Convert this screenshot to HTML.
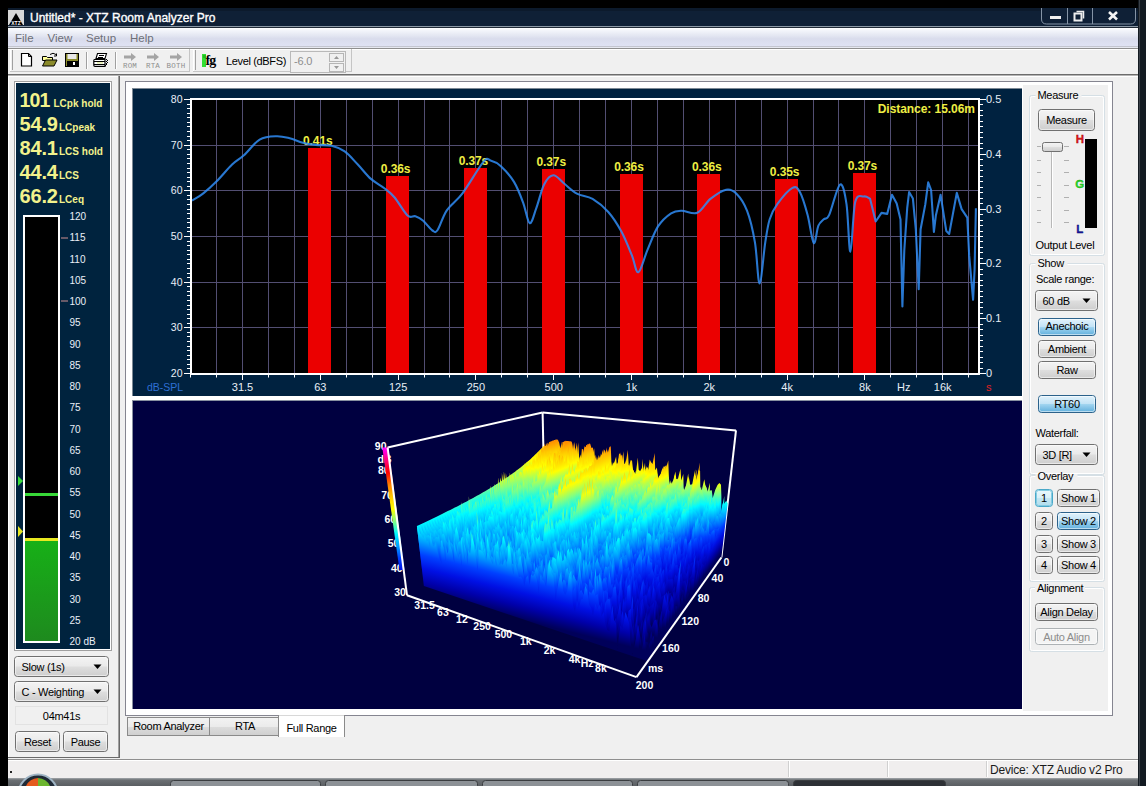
<!DOCTYPE html><html><head><meta charset="utf-8"><title>XTZ Room Analyzer Pro</title><style>html,body{margin:0;padding:0;background:#000;width:1146px;height:786px;overflow:hidden}</style></head><body><svg width="1146" height="786" viewBox="0 0 1146 786" font-family='"Liberation Sans", sans-serif' style="display:block"><defs><linearGradient id="gMenu" x1="0" y1="0" x2="0" y2="1"><stop offset="0" stop-color="#ffffff"/><stop offset="0.12" stop-color="#f4f6fb"/><stop offset="0.45" stop-color="#e2e5f1"/><stop offset="0.6" stop-color="#d9dcec"/><stop offset="1" stop-color="#dfe2f3"/></linearGradient><linearGradient id="gTask" x1="0" y1="0" x2="0" y2="1"><stop offset="0" stop-color="#a4a8ac"/><stop offset="0.25" stop-color="#6c7074"/><stop offset="1" stop-color="#5a5e62"/></linearGradient><linearGradient id="gGreen" x1="0" y1="0" x2="0" y2="1"><stop offset="0" stop-color="#17b017"/><stop offset="1" stop-color="#1e8a1e"/></linearGradient><clipPath id="cpPlot"><rect x="192" y="100" width="786" height="273"/></clipPath><linearGradient id="w0" gradientUnits="userSpaceOnUse" x1="633.9" y1="538.7" x2="652.0" y2="423.4"><stop offset="0.000" stop-color="rgb(0, 0, 90)"/><stop offset="0.083" stop-color="rgb(0, 0, 170)"/><stop offset="0.167" stop-color="rgb(0, 16, 228)"/><stop offset="0.250" stop-color="rgb(0, 64, 255)"/><stop offset="0.333" stop-color="rgb(0, 160, 255)"/><stop offset="0.417" stop-color="rgb(0, 250, 255)"/><stop offset="0.500" stop-color="rgb(130, 255, 130)"/><stop offset="0.583" stop-color="rgb(255, 255, 0)"/><stop offset="0.667" stop-color="rgb(255, 200, 0)"/><stop offset="0.750" stop-color="rgb(255, 128, 0)"/><stop offset="0.833" stop-color="rgb(255, 0, 0)"/><stop offset="0.917" stop-color="rgb(255, 0, 128)"/><stop offset="1.000" stop-color="rgb(255, 0, 255)"/></linearGradient><linearGradient id="w1" gradientUnits="userSpaceOnUse" x1="632.8" y1="539.7" x2="651.0" y2="423.9"><stop offset="0.000" stop-color="rgb(0, 0, 90)"/><stop offset="0.083" stop-color="rgb(0, 0, 170)"/><stop offset="0.167" stop-color="rgb(0, 16, 228)"/><stop offset="0.250" stop-color="rgb(0, 64, 255)"/><stop offset="0.333" stop-color="rgb(0, 160, 255)"/><stop offset="0.417" stop-color="rgb(0, 250, 255)"/><stop offset="0.500" stop-color="rgb(130, 255, 130)"/><stop offset="0.583" stop-color="rgb(255, 255, 0)"/><stop offset="0.667" stop-color="rgb(255, 200, 0)"/><stop offset="0.750" stop-color="rgb(255, 128, 0)"/><stop offset="0.833" stop-color="rgb(255, 0, 0)"/><stop offset="0.917" stop-color="rgb(255, 0, 128)"/><stop offset="1.000" stop-color="rgb(255, 0, 255)"/></linearGradient><linearGradient id="w2" gradientUnits="userSpaceOnUse" x1="631.6" y1="540.6" x2="650.1" y2="424.4"><stop offset="0.000" stop-color="rgb(0, 0, 90)"/><stop offset="0.083" stop-color="rgb(0, 0, 170)"/><stop offset="0.167" stop-color="rgb(0, 16, 228)"/><stop offset="0.250" stop-color="rgb(0, 64, 255)"/><stop offset="0.333" stop-color="rgb(0, 160, 255)"/><stop offset="0.417" stop-color="rgb(0, 250, 255)"/><stop offset="0.500" stop-color="rgb(130, 255, 130)"/><stop offset="0.583" stop-color="rgb(255, 255, 0)"/><stop offset="0.667" stop-color="rgb(255, 200, 0)"/><stop offset="0.750" stop-color="rgb(255, 128, 0)"/><stop offset="0.833" stop-color="rgb(255, 0, 0)"/><stop offset="0.917" stop-color="rgb(255, 0, 128)"/><stop offset="1.000" stop-color="rgb(255, 0, 255)"/></linearGradient><linearGradient id="w3" gradientUnits="userSpaceOnUse" x1="630.5" y1="541.6" x2="649.1" y2="424.9"><stop offset="0.000" stop-color="rgb(0, 0, 90)"/><stop offset="0.083" stop-color="rgb(0, 0, 170)"/><stop offset="0.167" stop-color="rgb(0, 16, 228)"/><stop offset="0.250" stop-color="rgb(0, 64, 255)"/><stop offset="0.333" stop-color="rgb(0, 160, 255)"/><stop offset="0.417" stop-color="rgb(0, 250, 255)"/><stop offset="0.500" stop-color="rgb(130, 255, 130)"/><stop offset="0.583" stop-color="rgb(255, 255, 0)"/><stop offset="0.667" stop-color="rgb(255, 200, 0)"/><stop offset="0.750" stop-color="rgb(255, 128, 0)"/><stop offset="0.833" stop-color="rgb(255, 0, 0)"/><stop offset="0.917" stop-color="rgb(255, 0, 128)"/><stop offset="1.000" stop-color="rgb(255, 0, 255)"/></linearGradient><linearGradient id="w4" gradientUnits="userSpaceOnUse" x1="629.3" y1="542.6" x2="648.1" y2="425.4"><stop offset="0.000" stop-color="rgb(0, 0, 90)"/><stop offset="0.083" stop-color="rgb(0, 0, 170)"/><stop offset="0.167" stop-color="rgb(0, 16, 228)"/><stop offset="0.250" stop-color="rgb(0, 64, 255)"/><stop offset="0.333" stop-color="rgb(0, 160, 255)"/><stop offset="0.417" stop-color="rgb(0, 250, 255)"/><stop offset="0.500" stop-color="rgb(130, 255, 130)"/><stop offset="0.583" stop-color="rgb(255, 255, 0)"/><stop offset="0.667" stop-color="rgb(255, 200, 0)"/><stop offset="0.750" stop-color="rgb(255, 128, 0)"/><stop offset="0.833" stop-color="rgb(255, 0, 0)"/><stop offset="0.917" stop-color="rgb(255, 0, 128)"/><stop offset="1.000" stop-color="rgb(255, 0, 255)"/></linearGradient><linearGradient id="w5" gradientUnits="userSpaceOnUse" x1="628.1" y1="543.5" x2="647.1" y2="425.9"><stop offset="0.000" stop-color="rgb(0, 0, 90)"/><stop offset="0.083" stop-color="rgb(0, 0, 170)"/><stop offset="0.167" stop-color="rgb(0, 16, 228)"/><stop offset="0.250" stop-color="rgb(0, 64, 255)"/><stop offset="0.333" stop-color="rgb(0, 160, 255)"/><stop offset="0.417" stop-color="rgb(0, 250, 255)"/><stop offset="0.500" stop-color="rgb(130, 255, 130)"/><stop offset="0.583" stop-color="rgb(255, 255, 0)"/><stop offset="0.667" stop-color="rgb(255, 200, 0)"/><stop offset="0.750" stop-color="rgb(255, 128, 0)"/><stop offset="0.833" stop-color="rgb(255, 0, 0)"/><stop offset="0.917" stop-color="rgb(255, 0, 128)"/><stop offset="1.000" stop-color="rgb(255, 0, 255)"/></linearGradient><linearGradient id="w6" gradientUnits="userSpaceOnUse" x1="626.9" y1="544.5" x2="646.1" y2="426.4"><stop offset="0.000" stop-color="rgb(0, 0, 90)"/><stop offset="0.083" stop-color="rgb(0, 0, 170)"/><stop offset="0.167" stop-color="rgb(0, 16, 228)"/><stop offset="0.250" stop-color="rgb(0, 64, 255)"/><stop offset="0.333" stop-color="rgb(0, 160, 255)"/><stop offset="0.417" stop-color="rgb(0, 250, 255)"/><stop offset="0.500" stop-color="rgb(130, 255, 130)"/><stop offset="0.583" stop-color="rgb(255, 255, 0)"/><stop offset="0.667" stop-color="rgb(255, 200, 0)"/><stop offset="0.750" stop-color="rgb(255, 128, 0)"/><stop offset="0.833" stop-color="rgb(255, 0, 0)"/><stop offset="0.917" stop-color="rgb(255, 0, 128)"/><stop offset="1.000" stop-color="rgb(255, 0, 255)"/></linearGradient><linearGradient id="w7" gradientUnits="userSpaceOnUse" x1="625.7" y1="545.5" x2="645.1" y2="426.9"><stop offset="0.000" stop-color="rgb(0, 0, 90)"/><stop offset="0.083" stop-color="rgb(0, 0, 170)"/><stop offset="0.167" stop-color="rgb(0, 16, 228)"/><stop offset="0.250" stop-color="rgb(0, 64, 255)"/><stop offset="0.333" stop-color="rgb(0, 160, 255)"/><stop offset="0.417" stop-color="rgb(0, 250, 255)"/><stop offset="0.500" stop-color="rgb(130, 255, 130)"/><stop offset="0.583" stop-color="rgb(255, 255, 0)"/><stop offset="0.667" stop-color="rgb(255, 200, 0)"/><stop offset="0.750" stop-color="rgb(255, 128, 0)"/><stop offset="0.833" stop-color="rgb(255, 0, 0)"/><stop offset="0.917" stop-color="rgb(255, 0, 128)"/><stop offset="1.000" stop-color="rgb(255, 0, 255)"/></linearGradient><linearGradient id="w8" gradientUnits="userSpaceOnUse" x1="624.5" y1="546.5" x2="644.0" y2="427.4"><stop offset="0.000" stop-color="rgb(0, 0, 90)"/><stop offset="0.083" stop-color="rgb(0, 0, 170)"/><stop offset="0.167" stop-color="rgb(0, 16, 228)"/><stop offset="0.250" stop-color="rgb(0, 64, 255)"/><stop offset="0.333" stop-color="rgb(0, 160, 255)"/><stop offset="0.417" stop-color="rgb(0, 250, 255)"/><stop offset="0.500" stop-color="rgb(130, 255, 130)"/><stop offset="0.583" stop-color="rgb(255, 255, 0)"/><stop offset="0.667" stop-color="rgb(255, 200, 0)"/><stop offset="0.750" stop-color="rgb(255, 128, 0)"/><stop offset="0.833" stop-color="rgb(255, 0, 0)"/><stop offset="0.917" stop-color="rgb(255, 0, 128)"/><stop offset="1.000" stop-color="rgb(255, 0, 255)"/></linearGradient><linearGradient id="w9" gradientUnits="userSpaceOnUse" x1="623.3" y1="547.6" x2="643.0" y2="428.0"><stop offset="0.000" stop-color="rgb(0, 0, 90)"/><stop offset="0.083" stop-color="rgb(0, 0, 170)"/><stop offset="0.167" stop-color="rgb(0, 16, 228)"/><stop offset="0.250" stop-color="rgb(0, 64, 255)"/><stop offset="0.333" stop-color="rgb(0, 160, 255)"/><stop offset="0.417" stop-color="rgb(0, 250, 255)"/><stop offset="0.500" stop-color="rgb(130, 255, 130)"/><stop offset="0.583" stop-color="rgb(255, 255, 0)"/><stop offset="0.667" stop-color="rgb(255, 200, 0)"/><stop offset="0.750" stop-color="rgb(255, 128, 0)"/><stop offset="0.833" stop-color="rgb(255, 0, 0)"/><stop offset="0.917" stop-color="rgb(255, 0, 128)"/><stop offset="1.000" stop-color="rgb(255, 0, 255)"/></linearGradient><linearGradient id="w10" gradientUnits="userSpaceOnUse" x1="622.0" y1="548.6" x2="642.0" y2="428.5"><stop offset="0.000" stop-color="rgb(0, 0, 90)"/><stop offset="0.083" stop-color="rgb(0, 0, 170)"/><stop offset="0.167" stop-color="rgb(0, 16, 228)"/><stop offset="0.250" stop-color="rgb(0, 64, 255)"/><stop offset="0.333" stop-color="rgb(0, 160, 255)"/><stop offset="0.417" stop-color="rgb(0, 250, 255)"/><stop offset="0.500" stop-color="rgb(130, 255, 130)"/><stop offset="0.583" stop-color="rgb(255, 255, 0)"/><stop offset="0.667" stop-color="rgb(255, 200, 0)"/><stop offset="0.750" stop-color="rgb(255, 128, 0)"/><stop offset="0.833" stop-color="rgb(255, 0, 0)"/><stop offset="0.917" stop-color="rgb(255, 0, 128)"/><stop offset="1.000" stop-color="rgb(255, 0, 255)"/></linearGradient><linearGradient id="w11" gradientUnits="userSpaceOnUse" x1="620.7" y1="549.6" x2="640.9" y2="429.0"><stop offset="0.000" stop-color="rgb(0, 0, 90)"/><stop offset="0.083" stop-color="rgb(0, 0, 170)"/><stop offset="0.167" stop-color="rgb(0, 16, 228)"/><stop offset="0.250" stop-color="rgb(0, 64, 255)"/><stop offset="0.333" stop-color="rgb(0, 160, 255)"/><stop offset="0.417" stop-color="rgb(0, 250, 255)"/><stop offset="0.500" stop-color="rgb(130, 255, 130)"/><stop offset="0.583" stop-color="rgb(255, 255, 0)"/><stop offset="0.667" stop-color="rgb(255, 200, 0)"/><stop offset="0.750" stop-color="rgb(255, 128, 0)"/><stop offset="0.833" stop-color="rgb(255, 0, 0)"/><stop offset="0.917" stop-color="rgb(255, 0, 128)"/><stop offset="1.000" stop-color="rgb(255, 0, 255)"/></linearGradient><linearGradient id="w12" gradientUnits="userSpaceOnUse" x1="619.5" y1="550.7" x2="639.9" y2="429.6"><stop offset="0.000" stop-color="rgb(0, 0, 90)"/><stop offset="0.083" stop-color="rgb(0, 0, 170)"/><stop offset="0.167" stop-color="rgb(0, 16, 228)"/><stop offset="0.250" stop-color="rgb(0, 64, 255)"/><stop offset="0.333" stop-color="rgb(0, 160, 255)"/><stop offset="0.417" stop-color="rgb(0, 250, 255)"/><stop offset="0.500" stop-color="rgb(130, 255, 130)"/><stop offset="0.583" stop-color="rgb(255, 255, 0)"/><stop offset="0.667" stop-color="rgb(255, 200, 0)"/><stop offset="0.750" stop-color="rgb(255, 128, 0)"/><stop offset="0.833" stop-color="rgb(255, 0, 0)"/><stop offset="0.917" stop-color="rgb(255, 0, 128)"/><stop offset="1.000" stop-color="rgb(255, 0, 255)"/></linearGradient><linearGradient id="w13" gradientUnits="userSpaceOnUse" x1="618.2" y1="551.8" x2="638.8" y2="430.2"><stop offset="0.000" stop-color="rgb(0, 0, 90)"/><stop offset="0.083" stop-color="rgb(0, 0, 170)"/><stop offset="0.167" stop-color="rgb(0, 16, 228)"/><stop offset="0.250" stop-color="rgb(0, 64, 255)"/><stop offset="0.333" stop-color="rgb(0, 160, 255)"/><stop offset="0.417" stop-color="rgb(0, 250, 255)"/><stop offset="0.500" stop-color="rgb(130, 255, 130)"/><stop offset="0.583" stop-color="rgb(255, 255, 0)"/><stop offset="0.667" stop-color="rgb(255, 200, 0)"/><stop offset="0.750" stop-color="rgb(255, 128, 0)"/><stop offset="0.833" stop-color="rgb(255, 0, 0)"/><stop offset="0.917" stop-color="rgb(255, 0, 128)"/><stop offset="1.000" stop-color="rgb(255, 0, 255)"/></linearGradient><linearGradient id="w14" gradientUnits="userSpaceOnUse" x1="616.9" y1="552.8" x2="637.7" y2="430.7"><stop offset="0.000" stop-color="rgb(0, 0, 90)"/><stop offset="0.083" stop-color="rgb(0, 0, 170)"/><stop offset="0.167" stop-color="rgb(0, 16, 228)"/><stop offset="0.250" stop-color="rgb(0, 64, 255)"/><stop offset="0.333" stop-color="rgb(0, 160, 255)"/><stop offset="0.417" stop-color="rgb(0, 250, 255)"/><stop offset="0.500" stop-color="rgb(130, 255, 130)"/><stop offset="0.583" stop-color="rgb(255, 255, 0)"/><stop offset="0.667" stop-color="rgb(255, 200, 0)"/><stop offset="0.750" stop-color="rgb(255, 128, 0)"/><stop offset="0.833" stop-color="rgb(255, 0, 0)"/><stop offset="0.917" stop-color="rgb(255, 0, 128)"/><stop offset="1.000" stop-color="rgb(255, 0, 255)"/></linearGradient><linearGradient id="w15" gradientUnits="userSpaceOnUse" x1="615.6" y1="553.9" x2="636.6" y2="431.3"><stop offset="0.000" stop-color="rgb(0, 0, 90)"/><stop offset="0.083" stop-color="rgb(0, 0, 170)"/><stop offset="0.167" stop-color="rgb(0, 16, 228)"/><stop offset="0.250" stop-color="rgb(0, 64, 255)"/><stop offset="0.333" stop-color="rgb(0, 160, 255)"/><stop offset="0.417" stop-color="rgb(0, 250, 255)"/><stop offset="0.500" stop-color="rgb(130, 255, 130)"/><stop offset="0.583" stop-color="rgb(255, 255, 0)"/><stop offset="0.667" stop-color="rgb(255, 200, 0)"/><stop offset="0.750" stop-color="rgb(255, 128, 0)"/><stop offset="0.833" stop-color="rgb(255, 0, 0)"/><stop offset="0.917" stop-color="rgb(255, 0, 128)"/><stop offset="1.000" stop-color="rgb(255, 0, 255)"/></linearGradient><linearGradient id="w16" gradientUnits="userSpaceOnUse" x1="614.3" y1="555.0" x2="635.5" y2="431.9"><stop offset="0.000" stop-color="rgb(0, 0, 90)"/><stop offset="0.083" stop-color="rgb(0, 0, 170)"/><stop offset="0.167" stop-color="rgb(0, 16, 228)"/><stop offset="0.250" stop-color="rgb(0, 64, 255)"/><stop offset="0.333" stop-color="rgb(0, 160, 255)"/><stop offset="0.417" stop-color="rgb(0, 250, 255)"/><stop offset="0.500" stop-color="rgb(130, 255, 130)"/><stop offset="0.583" stop-color="rgb(255, 255, 0)"/><stop offset="0.667" stop-color="rgb(255, 200, 0)"/><stop offset="0.750" stop-color="rgb(255, 128, 0)"/><stop offset="0.833" stop-color="rgb(255, 0, 0)"/><stop offset="0.917" stop-color="rgb(255, 0, 128)"/><stop offset="1.000" stop-color="rgb(255, 0, 255)"/></linearGradient><linearGradient id="w17" gradientUnits="userSpaceOnUse" x1="612.9" y1="556.1" x2="634.4" y2="432.5"><stop offset="0.000" stop-color="rgb(0, 0, 90)"/><stop offset="0.083" stop-color="rgb(0, 0, 170)"/><stop offset="0.167" stop-color="rgb(0, 16, 228)"/><stop offset="0.250" stop-color="rgb(0, 64, 255)"/><stop offset="0.333" stop-color="rgb(0, 160, 255)"/><stop offset="0.417" stop-color="rgb(0, 250, 255)"/><stop offset="0.500" stop-color="rgb(130, 255, 130)"/><stop offset="0.583" stop-color="rgb(255, 255, 0)"/><stop offset="0.667" stop-color="rgb(255, 200, 0)"/><stop offset="0.750" stop-color="rgb(255, 128, 0)"/><stop offset="0.833" stop-color="rgb(255, 0, 0)"/><stop offset="0.917" stop-color="rgb(255, 0, 128)"/><stop offset="1.000" stop-color="rgb(255, 0, 255)"/></linearGradient><linearGradient id="w18" gradientUnits="userSpaceOnUse" x1="611.6" y1="557.2" x2="633.3" y2="433.1"><stop offset="0.000" stop-color="rgb(0, 0, 90)"/><stop offset="0.083" stop-color="rgb(0, 0, 170)"/><stop offset="0.167" stop-color="rgb(0, 16, 228)"/><stop offset="0.250" stop-color="rgb(0, 64, 255)"/><stop offset="0.333" stop-color="rgb(0, 160, 255)"/><stop offset="0.417" stop-color="rgb(0, 250, 255)"/><stop offset="0.500" stop-color="rgb(130, 255, 130)"/><stop offset="0.583" stop-color="rgb(255, 255, 0)"/><stop offset="0.667" stop-color="rgb(255, 200, 0)"/><stop offset="0.750" stop-color="rgb(255, 128, 0)"/><stop offset="0.833" stop-color="rgb(255, 0, 0)"/><stop offset="0.917" stop-color="rgb(255, 0, 128)"/><stop offset="1.000" stop-color="rgb(255, 0, 255)"/></linearGradient><linearGradient id="w19" gradientUnits="userSpaceOnUse" x1="610.2" y1="558.3" x2="632.2" y2="433.7"><stop offset="0.000" stop-color="rgb(0, 0, 90)"/><stop offset="0.083" stop-color="rgb(0, 0, 170)"/><stop offset="0.167" stop-color="rgb(0, 16, 228)"/><stop offset="0.250" stop-color="rgb(0, 64, 255)"/><stop offset="0.333" stop-color="rgb(0, 160, 255)"/><stop offset="0.417" stop-color="rgb(0, 250, 255)"/><stop offset="0.500" stop-color="rgb(130, 255, 130)"/><stop offset="0.583" stop-color="rgb(255, 255, 0)"/><stop offset="0.667" stop-color="rgb(255, 200, 0)"/><stop offset="0.750" stop-color="rgb(255, 128, 0)"/><stop offset="0.833" stop-color="rgb(255, 0, 0)"/><stop offset="0.917" stop-color="rgb(255, 0, 128)"/><stop offset="1.000" stop-color="rgb(255, 0, 255)"/></linearGradient><linearGradient id="w20" gradientUnits="userSpaceOnUse" x1="608.9" y1="559.5" x2="631.1" y2="434.3"><stop offset="0.000" stop-color="rgb(0, 0, 90)"/><stop offset="0.083" stop-color="rgb(0, 0, 170)"/><stop offset="0.167" stop-color="rgb(0, 16, 228)"/><stop offset="0.250" stop-color="rgb(0, 64, 255)"/><stop offset="0.333" stop-color="rgb(0, 160, 255)"/><stop offset="0.417" stop-color="rgb(0, 250, 255)"/><stop offset="0.500" stop-color="rgb(130, 255, 130)"/><stop offset="0.583" stop-color="rgb(255, 255, 0)"/><stop offset="0.667" stop-color="rgb(255, 200, 0)"/><stop offset="0.750" stop-color="rgb(255, 128, 0)"/><stop offset="0.833" stop-color="rgb(255, 0, 0)"/><stop offset="0.917" stop-color="rgb(255, 0, 128)"/><stop offset="1.000" stop-color="rgb(255, 0, 255)"/></linearGradient><linearGradient id="w21" gradientUnits="userSpaceOnUse" x1="607.5" y1="560.6" x2="629.9" y2="434.9"><stop offset="0.000" stop-color="rgb(0, 0, 90)"/><stop offset="0.083" stop-color="rgb(0, 0, 170)"/><stop offset="0.167" stop-color="rgb(0, 16, 228)"/><stop offset="0.250" stop-color="rgb(0, 64, 255)"/><stop offset="0.333" stop-color="rgb(0, 160, 255)"/><stop offset="0.417" stop-color="rgb(0, 250, 255)"/><stop offset="0.500" stop-color="rgb(130, 255, 130)"/><stop offset="0.583" stop-color="rgb(255, 255, 0)"/><stop offset="0.667" stop-color="rgb(255, 200, 0)"/><stop offset="0.750" stop-color="rgb(255, 128, 0)"/><stop offset="0.833" stop-color="rgb(255, 0, 0)"/><stop offset="0.917" stop-color="rgb(255, 0, 128)"/><stop offset="1.000" stop-color="rgb(255, 0, 255)"/></linearGradient><linearGradient id="w22" gradientUnits="userSpaceOnUse" x1="606.1" y1="561.8" x2="628.8" y2="435.6"><stop offset="0.000" stop-color="rgb(0, 0, 90)"/><stop offset="0.083" stop-color="rgb(0, 0, 170)"/><stop offset="0.167" stop-color="rgb(0, 16, 228)"/><stop offset="0.250" stop-color="rgb(0, 64, 255)"/><stop offset="0.333" stop-color="rgb(0, 160, 255)"/><stop offset="0.417" stop-color="rgb(0, 250, 255)"/><stop offset="0.500" stop-color="rgb(130, 255, 130)"/><stop offset="0.583" stop-color="rgb(255, 255, 0)"/><stop offset="0.667" stop-color="rgb(255, 200, 0)"/><stop offset="0.750" stop-color="rgb(255, 128, 0)"/><stop offset="0.833" stop-color="rgb(255, 0, 0)"/><stop offset="0.917" stop-color="rgb(255, 0, 128)"/><stop offset="1.000" stop-color="rgb(255, 0, 255)"/></linearGradient><linearGradient id="w23" gradientUnits="userSpaceOnUse" x1="604.6" y1="563.0" x2="627.6" y2="436.2"><stop offset="0.000" stop-color="rgb(0, 0, 90)"/><stop offset="0.083" stop-color="rgb(0, 0, 170)"/><stop offset="0.167" stop-color="rgb(0, 16, 228)"/><stop offset="0.250" stop-color="rgb(0, 64, 255)"/><stop offset="0.333" stop-color="rgb(0, 160, 255)"/><stop offset="0.417" stop-color="rgb(0, 250, 255)"/><stop offset="0.500" stop-color="rgb(130, 255, 130)"/><stop offset="0.583" stop-color="rgb(255, 255, 0)"/><stop offset="0.667" stop-color="rgb(255, 200, 0)"/><stop offset="0.750" stop-color="rgb(255, 128, 0)"/><stop offset="0.833" stop-color="rgb(255, 0, 0)"/><stop offset="0.917" stop-color="rgb(255, 0, 128)"/><stop offset="1.000" stop-color="rgb(255, 0, 255)"/></linearGradient><linearGradient id="w24" gradientUnits="userSpaceOnUse" x1="603.2" y1="564.2" x2="626.4" y2="436.8"><stop offset="0.000" stop-color="rgb(0, 0, 90)"/><stop offset="0.083" stop-color="rgb(0, 0, 170)"/><stop offset="0.167" stop-color="rgb(0, 16, 228)"/><stop offset="0.250" stop-color="rgb(0, 64, 255)"/><stop offset="0.333" stop-color="rgb(0, 160, 255)"/><stop offset="0.417" stop-color="rgb(0, 250, 255)"/><stop offset="0.500" stop-color="rgb(130, 255, 130)"/><stop offset="0.583" stop-color="rgb(255, 255, 0)"/><stop offset="0.667" stop-color="rgb(255, 200, 0)"/><stop offset="0.750" stop-color="rgb(255, 128, 0)"/><stop offset="0.833" stop-color="rgb(255, 0, 0)"/><stop offset="0.917" stop-color="rgb(255, 0, 128)"/><stop offset="1.000" stop-color="rgb(255, 0, 255)"/></linearGradient><linearGradient id="w25" gradientUnits="userSpaceOnUse" x1="601.8" y1="565.3" x2="625.2" y2="437.5"><stop offset="0.000" stop-color="rgb(0, 0, 90)"/><stop offset="0.083" stop-color="rgb(0, 0, 170)"/><stop offset="0.167" stop-color="rgb(0, 16, 228)"/><stop offset="0.250" stop-color="rgb(0, 64, 255)"/><stop offset="0.333" stop-color="rgb(0, 160, 255)"/><stop offset="0.417" stop-color="rgb(0, 250, 255)"/><stop offset="0.500" stop-color="rgb(130, 255, 130)"/><stop offset="0.583" stop-color="rgb(255, 255, 0)"/><stop offset="0.667" stop-color="rgb(255, 200, 0)"/><stop offset="0.750" stop-color="rgb(255, 128, 0)"/><stop offset="0.833" stop-color="rgb(255, 0, 0)"/><stop offset="0.917" stop-color="rgb(255, 0, 128)"/><stop offset="1.000" stop-color="rgb(255, 0, 255)"/></linearGradient><linearGradient id="w26" gradientUnits="userSpaceOnUse" x1="600.3" y1="566.6" x2="624.0" y2="438.2"><stop offset="0.000" stop-color="rgb(0, 0, 90)"/><stop offset="0.083" stop-color="rgb(0, 0, 170)"/><stop offset="0.167" stop-color="rgb(0, 16, 228)"/><stop offset="0.250" stop-color="rgb(0, 64, 255)"/><stop offset="0.333" stop-color="rgb(0, 160, 255)"/><stop offset="0.417" stop-color="rgb(0, 250, 255)"/><stop offset="0.500" stop-color="rgb(130, 255, 130)"/><stop offset="0.583" stop-color="rgb(255, 255, 0)"/><stop offset="0.667" stop-color="rgb(255, 200, 0)"/><stop offset="0.750" stop-color="rgb(255, 128, 0)"/><stop offset="0.833" stop-color="rgb(255, 0, 0)"/><stop offset="0.917" stop-color="rgb(255, 0, 128)"/><stop offset="1.000" stop-color="rgb(255, 0, 255)"/></linearGradient><linearGradient id="w27" gradientUnits="userSpaceOnUse" x1="598.8" y1="567.8" x2="622.8" y2="438.9"><stop offset="0.000" stop-color="rgb(0, 0, 90)"/><stop offset="0.083" stop-color="rgb(0, 0, 170)"/><stop offset="0.167" stop-color="rgb(0, 16, 228)"/><stop offset="0.250" stop-color="rgb(0, 64, 255)"/><stop offset="0.333" stop-color="rgb(0, 160, 255)"/><stop offset="0.417" stop-color="rgb(0, 250, 255)"/><stop offset="0.500" stop-color="rgb(130, 255, 130)"/><stop offset="0.583" stop-color="rgb(255, 255, 0)"/><stop offset="0.667" stop-color="rgb(255, 200, 0)"/><stop offset="0.750" stop-color="rgb(255, 128, 0)"/><stop offset="0.833" stop-color="rgb(255, 0, 0)"/><stop offset="0.917" stop-color="rgb(255, 0, 128)"/><stop offset="1.000" stop-color="rgb(255, 0, 255)"/></linearGradient><linearGradient id="w28" gradientUnits="userSpaceOnUse" x1="597.3" y1="569.0" x2="621.6" y2="439.5"><stop offset="0.000" stop-color="rgb(0, 0, 90)"/><stop offset="0.083" stop-color="rgb(0, 0, 170)"/><stop offset="0.167" stop-color="rgb(0, 16, 228)"/><stop offset="0.250" stop-color="rgb(0, 64, 255)"/><stop offset="0.333" stop-color="rgb(0, 160, 255)"/><stop offset="0.417" stop-color="rgb(0, 250, 255)"/><stop offset="0.500" stop-color="rgb(130, 255, 130)"/><stop offset="0.583" stop-color="rgb(255, 255, 0)"/><stop offset="0.667" stop-color="rgb(255, 200, 0)"/><stop offset="0.750" stop-color="rgb(255, 128, 0)"/><stop offset="0.833" stop-color="rgb(255, 0, 0)"/><stop offset="0.917" stop-color="rgb(255, 0, 128)"/><stop offset="1.000" stop-color="rgb(255, 0, 255)"/></linearGradient><linearGradient id="w29" gradientUnits="userSpaceOnUse" x1="595.8" y1="570.3" x2="620.4" y2="440.2"><stop offset="0.000" stop-color="rgb(0, 0, 90)"/><stop offset="0.083" stop-color="rgb(0, 0, 170)"/><stop offset="0.167" stop-color="rgb(0, 16, 228)"/><stop offset="0.250" stop-color="rgb(0, 64, 255)"/><stop offset="0.333" stop-color="rgb(0, 160, 255)"/><stop offset="0.417" stop-color="rgb(0, 250, 255)"/><stop offset="0.500" stop-color="rgb(130, 255, 130)"/><stop offset="0.583" stop-color="rgb(255, 255, 0)"/><stop offset="0.667" stop-color="rgb(255, 200, 0)"/><stop offset="0.750" stop-color="rgb(255, 128, 0)"/><stop offset="0.833" stop-color="rgb(255, 0, 0)"/><stop offset="0.917" stop-color="rgb(255, 0, 128)"/><stop offset="1.000" stop-color="rgb(255, 0, 255)"/></linearGradient><linearGradient id="w30" gradientUnits="userSpaceOnUse" x1="594.3" y1="571.5" x2="619.1" y2="440.9"><stop offset="0.000" stop-color="rgb(0, 0, 90)"/><stop offset="0.083" stop-color="rgb(0, 0, 170)"/><stop offset="0.167" stop-color="rgb(0, 16, 228)"/><stop offset="0.250" stop-color="rgb(0, 64, 255)"/><stop offset="0.333" stop-color="rgb(0, 160, 255)"/><stop offset="0.417" stop-color="rgb(0, 250, 255)"/><stop offset="0.500" stop-color="rgb(130, 255, 130)"/><stop offset="0.583" stop-color="rgb(255, 255, 0)"/><stop offset="0.667" stop-color="rgb(255, 200, 0)"/><stop offset="0.750" stop-color="rgb(255, 128, 0)"/><stop offset="0.833" stop-color="rgb(255, 0, 0)"/><stop offset="0.917" stop-color="rgb(255, 0, 128)"/><stop offset="1.000" stop-color="rgb(255, 0, 255)"/></linearGradient><linearGradient id="w31" gradientUnits="userSpaceOnUse" x1="592.7" y1="572.8" x2="617.9" y2="441.7"><stop offset="0.000" stop-color="rgb(0, 0, 90)"/><stop offset="0.083" stop-color="rgb(0, 0, 170)"/><stop offset="0.167" stop-color="rgb(0, 16, 228)"/><stop offset="0.250" stop-color="rgb(0, 64, 255)"/><stop offset="0.333" stop-color="rgb(0, 160, 255)"/><stop offset="0.417" stop-color="rgb(0, 250, 255)"/><stop offset="0.500" stop-color="rgb(130, 255, 130)"/><stop offset="0.583" stop-color="rgb(255, 255, 0)"/><stop offset="0.667" stop-color="rgb(255, 200, 0)"/><stop offset="0.750" stop-color="rgb(255, 128, 0)"/><stop offset="0.833" stop-color="rgb(255, 0, 0)"/><stop offset="0.917" stop-color="rgb(255, 0, 128)"/><stop offset="1.000" stop-color="rgb(255, 0, 255)"/></linearGradient><linearGradient id="w32" gradientUnits="userSpaceOnUse" x1="591.2" y1="574.1" x2="616.6" y2="442.4"><stop offset="0.000" stop-color="rgb(0, 0, 90)"/><stop offset="0.083" stop-color="rgb(0, 0, 170)"/><stop offset="0.167" stop-color="rgb(0, 16, 228)"/><stop offset="0.250" stop-color="rgb(0, 64, 255)"/><stop offset="0.333" stop-color="rgb(0, 160, 255)"/><stop offset="0.417" stop-color="rgb(0, 250, 255)"/><stop offset="0.500" stop-color="rgb(130, 255, 130)"/><stop offset="0.583" stop-color="rgb(255, 255, 0)"/><stop offset="0.667" stop-color="rgb(255, 200, 0)"/><stop offset="0.750" stop-color="rgb(255, 128, 0)"/><stop offset="0.833" stop-color="rgb(255, 0, 0)"/><stop offset="0.917" stop-color="rgb(255, 0, 128)"/><stop offset="1.000" stop-color="rgb(255, 0, 255)"/></linearGradient><linearGradient id="w33" gradientUnits="userSpaceOnUse" x1="589.6" y1="575.4" x2="615.3" y2="443.1"><stop offset="0.000" stop-color="rgb(0, 0, 90)"/><stop offset="0.083" stop-color="rgb(0, 0, 170)"/><stop offset="0.167" stop-color="rgb(0, 16, 228)"/><stop offset="0.250" stop-color="rgb(0, 64, 255)"/><stop offset="0.333" stop-color="rgb(0, 160, 255)"/><stop offset="0.417" stop-color="rgb(0, 250, 255)"/><stop offset="0.500" stop-color="rgb(130, 255, 130)"/><stop offset="0.583" stop-color="rgb(255, 255, 0)"/><stop offset="0.667" stop-color="rgb(255, 200, 0)"/><stop offset="0.750" stop-color="rgb(255, 128, 0)"/><stop offset="0.833" stop-color="rgb(255, 0, 0)"/><stop offset="0.917" stop-color="rgb(255, 0, 128)"/><stop offset="1.000" stop-color="rgb(255, 0, 255)"/></linearGradient><linearGradient id="w34" gradientUnits="userSpaceOnUse" x1="588.0" y1="576.7" x2="614.0" y2="443.9"><stop offset="0.000" stop-color="rgb(0, 0, 90)"/><stop offset="0.083" stop-color="rgb(0, 0, 170)"/><stop offset="0.167" stop-color="rgb(0, 16, 228)"/><stop offset="0.250" stop-color="rgb(0, 64, 255)"/><stop offset="0.333" stop-color="rgb(0, 160, 255)"/><stop offset="0.417" stop-color="rgb(0, 250, 255)"/><stop offset="0.500" stop-color="rgb(130, 255, 130)"/><stop offset="0.583" stop-color="rgb(255, 255, 0)"/><stop offset="0.667" stop-color="rgb(255, 200, 0)"/><stop offset="0.750" stop-color="rgb(255, 128, 0)"/><stop offset="0.833" stop-color="rgb(255, 0, 0)"/><stop offset="0.917" stop-color="rgb(255, 0, 128)"/><stop offset="1.000" stop-color="rgb(255, 0, 255)"/></linearGradient><linearGradient id="w35" gradientUnits="userSpaceOnUse" x1="586.4" y1="578.1" x2="612.7" y2="444.6"><stop offset="0.000" stop-color="rgb(0, 0, 90)"/><stop offset="0.083" stop-color="rgb(0, 0, 170)"/><stop offset="0.167" stop-color="rgb(0, 16, 228)"/><stop offset="0.250" stop-color="rgb(0, 64, 255)"/><stop offset="0.333" stop-color="rgb(0, 160, 255)"/><stop offset="0.417" stop-color="rgb(0, 250, 255)"/><stop offset="0.500" stop-color="rgb(130, 255, 130)"/><stop offset="0.583" stop-color="rgb(255, 255, 0)"/><stop offset="0.667" stop-color="rgb(255, 200, 0)"/><stop offset="0.750" stop-color="rgb(255, 128, 0)"/><stop offset="0.833" stop-color="rgb(255, 0, 0)"/><stop offset="0.917" stop-color="rgb(255, 0, 128)"/><stop offset="1.000" stop-color="rgb(255, 0, 255)"/></linearGradient><linearGradient id="w36" gradientUnits="userSpaceOnUse" x1="584.8" y1="579.4" x2="611.4" y2="445.4"><stop offset="0.000" stop-color="rgb(0, 0, 90)"/><stop offset="0.083" stop-color="rgb(0, 0, 170)"/><stop offset="0.167" stop-color="rgb(0, 16, 228)"/><stop offset="0.250" stop-color="rgb(0, 64, 255)"/><stop offset="0.333" stop-color="rgb(0, 160, 255)"/><stop offset="0.417" stop-color="rgb(0, 250, 255)"/><stop offset="0.500" stop-color="rgb(130, 255, 130)"/><stop offset="0.583" stop-color="rgb(255, 255, 0)"/><stop offset="0.667" stop-color="rgb(255, 200, 0)"/><stop offset="0.750" stop-color="rgb(255, 128, 0)"/><stop offset="0.833" stop-color="rgb(255, 0, 0)"/><stop offset="0.917" stop-color="rgb(255, 0, 128)"/><stop offset="1.000" stop-color="rgb(255, 0, 255)"/></linearGradient><linearGradient id="w37" gradientUnits="userSpaceOnUse" x1="583.1" y1="580.8" x2="610.1" y2="446.2"><stop offset="0.000" stop-color="rgb(0, 0, 90)"/><stop offset="0.083" stop-color="rgb(0, 0, 170)"/><stop offset="0.167" stop-color="rgb(0, 16, 228)"/><stop offset="0.250" stop-color="rgb(0, 64, 255)"/><stop offset="0.333" stop-color="rgb(0, 160, 255)"/><stop offset="0.417" stop-color="rgb(0, 250, 255)"/><stop offset="0.500" stop-color="rgb(130, 255, 130)"/><stop offset="0.583" stop-color="rgb(255, 255, 0)"/><stop offset="0.667" stop-color="rgb(255, 200, 0)"/><stop offset="0.750" stop-color="rgb(255, 128, 0)"/><stop offset="0.833" stop-color="rgb(255, 0, 0)"/><stop offset="0.917" stop-color="rgb(255, 0, 128)"/><stop offset="1.000" stop-color="rgb(255, 0, 255)"/></linearGradient><linearGradient id="w38" gradientUnits="userSpaceOnUse" x1="581.4" y1="582.2" x2="608.7" y2="447.0"><stop offset="0.000" stop-color="rgb(0, 0, 90)"/><stop offset="0.083" stop-color="rgb(0, 0, 170)"/><stop offset="0.167" stop-color="rgb(0, 16, 228)"/><stop offset="0.250" stop-color="rgb(0, 64, 255)"/><stop offset="0.333" stop-color="rgb(0, 160, 255)"/><stop offset="0.417" stop-color="rgb(0, 250, 255)"/><stop offset="0.500" stop-color="rgb(130, 255, 130)"/><stop offset="0.583" stop-color="rgb(255, 255, 0)"/><stop offset="0.667" stop-color="rgb(255, 200, 0)"/><stop offset="0.750" stop-color="rgb(255, 128, 0)"/><stop offset="0.833" stop-color="rgb(255, 0, 0)"/><stop offset="0.917" stop-color="rgb(255, 0, 128)"/><stop offset="1.000" stop-color="rgb(255, 0, 255)"/></linearGradient><linearGradient id="w39" gradientUnits="userSpaceOnUse" x1="579.8" y1="583.6" x2="607.4" y2="447.8"><stop offset="0.000" stop-color="rgb(0, 0, 90)"/><stop offset="0.083" stop-color="rgb(0, 0, 170)"/><stop offset="0.167" stop-color="rgb(0, 16, 228)"/><stop offset="0.250" stop-color="rgb(0, 64, 255)"/><stop offset="0.333" stop-color="rgb(0, 160, 255)"/><stop offset="0.417" stop-color="rgb(0, 250, 255)"/><stop offset="0.500" stop-color="rgb(130, 255, 130)"/><stop offset="0.583" stop-color="rgb(255, 255, 0)"/><stop offset="0.667" stop-color="rgb(255, 200, 0)"/><stop offset="0.750" stop-color="rgb(255, 128, 0)"/><stop offset="0.833" stop-color="rgb(255, 0, 0)"/><stop offset="0.917" stop-color="rgb(255, 0, 128)"/><stop offset="1.000" stop-color="rgb(255, 0, 255)"/></linearGradient><linearGradient id="w40" gradientUnits="userSpaceOnUse" x1="578.0" y1="585.0" x2="606.0" y2="448.6"><stop offset="0.000" stop-color="rgb(0, 0, 90)"/><stop offset="0.083" stop-color="rgb(0, 0, 170)"/><stop offset="0.167" stop-color="rgb(0, 16, 228)"/><stop offset="0.250" stop-color="rgb(0, 64, 255)"/><stop offset="0.333" stop-color="rgb(0, 160, 255)"/><stop offset="0.417" stop-color="rgb(0, 250, 255)"/><stop offset="0.500" stop-color="rgb(130, 255, 130)"/><stop offset="0.583" stop-color="rgb(255, 255, 0)"/><stop offset="0.667" stop-color="rgb(255, 200, 0)"/><stop offset="0.750" stop-color="rgb(255, 128, 0)"/><stop offset="0.833" stop-color="rgb(255, 0, 0)"/><stop offset="0.917" stop-color="rgb(255, 0, 128)"/><stop offset="1.000" stop-color="rgb(255, 0, 255)"/></linearGradient><linearGradient id="w41" gradientUnits="userSpaceOnUse" x1="576.3" y1="586.4" x2="604.6" y2="449.5"><stop offset="0.000" stop-color="rgb(0, 0, 90)"/><stop offset="0.083" stop-color="rgb(0, 0, 170)"/><stop offset="0.167" stop-color="rgb(0, 16, 228)"/><stop offset="0.250" stop-color="rgb(0, 64, 255)"/><stop offset="0.333" stop-color="rgb(0, 160, 255)"/><stop offset="0.417" stop-color="rgb(0, 250, 255)"/><stop offset="0.500" stop-color="rgb(130, 255, 130)"/><stop offset="0.583" stop-color="rgb(255, 255, 0)"/><stop offset="0.667" stop-color="rgb(255, 200, 0)"/><stop offset="0.750" stop-color="rgb(255, 128, 0)"/><stop offset="0.833" stop-color="rgb(255, 0, 0)"/><stop offset="0.917" stop-color="rgb(255, 0, 128)"/><stop offset="1.000" stop-color="rgb(255, 0, 255)"/></linearGradient><linearGradient id="w42" gradientUnits="userSpaceOnUse" x1="574.6" y1="587.8" x2="603.2" y2="450.3"><stop offset="0.000" stop-color="rgb(0, 0, 90)"/><stop offset="0.083" stop-color="rgb(0, 0, 170)"/><stop offset="0.167" stop-color="rgb(0, 16, 228)"/><stop offset="0.250" stop-color="rgb(0, 64, 255)"/><stop offset="0.333" stop-color="rgb(0, 160, 255)"/><stop offset="0.417" stop-color="rgb(0, 250, 255)"/><stop offset="0.500" stop-color="rgb(130, 255, 130)"/><stop offset="0.583" stop-color="rgb(255, 255, 0)"/><stop offset="0.667" stop-color="rgb(255, 200, 0)"/><stop offset="0.750" stop-color="rgb(255, 128, 0)"/><stop offset="0.833" stop-color="rgb(255, 0, 0)"/><stop offset="0.917" stop-color="rgb(255, 0, 128)"/><stop offset="1.000" stop-color="rgb(255, 0, 255)"/></linearGradient><linearGradient id="w43" gradientUnits="userSpaceOnUse" x1="572.8" y1="589.3" x2="601.8" y2="451.2"><stop offset="0.000" stop-color="rgb(0, 0, 90)"/><stop offset="0.083" stop-color="rgb(0, 0, 170)"/><stop offset="0.167" stop-color="rgb(0, 16, 228)"/><stop offset="0.250" stop-color="rgb(0, 64, 255)"/><stop offset="0.333" stop-color="rgb(0, 160, 255)"/><stop offset="0.417" stop-color="rgb(0, 250, 255)"/><stop offset="0.500" stop-color="rgb(130, 255, 130)"/><stop offset="0.583" stop-color="rgb(255, 255, 0)"/><stop offset="0.667" stop-color="rgb(255, 200, 0)"/><stop offset="0.750" stop-color="rgb(255, 128, 0)"/><stop offset="0.833" stop-color="rgb(255, 0, 0)"/><stop offset="0.917" stop-color="rgb(255, 0, 128)"/><stop offset="1.000" stop-color="rgb(255, 0, 255)"/></linearGradient><linearGradient id="w44" gradientUnits="userSpaceOnUse" x1="571.0" y1="590.8" x2="600.4" y2="452.1"><stop offset="0.000" stop-color="rgb(0, 0, 90)"/><stop offset="0.083" stop-color="rgb(0, 0, 170)"/><stop offset="0.167" stop-color="rgb(0, 16, 228)"/><stop offset="0.250" stop-color="rgb(0, 64, 255)"/><stop offset="0.333" stop-color="rgb(0, 160, 255)"/><stop offset="0.417" stop-color="rgb(0, 250, 255)"/><stop offset="0.500" stop-color="rgb(130, 255, 130)"/><stop offset="0.583" stop-color="rgb(255, 255, 0)"/><stop offset="0.667" stop-color="rgb(255, 200, 0)"/><stop offset="0.750" stop-color="rgb(255, 128, 0)"/><stop offset="0.833" stop-color="rgb(255, 0, 0)"/><stop offset="0.917" stop-color="rgb(255, 0, 128)"/><stop offset="1.000" stop-color="rgb(255, 0, 255)"/></linearGradient><linearGradient id="w45" gradientUnits="userSpaceOnUse" x1="569.2" y1="592.3" x2="598.9" y2="452.9"><stop offset="0.000" stop-color="rgb(0, 0, 90)"/><stop offset="0.083" stop-color="rgb(0, 0, 170)"/><stop offset="0.167" stop-color="rgb(0, 16, 228)"/><stop offset="0.250" stop-color="rgb(0, 64, 255)"/><stop offset="0.333" stop-color="rgb(0, 160, 255)"/><stop offset="0.417" stop-color="rgb(0, 250, 255)"/><stop offset="0.500" stop-color="rgb(130, 255, 130)"/><stop offset="0.583" stop-color="rgb(255, 255, 0)"/><stop offset="0.667" stop-color="rgb(255, 200, 0)"/><stop offset="0.750" stop-color="rgb(255, 128, 0)"/><stop offset="0.833" stop-color="rgb(255, 0, 0)"/><stop offset="0.917" stop-color="rgb(255, 0, 128)"/><stop offset="1.000" stop-color="rgb(255, 0, 255)"/></linearGradient><linearGradient id="w46" gradientUnits="userSpaceOnUse" x1="567.4" y1="593.8" x2="597.5" y2="453.9"><stop offset="0.000" stop-color="rgb(0, 0, 90)"/><stop offset="0.083" stop-color="rgb(0, 0, 170)"/><stop offset="0.167" stop-color="rgb(0, 16, 228)"/><stop offset="0.250" stop-color="rgb(0, 64, 255)"/><stop offset="0.333" stop-color="rgb(0, 160, 255)"/><stop offset="0.417" stop-color="rgb(0, 250, 255)"/><stop offset="0.500" stop-color="rgb(130, 255, 130)"/><stop offset="0.583" stop-color="rgb(255, 255, 0)"/><stop offset="0.667" stop-color="rgb(255, 200, 0)"/><stop offset="0.750" stop-color="rgb(255, 128, 0)"/><stop offset="0.833" stop-color="rgb(255, 0, 0)"/><stop offset="0.917" stop-color="rgb(255, 0, 128)"/><stop offset="1.000" stop-color="rgb(255, 0, 255)"/></linearGradient><linearGradient id="w47" gradientUnits="userSpaceOnUse" x1="565.5" y1="595.3" x2="596.0" y2="454.8"><stop offset="0.000" stop-color="rgb(0, 0, 90)"/><stop offset="0.083" stop-color="rgb(0, 0, 170)"/><stop offset="0.167" stop-color="rgb(0, 16, 228)"/><stop offset="0.250" stop-color="rgb(0, 64, 255)"/><stop offset="0.333" stop-color="rgb(0, 160, 255)"/><stop offset="0.417" stop-color="rgb(0, 250, 255)"/><stop offset="0.500" stop-color="rgb(130, 255, 130)"/><stop offset="0.583" stop-color="rgb(255, 255, 0)"/><stop offset="0.667" stop-color="rgb(255, 200, 0)"/><stop offset="0.750" stop-color="rgb(255, 128, 0)"/><stop offset="0.833" stop-color="rgb(255, 0, 0)"/><stop offset="0.917" stop-color="rgb(255, 0, 128)"/><stop offset="1.000" stop-color="rgb(255, 0, 255)"/></linearGradient><linearGradient id="w48" gradientUnits="userSpaceOnUse" x1="563.7" y1="596.9" x2="594.5" y2="455.7"><stop offset="0.000" stop-color="rgb(0, 0, 90)"/><stop offset="0.083" stop-color="rgb(0, 0, 170)"/><stop offset="0.167" stop-color="rgb(0, 16, 228)"/><stop offset="0.250" stop-color="rgb(0, 64, 255)"/><stop offset="0.333" stop-color="rgb(0, 160, 255)"/><stop offset="0.417" stop-color="rgb(0, 250, 255)"/><stop offset="0.500" stop-color="rgb(130, 255, 130)"/><stop offset="0.583" stop-color="rgb(255, 255, 0)"/><stop offset="0.667" stop-color="rgb(255, 200, 0)"/><stop offset="0.750" stop-color="rgb(255, 128, 0)"/><stop offset="0.833" stop-color="rgb(255, 0, 0)"/><stop offset="0.917" stop-color="rgb(255, 0, 128)"/><stop offset="1.000" stop-color="rgb(255, 0, 255)"/></linearGradient><linearGradient id="w49" gradientUnits="userSpaceOnUse" x1="561.8" y1="598.4" x2="593.0" y2="456.7"><stop offset="0.000" stop-color="rgb(0, 0, 90)"/><stop offset="0.083" stop-color="rgb(0, 0, 170)"/><stop offset="0.167" stop-color="rgb(0, 16, 228)"/><stop offset="0.250" stop-color="rgb(0, 64, 255)"/><stop offset="0.333" stop-color="rgb(0, 160, 255)"/><stop offset="0.417" stop-color="rgb(0, 250, 255)"/><stop offset="0.500" stop-color="rgb(130, 255, 130)"/><stop offset="0.583" stop-color="rgb(255, 255, 0)"/><stop offset="0.667" stop-color="rgb(255, 200, 0)"/><stop offset="0.750" stop-color="rgb(255, 128, 0)"/><stop offset="0.833" stop-color="rgb(255, 0, 0)"/><stop offset="0.917" stop-color="rgb(255, 0, 128)"/><stop offset="1.000" stop-color="rgb(255, 0, 255)"/></linearGradient><linearGradient id="w50" gradientUnits="userSpaceOnUse" x1="559.8" y1="600.0" x2="591.5" y2="457.6"><stop offset="0.000" stop-color="rgb(0, 0, 90)"/><stop offset="0.083" stop-color="rgb(0, 0, 170)"/><stop offset="0.167" stop-color="rgb(0, 16, 228)"/><stop offset="0.250" stop-color="rgb(0, 64, 255)"/><stop offset="0.333" stop-color="rgb(0, 160, 255)"/><stop offset="0.417" stop-color="rgb(0, 250, 255)"/><stop offset="0.500" stop-color="rgb(130, 255, 130)"/><stop offset="0.583" stop-color="rgb(255, 255, 0)"/><stop offset="0.667" stop-color="rgb(255, 200, 0)"/><stop offset="0.750" stop-color="rgb(255, 128, 0)"/><stop offset="0.833" stop-color="rgb(255, 0, 0)"/><stop offset="0.917" stop-color="rgb(255, 0, 128)"/><stop offset="1.000" stop-color="rgb(255, 0, 255)"/></linearGradient><linearGradient id="w51" gradientUnits="userSpaceOnUse" x1="557.9" y1="601.6" x2="590.0" y2="458.6"><stop offset="0.000" stop-color="rgb(0, 0, 90)"/><stop offset="0.083" stop-color="rgb(0, 0, 170)"/><stop offset="0.167" stop-color="rgb(0, 16, 228)"/><stop offset="0.250" stop-color="rgb(0, 64, 255)"/><stop offset="0.333" stop-color="rgb(0, 160, 255)"/><stop offset="0.417" stop-color="rgb(0, 250, 255)"/><stop offset="0.500" stop-color="rgb(130, 255, 130)"/><stop offset="0.583" stop-color="rgb(255, 255, 0)"/><stop offset="0.667" stop-color="rgb(255, 200, 0)"/><stop offset="0.750" stop-color="rgb(255, 128, 0)"/><stop offset="0.833" stop-color="rgb(255, 0, 0)"/><stop offset="0.917" stop-color="rgb(255, 0, 128)"/><stop offset="1.000" stop-color="rgb(255, 0, 255)"/></linearGradient><linearGradient id="w52" gradientUnits="userSpaceOnUse" x1="555.9" y1="603.3" x2="588.4" y2="459.6"><stop offset="0.000" stop-color="rgb(0, 0, 90)"/><stop offset="0.083" stop-color="rgb(0, 0, 170)"/><stop offset="0.167" stop-color="rgb(0, 16, 228)"/><stop offset="0.250" stop-color="rgb(0, 64, 255)"/><stop offset="0.333" stop-color="rgb(0, 160, 255)"/><stop offset="0.417" stop-color="rgb(0, 250, 255)"/><stop offset="0.500" stop-color="rgb(130, 255, 130)"/><stop offset="0.583" stop-color="rgb(255, 255, 0)"/><stop offset="0.667" stop-color="rgb(255, 200, 0)"/><stop offset="0.750" stop-color="rgb(255, 128, 0)"/><stop offset="0.833" stop-color="rgb(255, 0, 0)"/><stop offset="0.917" stop-color="rgb(255, 0, 128)"/><stop offset="1.000" stop-color="rgb(255, 0, 255)"/></linearGradient><linearGradient id="w53" gradientUnits="userSpaceOnUse" x1="553.9" y1="604.9" x2="586.9" y2="460.7"><stop offset="0.000" stop-color="rgb(0, 0, 90)"/><stop offset="0.083" stop-color="rgb(0, 0, 170)"/><stop offset="0.167" stop-color="rgb(0, 16, 228)"/><stop offset="0.250" stop-color="rgb(0, 64, 255)"/><stop offset="0.333" stop-color="rgb(0, 160, 255)"/><stop offset="0.417" stop-color="rgb(0, 250, 255)"/><stop offset="0.500" stop-color="rgb(130, 255, 130)"/><stop offset="0.583" stop-color="rgb(255, 255, 0)"/><stop offset="0.667" stop-color="rgb(255, 200, 0)"/><stop offset="0.750" stop-color="rgb(255, 128, 0)"/><stop offset="0.833" stop-color="rgb(255, 0, 0)"/><stop offset="0.917" stop-color="rgb(255, 0, 128)"/><stop offset="1.000" stop-color="rgb(255, 0, 255)"/></linearGradient><linearGradient id="w54" gradientUnits="userSpaceOnUse" x1="551.9" y1="606.6" x2="585.3" y2="461.7"><stop offset="0.000" stop-color="rgb(0, 0, 90)"/><stop offset="0.083" stop-color="rgb(0, 0, 170)"/><stop offset="0.167" stop-color="rgb(0, 16, 228)"/><stop offset="0.250" stop-color="rgb(0, 64, 255)"/><stop offset="0.333" stop-color="rgb(0, 160, 255)"/><stop offset="0.417" stop-color="rgb(0, 250, 255)"/><stop offset="0.500" stop-color="rgb(130, 255, 130)"/><stop offset="0.583" stop-color="rgb(255, 255, 0)"/><stop offset="0.667" stop-color="rgb(255, 200, 0)"/><stop offset="0.750" stop-color="rgb(255, 128, 0)"/><stop offset="0.833" stop-color="rgb(255, 0, 0)"/><stop offset="0.917" stop-color="rgb(255, 0, 128)"/><stop offset="1.000" stop-color="rgb(255, 0, 255)"/></linearGradient><linearGradient id="w55" gradientUnits="userSpaceOnUse" x1="549.9" y1="608.3" x2="583.7" y2="462.8"><stop offset="0.000" stop-color="rgb(0, 0, 90)"/><stop offset="0.083" stop-color="rgb(0, 0, 170)"/><stop offset="0.167" stop-color="rgb(0, 16, 228)"/><stop offset="0.250" stop-color="rgb(0, 64, 255)"/><stop offset="0.333" stop-color="rgb(0, 160, 255)"/><stop offset="0.417" stop-color="rgb(0, 250, 255)"/><stop offset="0.500" stop-color="rgb(130, 255, 130)"/><stop offset="0.583" stop-color="rgb(255, 255, 0)"/><stop offset="0.667" stop-color="rgb(255, 200, 0)"/><stop offset="0.750" stop-color="rgb(255, 128, 0)"/><stop offset="0.833" stop-color="rgb(255, 0, 0)"/><stop offset="0.917" stop-color="rgb(255, 0, 128)"/><stop offset="1.000" stop-color="rgb(255, 0, 255)"/></linearGradient><linearGradient id="w56" gradientUnits="userSpaceOnUse" x1="547.8" y1="610.0" x2="582.1" y2="463.8"><stop offset="0.000" stop-color="rgb(0, 0, 90)"/><stop offset="0.083" stop-color="rgb(0, 0, 170)"/><stop offset="0.167" stop-color="rgb(0, 16, 228)"/><stop offset="0.250" stop-color="rgb(0, 64, 255)"/><stop offset="0.333" stop-color="rgb(0, 160, 255)"/><stop offset="0.417" stop-color="rgb(0, 250, 255)"/><stop offset="0.500" stop-color="rgb(130, 255, 130)"/><stop offset="0.583" stop-color="rgb(255, 255, 0)"/><stop offset="0.667" stop-color="rgb(255, 200, 0)"/><stop offset="0.750" stop-color="rgb(255, 128, 0)"/><stop offset="0.833" stop-color="rgb(255, 0, 0)"/><stop offset="0.917" stop-color="rgb(255, 0, 128)"/><stop offset="1.000" stop-color="rgb(255, 0, 255)"/></linearGradient><linearGradient id="w57" gradientUnits="userSpaceOnUse" x1="545.7" y1="611.7" x2="580.4" y2="464.9"><stop offset="0.000" stop-color="rgb(0, 0, 90)"/><stop offset="0.083" stop-color="rgb(0, 0, 170)"/><stop offset="0.167" stop-color="rgb(0, 16, 228)"/><stop offset="0.250" stop-color="rgb(0, 64, 255)"/><stop offset="0.333" stop-color="rgb(0, 160, 255)"/><stop offset="0.417" stop-color="rgb(0, 250, 255)"/><stop offset="0.500" stop-color="rgb(130, 255, 130)"/><stop offset="0.583" stop-color="rgb(255, 255, 0)"/><stop offset="0.667" stop-color="rgb(255, 200, 0)"/><stop offset="0.750" stop-color="rgb(255, 128, 0)"/><stop offset="0.833" stop-color="rgb(255, 0, 0)"/><stop offset="0.917" stop-color="rgb(255, 0, 128)"/><stop offset="1.000" stop-color="rgb(255, 0, 255)"/></linearGradient><linearGradient id="w58" gradientUnits="userSpaceOnUse" x1="543.6" y1="613.5" x2="578.8" y2="466.1"><stop offset="0.000" stop-color="rgb(0, 0, 90)"/><stop offset="0.083" stop-color="rgb(0, 0, 170)"/><stop offset="0.167" stop-color="rgb(0, 16, 228)"/><stop offset="0.250" stop-color="rgb(0, 64, 255)"/><stop offset="0.333" stop-color="rgb(0, 160, 255)"/><stop offset="0.417" stop-color="rgb(0, 250, 255)"/><stop offset="0.500" stop-color="rgb(130, 255, 130)"/><stop offset="0.583" stop-color="rgb(255, 255, 0)"/><stop offset="0.667" stop-color="rgb(255, 200, 0)"/><stop offset="0.750" stop-color="rgb(255, 128, 0)"/><stop offset="0.833" stop-color="rgb(255, 0, 0)"/><stop offset="0.917" stop-color="rgb(255, 0, 128)"/><stop offset="1.000" stop-color="rgb(255, 0, 255)"/></linearGradient><linearGradient id="w59" gradientUnits="userSpaceOnUse" x1="541.5" y1="615.2" x2="577.1" y2="467.2"><stop offset="0.000" stop-color="rgb(0, 0, 90)"/><stop offset="0.083" stop-color="rgb(0, 0, 170)"/><stop offset="0.167" stop-color="rgb(0, 16, 228)"/><stop offset="0.250" stop-color="rgb(0, 64, 255)"/><stop offset="0.333" stop-color="rgb(0, 160, 255)"/><stop offset="0.417" stop-color="rgb(0, 250, 255)"/><stop offset="0.500" stop-color="rgb(130, 255, 130)"/><stop offset="0.583" stop-color="rgb(255, 255, 0)"/><stop offset="0.667" stop-color="rgb(255, 200, 0)"/><stop offset="0.750" stop-color="rgb(255, 128, 0)"/><stop offset="0.833" stop-color="rgb(255, 0, 0)"/><stop offset="0.917" stop-color="rgb(255, 0, 128)"/><stop offset="1.000" stop-color="rgb(255, 0, 255)"/></linearGradient><linearGradient id="w60" gradientUnits="userSpaceOnUse" x1="539.3" y1="617.0" x2="575.4" y2="468.4"><stop offset="0.000" stop-color="rgb(0, 0, 90)"/><stop offset="0.083" stop-color="rgb(0, 0, 170)"/><stop offset="0.167" stop-color="rgb(0, 16, 228)"/><stop offset="0.250" stop-color="rgb(0, 64, 255)"/><stop offset="0.333" stop-color="rgb(0, 160, 255)"/><stop offset="0.417" stop-color="rgb(0, 250, 255)"/><stop offset="0.500" stop-color="rgb(130, 255, 130)"/><stop offset="0.583" stop-color="rgb(255, 255, 0)"/><stop offset="0.667" stop-color="rgb(255, 200, 0)"/><stop offset="0.750" stop-color="rgb(255, 128, 0)"/><stop offset="0.833" stop-color="rgb(255, 0, 0)"/><stop offset="0.917" stop-color="rgb(255, 0, 128)"/><stop offset="1.000" stop-color="rgb(255, 0, 255)"/></linearGradient><linearGradient id="w61" gradientUnits="userSpaceOnUse" x1="537.1" y1="618.8" x2="573.7" y2="469.6"><stop offset="0.000" stop-color="rgb(0, 0, 90)"/><stop offset="0.083" stop-color="rgb(0, 0, 170)"/><stop offset="0.167" stop-color="rgb(0, 16, 228)"/><stop offset="0.250" stop-color="rgb(0, 64, 255)"/><stop offset="0.333" stop-color="rgb(0, 160, 255)"/><stop offset="0.417" stop-color="rgb(0, 250, 255)"/><stop offset="0.500" stop-color="rgb(130, 255, 130)"/><stop offset="0.583" stop-color="rgb(255, 255, 0)"/><stop offset="0.667" stop-color="rgb(255, 200, 0)"/><stop offset="0.750" stop-color="rgb(255, 128, 0)"/><stop offset="0.833" stop-color="rgb(255, 0, 0)"/><stop offset="0.917" stop-color="rgb(255, 0, 128)"/><stop offset="1.000" stop-color="rgb(255, 0, 255)"/></linearGradient><linearGradient id="w62" gradientUnits="userSpaceOnUse" x1="534.9" y1="620.7" x2="572.0" y2="470.8"><stop offset="0.000" stop-color="rgb(0, 0, 90)"/><stop offset="0.083" stop-color="rgb(0, 0, 170)"/><stop offset="0.167" stop-color="rgb(0, 16, 228)"/><stop offset="0.250" stop-color="rgb(0, 64, 255)"/><stop offset="0.333" stop-color="rgb(0, 160, 255)"/><stop offset="0.417" stop-color="rgb(0, 250, 255)"/><stop offset="0.500" stop-color="rgb(130, 255, 130)"/><stop offset="0.583" stop-color="rgb(255, 255, 0)"/><stop offset="0.667" stop-color="rgb(255, 200, 0)"/><stop offset="0.750" stop-color="rgb(255, 128, 0)"/><stop offset="0.833" stop-color="rgb(255, 0, 0)"/><stop offset="0.917" stop-color="rgb(255, 0, 128)"/><stop offset="1.000" stop-color="rgb(255, 0, 255)"/></linearGradient><linearGradient id="w63" gradientUnits="userSpaceOnUse" x1="532.6" y1="622.6" x2="570.2" y2="472.0"><stop offset="0.000" stop-color="rgb(0, 0, 90)"/><stop offset="0.083" stop-color="rgb(0, 0, 170)"/><stop offset="0.167" stop-color="rgb(0, 16, 228)"/><stop offset="0.250" stop-color="rgb(0, 64, 255)"/><stop offset="0.333" stop-color="rgb(0, 160, 255)"/><stop offset="0.417" stop-color="rgb(0, 250, 255)"/><stop offset="0.500" stop-color="rgb(130, 255, 130)"/><stop offset="0.583" stop-color="rgb(255, 255, 0)"/><stop offset="0.667" stop-color="rgb(255, 200, 0)"/><stop offset="0.750" stop-color="rgb(255, 128, 0)"/><stop offset="0.833" stop-color="rgb(255, 0, 0)"/><stop offset="0.917" stop-color="rgb(255, 0, 128)"/><stop offset="1.000" stop-color="rgb(255, 0, 255)"/></linearGradient><linearGradient id="wwall" gradientUnits="userSpaceOnUse" x1="487.7" y1="551.0" x2="444.3" y2="440.6"><stop offset="0.000" stop-color="rgb(0, 0, 90)"/><stop offset="0.083" stop-color="rgb(0, 0, 170)"/><stop offset="0.167" stop-color="rgb(0, 16, 228)"/><stop offset="0.250" stop-color="rgb(0, 64, 255)"/><stop offset="0.333" stop-color="rgb(0, 160, 255)"/><stop offset="0.417" stop-color="rgb(0, 250, 255)"/><stop offset="0.500" stop-color="rgb(130, 255, 130)"/><stop offset="0.583" stop-color="rgb(255, 255, 0)"/><stop offset="0.667" stop-color="rgb(255, 200, 0)"/><stop offset="0.750" stop-color="rgb(255, 128, 0)"/><stop offset="0.833" stop-color="rgb(255, 0, 0)"/><stop offset="0.917" stop-color="rgb(255, 0, 128)"/><stop offset="1.000" stop-color="rgb(255, 0, 255)"/></linearGradient><clipPath id="cpWF"><rect x="133" y="401" width="889" height="308"/></clipPath><linearGradient id="gCS" gradientUnits="userSpaceOnUse" x1="387.3" y1="447.5" x2="406.7" y2="594.6"><stop offset="0.000" stop-color="rgb(255, 0, 255)"/><stop offset="0.083" stop-color="rgb(255, 0, 128)"/><stop offset="0.167" stop-color="rgb(255, 0, 0)"/><stop offset="0.250" stop-color="rgb(255, 128, 0)"/><stop offset="0.333" stop-color="rgb(255, 200, 0)"/><stop offset="0.417" stop-color="rgb(255, 255, 0)"/><stop offset="0.500" stop-color="rgb(130, 255, 130)"/><stop offset="0.583" stop-color="rgb(0, 250, 255)"/><stop offset="0.667" stop-color="rgb(0, 160, 255)"/><stop offset="0.750" stop-color="rgb(0, 64, 255)"/><stop offset="0.833" stop-color="rgb(0, 16, 228)"/><stop offset="0.917" stop-color="rgb(0, 0, 170)"/><stop offset="1.000" stop-color="rgb(0, 0, 90)"/></linearGradient><linearGradient id="gBtn" x1="0" y1="0" x2="0" y2="1"><stop offset="0" stop-color="#f4f4f4"/><stop offset="0.48" stop-color="#eaeaea"/><stop offset="0.52" stop-color="#dedede"/><stop offset="1" stop-color="#cdcdcd"/></linearGradient><linearGradient id="gBlue" x1="0" y1="0" x2="0" y2="1"><stop offset="0" stop-color="#e3f3fc"/><stop offset="0.48" stop-color="#c2e3f6"/><stop offset="0.52" stop-color="#a0d4f0"/><stop offset="1" stop-color="#5eaedc"/></linearGradient><linearGradient id="gCyan" x1="0" y1="0" x2="0" y2="1"><stop offset="0" stop-color="#eaf8fc"/><stop offset="0.5" stop-color="#d8f0f8"/><stop offset="0.52" stop-color="#c4e6f2"/><stop offset="1" stop-color="#b0dcec"/></linearGradient><linearGradient id="gTab" x1="0" y1="0" x2="0" y2="1"><stop offset="0" stop-color="#f3f3f3"/><stop offset="0.5" stop-color="#ebebeb"/><stop offset="0.5" stop-color="#dddddd"/><stop offset="1" stop-color="#cfcfcf"/></linearGradient></defs><rect x="0" y="0" width="1146" height="786" fill="#000" /><rect x="1138" y="0" width="8" height="786" fill="#131a21" /><rect x="1139" y="0" width="1" height="786" fill="#3a4048" /><rect x="8" y="8" width="1130" height="18" fill="#0f2036" /><rect x="8" y="8" width="1130" height="3" fill="#0c1a2c" /><rect x="8" y="26" width="1130" height="1" fill="#8c99a6" /><rect x="8" y="27" width="1130" height="1" fill="#202a36" /><rect x="8" y="10" width="16" height="15" fill="#d8d8d8" /><polygon points="9,25 16,13 23,25" fill="#000"/><text x="16" y="24.5" font-size="5" font-weight="700" fill="#fff" text-anchor="middle" >XTZ</text><text x="30" y="22" font-size="12" font-weight="400" fill="#ffffff" text-anchor="start" stroke="#ffffff" stroke-width="0.35">Untitled* - XTZ Room Analyzer Pro</text><path d="M1041.5,8 v11 q0,5 5,5 h84 q5,0 5,-5 v-11" fill="#0f2036" stroke="#8594a6" stroke-width="1"/><rect x="1067" y="8" width="1" height="16" fill="#8594a6" /><rect x="1092" y="8" width="1" height="16" fill="#8594a6" /><rect x="1050" y="16" width="11" height="3" fill="#f0f0f0" /><rect x="1074.5" y="13.5" width="7" height="7" fill="none" stroke="#eee" stroke-width="2"/><path d="M1076.5,11.5 h7 v7" fill="none" stroke="#eee" stroke-width="1.5"/><path d="M1109,12 l8,7.5 M1117,12 l-8,7.5" stroke="#f4f4f4" stroke-width="2.6"/><rect x="8" y="28" width="1130" height="18" fill="url(#gMenu)" /><rect x="8" y="46" width="1130" height="1" fill="#c3c5cf" /><rect x="8" y="47" width="1130" height="1" fill="#e6e8f0" /><rect x="8" y="48" width="1130" height="1" fill="#8e8e8e" /><text x="15" y="42" font-size="11.5" font-weight="400" fill="#6d6f78" text-anchor="start" >File</text><text x="47.5" y="42" font-size="11.5" font-weight="400" fill="#6d6f78" text-anchor="start" >View</text><text x="86" y="42" font-size="11.5" font-weight="400" fill="#6d6f78" text-anchor="start" >Setup</text><text x="130" y="42" font-size="11.5" font-weight="400" fill="#6d6f78" text-anchor="start" >Help</text><rect x="8" y="49" width="1130" height="26" fill="#f0f0f0" /><rect x="8" y="49" width="1130" height="1" fill="#ffffff" /><rect x="8" y="74" width="1130" height="1" fill="#6c6c6c" /><rect x="8" y="75" width="1130" height="1" fill="#b4b4b4" /><rect x="8" y="76" width="1130" height="1" fill="#ffffff" /><rect x="10" y="49" width="180" height="1" fill="#ffffff" /><rect x="10" y="49" width="1" height="23" fill="#ffffff" /><rect x="10" y="71" width="180" height="1" fill="#c5c5c5" /><rect x="189" y="49" width="1" height="23" fill="#c5c5c5" /><rect x="12" y="50" width="1" height="20" fill="#a0a0a0" /><rect x="193" y="49" width="159" height="1" fill="#ffffff" /><rect x="193" y="49" width="1" height="23" fill="#ffffff" /><rect x="193" y="71" width="159" height="1" fill="#c5c5c5" /><rect x="351" y="49" width="1" height="23" fill="#c5c5c5" /><rect x="195" y="50" width="1" height="20" fill="#a0a0a0" /><path d="M21.5,53.5 h7 l3,3 v9.5 h-10 z" fill="#fff" stroke="#000" stroke-width="1.2"/><path d="M28.5,53.5 v3 h3" fill="none" stroke="#000" stroke-width="1"/><path d="M42.5,56.5 h4 l1,1 h5 v3 h-10 z" fill="#ffff99" stroke="#000" stroke-width="1"/><path d="M42.5,66 l3,-6 h11.5 l-3,6 z" fill="#8a8a2a" stroke="#000" stroke-width="1"/><path d="M50,54.5 q3,-2.5 6,0" fill="none" stroke="#000" stroke-width="1"/><path d="M56.5,53.5 v2.5 h-2.5" fill="none" stroke="#000" stroke-width="1"/><rect x="65.5" y="53.5" width="13" height="13" fill="#8a8a2a" stroke="#000" stroke-width="1"/><rect x="67.5" y="54" width="9" height="5" fill="#e8e8e8" /><rect x="67" y="61" width="11" height="5" fill="#000" /><rect x="73" y="62" width="2" height="3" fill="#fff" /><rect x="86" y="52" width="1" height="17" fill="#a0a0a0" /><rect x="87" y="52" width="1" height="17" fill="#fff" /><polygon points="97.5,53.5 106.5,53.5 105,58.5 96,58.5" fill="#fff" stroke="#000" stroke-width="1.1"/><rect x="99" y="55" width="5" height="1" fill="#000" /><rect x="98" y="57" width="5" height="1" fill="#000" /><path d="M94.5,59.5 h10.5 v7 h-10 q-1.2,0 -1.2,-1.2 v-4.6 q0,-1.2 0.7,-1.2 z" fill="#fff" stroke="#000" stroke-width="1.2"/><rect x="94" y="61" width="11" height="1" fill="#000" /><rect x="94" y="64" width="11" height="1.2" fill="#000" /><rect x="97" y="62" width="6" height="1.6" fill="#e6f0b0" /><rect x="106" y="59" width="1" height="1" fill="#000" /><rect x="107" y="60" width="1" height="1" fill="#000" /><rect x="106" y="61" width="1" height="1" fill="#000" /><rect x="107" y="62" width="1" height="1" fill="#000" /><rect x="106" y="63" width="1" height="1" fill="#000" /><rect x="105" y="65" width="1" height="1" fill="#000" /><rect x="106" y="64" width="1" height="1" fill="#000" /><rect x="115" y="52" width="1" height="17" fill="#a0a0a0" /><rect x="116" y="52" width="1" height="17" fill="#fff" /><path d="M124,55.5 h7 v-2.5 l5,4 l-5,4 v-2.5 h-7 z" fill="#a4a4a4"/><text x="130" y="67.5" font-size="7.5" font-weight="400" fill="#8e8e8e" text-anchor="middle" font-family="Liberation Mono" letter-spacing="0.2">ROM</text><path d="M147,55.5 h7 v-2.5 l5,4 l-5,4 v-2.5 h-7 z" fill="#a4a4a4"/><text x="153" y="67.5" font-size="7.5" font-weight="400" fill="#8e8e8e" text-anchor="middle" font-family="Liberation Mono" letter-spacing="0.2">RTA</text><path d="M170,55.5 h7 v-2.5 l5,4 l-5,4 v-2.5 h-7 z" fill="#a4a4a4"/><text x="176" y="67.5" font-size="7.5" font-weight="400" fill="#8e8e8e" text-anchor="middle" font-family="Liberation Mono" letter-spacing="0.2">BOTH</text><rect x="202" y="54" width="4" height="13" fill="#33dd33" /><rect x="203" y="55" width="3" height="3" fill="#22bb22" /><text x="210.5" y="65" font-size="14" font-weight="700" fill="#000" text-anchor="middle" font-family="Liberation Serif" letter-spacing="-0.8">fg</text><text x="226" y="64.5" font-size="11" font-weight="400" fill="#000" text-anchor="start" letter-spacing="-0.35">Level (dBFS)</text><rect x="290.5" y="51.5" width="55" height="21" fill="#f0f0f0" stroke="#b9b9b9" stroke-width="1"/><text x="294" y="65" font-size="11" font-weight="400" fill="#8d8d8d" text-anchor="start" letter-spacing="-0.2">-6.0</text><rect x="329.5" y="53.5" width="14" height="8" fill="#f0f0f0" stroke="#b5b5b5"/><rect x="329.5" y="63.5" width="14" height="8" fill="#f0f0f0" stroke="#b5b5b5"/><path d="M334,59 l2.5,-3 l2.5,3 z M334,66 l2.5,3 l2.5,-3 z" fill="#999"/><rect x="8" y="77" width="1130" height="682" fill="#f0f0f0" /><rect x="8" y="77" width="1" height="681" fill="#ffffff" /><rect x="118" y="76" width="1" height="682" fill="#a0a0a0" /><rect x="119" y="76" width="1" height="682" fill="#696969" /><rect x="8" y="757" width="112" height="1" fill="#696969" /><rect x="8" y="759" width="1130" height="1" fill="#8f8f8f" /><rect x="8" y="760" width="1130" height="18" fill="#f0eeee" /><rect x="8" y="760" width="1130" height="1" fill="#ffffff" /><rect x="788" y="761" width="1" height="16" fill="#d0d0d0" /><rect x="789" y="761" width="1" height="16" fill="#ffffff" /><rect x="887" y="761" width="1" height="16" fill="#d0d0d0" /><rect x="888" y="761" width="1" height="16" fill="#ffffff" /><rect x="986" y="761" width="1" height="16" fill="#d0d0d0" /><rect x="987" y="761" width="1" height="16" fill="#ffffff" /><text x="990" y="774" font-size="12" font-weight="400" fill="#1a1a1a" text-anchor="start" letter-spacing="-0.2">Device: XTZ Audio v2 Pro</text><rect x="0" y="778" width="1138" height="8" fill="url(#gTask)" /><rect x="0" y="778" width="8" height="8" fill="#000" /><rect x="170.5" y="780.5" width="150" height="8" rx="3" fill="#8c9196" stroke="#3a3d40"/><rect x="325.5" y="780.5" width="152" height="8" rx="3" fill="#8c9196" stroke="#3a3d40"/><rect x="482.5" y="780.5" width="150" height="8" rx="3" fill="#8c9196" stroke="#3a3d40"/><rect x="637.5" y="780.5" width="151" height="8" rx="3" fill="#8c9196" stroke="#3a3d40"/><rect x="793.5" y="780.5" width="152" height="8" rx="3" fill="#2d3035" stroke="#3a3d40"/><circle cx="38" cy="794" r="19.5" fill="#1f2a36" stroke="#9fb4c4" stroke-width="2"/><rect x="10" y="771" width="2" height="2" fill="#222" /><path d="M26,786 a14,14 0 0 1 12,-8 v8 z" fill="#e45a1e"/><path d="M38,778 a14,14 0 0 1 12,8 h-12 z" fill="#6cb62f"/><rect x="14" y="81" width="98" height="570" fill="#a0a0a0" /><rect x="15" y="82" width="96" height="568" fill="#ffffff" /><rect x="16" y="83" width="94" height="566" fill="#00233e" /><text x="19.5" y="106.5" font-size="19.5" font-weight="700" fill="#f2f28c" text-anchor="start" letter-spacing="-0.9">101</text><text x="19.5" y="130.5" font-size="20" font-weight="700" fill="#f2f28c" text-anchor="start" letter-spacing="-0.15">54.9</text><text x="19.5" y="154.5" font-size="20" font-weight="700" fill="#f2f28c" text-anchor="start" letter-spacing="-0.15">84.1</text><text x="19.5" y="178.5" font-size="20" font-weight="700" fill="#f2f28c" text-anchor="start" letter-spacing="-0.15">44.4</text><text x="19.5" y="202.5" font-size="20" font-weight="700" fill="#f2f28c" text-anchor="start" letter-spacing="-0.15">66.2</text><text x="53.5" y="106.5" font-size="10" font-weight="700" fill="#f2f28c" text-anchor="start" >LCpk hold</text><text x="59" y="130.5" font-size="10" font-weight="700" fill="#f2f28c" text-anchor="start" >LCpeak</text><text x="59" y="154.5" font-size="10" font-weight="700" fill="#f2f28c" text-anchor="start" >LCS hold</text><text x="59" y="178.5" font-size="10" font-weight="700" fill="#f2f28c" text-anchor="start" >LCS</text><text x="59" y="202.5" font-size="10" font-weight="700" fill="#f2f28c" text-anchor="start" >LCeq</text><rect x="23" y="215" width="37" height="428" fill="#ffffff" /><rect x="25" y="217" width="33" height="424" fill="#000000" /><rect x="25" y="541" width="33" height="100" fill="url(#gGreen)" /><rect x="25" y="538" width="33" height="3" fill="#e8e820" /><rect x="25" y="493" width="33" height="3" fill="#38d838" /><polygon points="18,476 18,486 23,481" fill="#3adf3a"/><polygon points="18,526 18,537 23,531.5" fill="#e8e820"/><text x="69.5" y="219.99999999999997" font-size="10" font-weight="400" fill="#eaf0f8" text-anchor="start" >120</text><text x="69.5" y="241.24999999999997" font-size="10" font-weight="400" fill="#eaf0f8" text-anchor="start" >115</text><text x="69.5" y="262.5" font-size="10" font-weight="400" fill="#eaf0f8" text-anchor="start" >110</text><text x="69.5" y="283.75" font-size="10" font-weight="400" fill="#eaf0f8" text-anchor="start" >105</text><text x="69.5" y="305.0" font-size="10" font-weight="400" fill="#eaf0f8" text-anchor="start" >100</text><text x="69.5" y="326.25" font-size="10" font-weight="400" fill="#eaf0f8" text-anchor="start" >95</text><text x="69.5" y="347.5" font-size="10" font-weight="400" fill="#eaf0f8" text-anchor="start" >90</text><text x="69.5" y="368.75" font-size="10" font-weight="400" fill="#eaf0f8" text-anchor="start" >85</text><text x="69.5" y="390.0" font-size="10" font-weight="400" fill="#eaf0f8" text-anchor="start" >80</text><text x="69.5" y="411.25" font-size="10" font-weight="400" fill="#eaf0f8" text-anchor="start" >75</text><text x="69.5" y="432.5" font-size="10" font-weight="400" fill="#eaf0f8" text-anchor="start" >70</text><text x="69.5" y="453.75" font-size="10" font-weight="400" fill="#eaf0f8" text-anchor="start" >65</text><text x="69.5" y="475.0" font-size="10" font-weight="400" fill="#eaf0f8" text-anchor="start" >60</text><text x="69.5" y="496.25" font-size="10" font-weight="400" fill="#eaf0f8" text-anchor="start" >55</text><text x="69.5" y="517.5" font-size="10" font-weight="400" fill="#eaf0f8" text-anchor="start" >50</text><text x="69.5" y="538.75" font-size="10" font-weight="400" fill="#eaf0f8" text-anchor="start" >45</text><text x="69.5" y="560.0" font-size="10" font-weight="400" fill="#eaf0f8" text-anchor="start" >40</text><text x="69.5" y="581.25" font-size="10" font-weight="400" fill="#eaf0f8" text-anchor="start" >35</text><text x="69.5" y="602.5" font-size="10" font-weight="400" fill="#eaf0f8" text-anchor="start" >30</text><text x="69.5" y="623.75" font-size="10" font-weight="400" fill="#eaf0f8" text-anchor="start" >25</text><text x="69.5" y="645.0" font-size="10" font-weight="400" fill="#eaf0f8" text-anchor="start" >20 dB</text><rect x="61" y="237.5" width="7" height="1" fill="#d09090" /><rect x="61" y="300.5" width="7" height="1" fill="#d09090" /><rect x="125" y="81" width="988" height="635" fill="#858590" /><rect x="126" y="82" width="986" height="633" fill="#ffffff" /><rect x="1023" y="85" width="85" height="626" fill="#f0f0f0" /><rect x="132" y="88" width="890" height="308" fill="#7c8894" /><rect x="133" y="89" width="889" height="307" fill="#002240" /><rect x="132" y="400" width="890" height="309" fill="#8890a0" /><rect x="133" y="401" width="889" height="308" fill="#000040" /><rect x="190" y="98" width="790" height="277" fill="#ffffff" /><rect x="192" y="100" width="786" height="273" fill="#000000" /><rect x="192" y="145" width="786" height="1" fill="#524e72" /><rect x="192" y="190" width="786" height="1" fill="#524e72" /><rect x="192" y="236" width="786" height="1" fill="#524e72" /><rect x="192" y="282" width="786" height="1" fill="#524e72" /><rect x="192" y="327" width="786" height="1" fill="#524e72" /><rect x="216" y="100" width="1" height="273" fill="#524e72" /><rect x="242" y="100" width="1" height="273" fill="#524e72" /><rect x="268" y="100" width="1" height="273" fill="#524e72" /><rect x="294" y="100" width="1" height="273" fill="#524e72" /><rect x="320" y="100" width="1" height="273" fill="#524e72" /><rect x="346" y="100" width="1" height="273" fill="#524e72" /><rect x="372" y="100" width="1" height="273" fill="#524e72" /><rect x="398" y="100" width="1" height="273" fill="#524e72" /><rect x="424" y="100" width="1" height="273" fill="#524e72" /><rect x="449" y="100" width="1" height="273" fill="#524e72" /><rect x="475" y="100" width="1" height="273" fill="#524e72" /><rect x="501" y="100" width="1" height="273" fill="#524e72" /><rect x="527" y="100" width="1" height="273" fill="#524e72" /><rect x="553" y="100" width="1" height="273" fill="#524e72" /><rect x="579" y="100" width="1" height="273" fill="#524e72" /><rect x="605" y="100" width="1" height="273" fill="#524e72" /><rect x="631" y="100" width="1" height="273" fill="#524e72" /><rect x="657" y="100" width="1" height="273" fill="#524e72" /><rect x="683" y="100" width="1" height="273" fill="#524e72" /><rect x="709" y="100" width="1" height="273" fill="#524e72" /><rect x="735" y="100" width="1" height="273" fill="#524e72" /><rect x="761" y="100" width="1" height="273" fill="#524e72" /><rect x="787" y="100" width="1" height="273" fill="#524e72" /><rect x="813" y="100" width="1" height="273" fill="#524e72" /><rect x="838" y="100" width="1" height="273" fill="#524e72" /><rect x="864" y="100" width="1" height="273" fill="#524e72" /><rect x="890" y="100" width="1" height="273" fill="#524e72" /><rect x="916" y="100" width="1" height="273" fill="#524e72" /><rect x="942" y="100" width="1" height="273" fill="#524e72" /><rect x="968" y="100" width="1" height="273" fill="#524e72" /><rect x="308" y="148" width="23" height="225" fill="#eb0000" /><text x="317.8" y="144.8" font-size="12" font-weight="700" fill="#eeee44" text-anchor="middle" letter-spacing="-0.1">0.41s</text><rect x="386" y="176" width="23" height="197" fill="#eb0000" /><text x="395.6" y="172.8" font-size="12" font-weight="700" fill="#eeee44" text-anchor="middle" letter-spacing="-0.1">0.36s</text><rect x="464" y="168" width="23" height="205" fill="#eb0000" /><text x="473.4" y="164.8" font-size="12" font-weight="700" fill="#eeee44" text-anchor="middle" letter-spacing="-0.1">0.37s</text><rect x="542" y="169" width="23" height="204" fill="#eb0000" /><text x="551.2" y="165.8" font-size="12" font-weight="700" fill="#eeee44" text-anchor="middle" letter-spacing="-0.1">0.37s</text><rect x="620" y="174" width="23" height="199" fill="#eb0000" /><text x="629.0" y="170.8" font-size="12" font-weight="700" fill="#eeee44" text-anchor="middle" letter-spacing="-0.1">0.36s</text><rect x="697" y="174" width="23" height="199" fill="#eb0000" /><text x="706.8" y="170.8" font-size="12" font-weight="700" fill="#eeee44" text-anchor="middle" letter-spacing="-0.1">0.36s</text><rect x="775" y="179" width="23" height="194" fill="#eb0000" /><text x="784.6" y="175.8" font-size="12" font-weight="700" fill="#eeee44" text-anchor="middle" letter-spacing="-0.1">0.35s</text><rect x="853" y="173" width="23" height="200" fill="#eb0000" /><text x="862.4" y="169.8" font-size="12" font-weight="700" fill="#eeee44" text-anchor="middle" letter-spacing="-0.1">0.37s</text><path d="M192.0,200.5 C193.9,199.3 199.2,196.5 203.3,193.3 C207.4,190.1 211.6,186.3 216.4,181.5 C221.2,176.7 227.5,168.9 232.1,164.5 C236.7,160.1 239.3,159.5 243.9,155.3 C248.5,151.2 254.2,142.8 259.6,139.6 C265.1,136.4 271.6,136.4 276.6,136.2 C281.6,136.0 285.3,137.2 289.7,138.3 C294.1,139.4 298.4,141.7 302.8,142.8 C307.2,143.9 311.1,144.4 315.9,144.9 C320.7,145.4 326.8,144.6 331.6,145.7 C336.4,146.8 340.3,148.3 344.7,151.4 C349.1,154.5 353.4,159.9 357.8,164.5 C362.2,169.1 366.5,175.0 370.9,178.9 C375.3,182.8 380.1,184.9 384.0,188.0 C387.9,191.1 390.5,192.6 394.4,197.2 C398.3,201.8 404.0,212.3 407.5,215.5 C411.0,218.7 412.8,215.4 415.4,216.3 C418.0,217.2 420.4,218.4 423.2,220.8 C426.0,223.2 430.0,229.0 432.4,230.5 C434.8,232.0 435.2,233.4 437.6,230.0 C440.0,226.6 442.7,216.4 446.8,210.3 C450.9,204.2 456.4,201.4 462.5,193.3 C468.6,185.2 478.7,167.4 483.4,161.9 C488.1,156.4 487.6,159.7 490.5,160.4 C493.4,161.1 497.0,162.6 500.9,166.2 C504.8,169.8 510.3,175.8 514.0,181.9 C517.7,188.0 520.6,195.9 523.2,202.8 C525.8,209.7 527.5,222.3 529.7,223.2 C531.9,224.1 533.9,214.5 536.3,208.1 C538.7,201.7 541.3,190.0 544.1,184.5 C546.9,179.0 550.0,175.5 553.3,175.3 C556.6,175.1 559.9,180.1 563.8,183.2 C567.7,186.3 572.1,191.1 576.9,193.7 C581.7,196.3 587.4,195.8 592.6,198.9 C597.8,202.0 603.5,206.6 608.3,212.0 C613.1,217.4 617.5,224.4 621.4,231.6 C625.3,238.8 629.0,248.4 631.8,255.2 C634.6,262.0 635.8,273.1 638.4,272.2 C641.0,271.3 644.2,257.5 647.5,249.9 C650.8,242.3 654.1,232.5 658.0,226.4 C661.9,220.3 667.2,215.9 671.1,213.3 C675.0,210.7 677.2,210.8 681.6,210.7 C686.0,210.6 692.5,214.8 697.3,212.8 C702.1,210.8 705.6,202.8 710.4,198.9 C715.2,195.1 721.8,190.6 726.1,189.7 C730.5,188.8 733.0,190.2 736.5,193.7 C740.0,197.2 743.9,202.6 747.0,210.7 C750.1,218.8 752.8,230.0 754.9,242.1 C757.0,254.2 757.9,283.5 759.6,283.5 C761.3,283.5 763.6,252.8 765.3,242.1 C767.0,231.4 767.7,225.5 769.7,219.2 C771.7,212.9 773.5,209.3 777.3,204.1 C781.1,198.9 788.7,189.9 792.5,187.9 C796.3,185.9 797.5,187.7 800.0,192.2 C802.5,196.7 805.3,206.4 807.6,214.9 C809.9,223.4 811.9,241.2 813.7,243.0 C815.5,244.8 816.7,229.7 818.4,225.7 C820.1,221.7 822.0,221.0 823.8,219.2 C825.6,217.4 826.5,220.7 829.2,214.9 C831.9,209.1 837.1,186.4 840.0,184.6 C842.9,182.8 844.8,192.9 846.5,204.1 C848.2,215.3 848.9,252.1 850.4,251.7 C851.9,251.3 853.0,211.1 855.2,201.9 C857.5,192.7 861.4,197.1 863.9,196.5 C866.4,195.9 869.0,198.2 870.0,198.6 L875.7,221.5 L881.5,212.9 L887.2,213.9 L892.0,194.8 L896.7,203.4 L900.5,219.6 L902.4,306.5 L904.3,250.2 L907.2,208.2 L909.1,192.0 L912.9,198.6 L915.8,229.2 L918.7,289.3 L920.6,229.2 L925.3,204.4 L928.2,182.4 L931.1,190.0 L933.9,232.0 L935.8,215.8 L940.6,194.8 L946.3,231.1 L949.2,233.9 L956.8,192.9 L961.6,209.1 L967.3,217.7 L969.2,255.9 L973.1,299.8 L974.6,269.2 L975.9,208.2" fill="none" stroke="#2f8cf4" stroke-opacity="0.85" stroke-width="2.1" stroke-linejoin="round" clip-path="url(#cpPlot)"/><text x="975" y="112.7" font-size="12" font-weight="700" fill="#eeee44" text-anchor="end" letter-spacing="-0.05">Distance: 15.06m</text><rect x="184" y="373" width="6" height="1" fill="#ffffff" /><text x="182.5" y="376.8" font-size="10.5" font-weight="400" fill="#e8eef6" text-anchor="end" >20</text><rect x="187" y="368" width="3" height="1" fill="#ffffff" /><rect x="187" y="364" width="3" height="1" fill="#ffffff" /><rect x="187" y="359" width="3" height="1" fill="#ffffff" /><rect x="187" y="355" width="3" height="1" fill="#ffffff" /><rect x="187" y="350" width="3" height="1" fill="#ffffff" /><rect x="187" y="346" width="3" height="1" fill="#ffffff" /><rect x="187" y="341" width="3" height="1" fill="#ffffff" /><rect x="187" y="336" width="3" height="1" fill="#ffffff" /><rect x="187" y="332" width="3" height="1" fill="#ffffff" /><rect x="184" y="327" width="6" height="1" fill="#ffffff" /><text x="182.5" y="330.8" font-size="10.5" font-weight="400" fill="#e8eef6" text-anchor="end" >30</text><rect x="187" y="323" width="3" height="1" fill="#ffffff" /><rect x="187" y="318" width="3" height="1" fill="#ffffff" /><rect x="187" y="314" width="3" height="1" fill="#ffffff" /><rect x="187" y="309" width="3" height="1" fill="#ffffff" /><rect x="187" y="305" width="3" height="1" fill="#ffffff" /><rect x="187" y="300" width="3" height="1" fill="#ffffff" /><rect x="187" y="295" width="3" height="1" fill="#ffffff" /><rect x="187" y="291" width="3" height="1" fill="#ffffff" /><rect x="187" y="286" width="3" height="1" fill="#ffffff" /><rect x="184" y="282" width="6" height="1" fill="#ffffff" /><text x="182.5" y="285.8" font-size="10.5" font-weight="400" fill="#e8eef6" text-anchor="end" >40</text><rect x="187" y="277" width="3" height="1" fill="#ffffff" /><rect x="187" y="273" width="3" height="1" fill="#ffffff" /><rect x="187" y="268" width="3" height="1" fill="#ffffff" /><rect x="187" y="263" width="3" height="1" fill="#ffffff" /><rect x="187" y="259" width="3" height="1" fill="#ffffff" /><rect x="187" y="254" width="3" height="1" fill="#ffffff" /><rect x="187" y="250" width="3" height="1" fill="#ffffff" /><rect x="187" y="245" width="3" height="1" fill="#ffffff" /><rect x="187" y="241" width="3" height="1" fill="#ffffff" /><rect x="184" y="236" width="6" height="1" fill="#ffffff" /><text x="182.5" y="239.8" font-size="10.5" font-weight="400" fill="#e8eef6" text-anchor="end" >50</text><rect x="187" y="231" width="3" height="1" fill="#ffffff" /><rect x="187" y="227" width="3" height="1" fill="#ffffff" /><rect x="187" y="222" width="3" height="1" fill="#ffffff" /><rect x="187" y="218" width="3" height="1" fill="#ffffff" /><rect x="187" y="213" width="3" height="1" fill="#ffffff" /><rect x="187" y="209" width="3" height="1" fill="#ffffff" /><rect x="187" y="204" width="3" height="1" fill="#ffffff" /><rect x="187" y="199" width="3" height="1" fill="#ffffff" /><rect x="187" y="195" width="3" height="1" fill="#ffffff" /><rect x="184" y="190" width="6" height="1" fill="#ffffff" /><text x="182.5" y="193.8" font-size="10.5" font-weight="400" fill="#e8eef6" text-anchor="end" >60</text><rect x="187" y="186" width="3" height="1" fill="#ffffff" /><rect x="187" y="181" width="3" height="1" fill="#ffffff" /><rect x="187" y="177" width="3" height="1" fill="#ffffff" /><rect x="187" y="172" width="3" height="1" fill="#ffffff" /><rect x="187" y="168" width="3" height="1" fill="#ffffff" /><rect x="187" y="163" width="3" height="1" fill="#ffffff" /><rect x="187" y="158" width="3" height="1" fill="#ffffff" /><rect x="187" y="154" width="3" height="1" fill="#ffffff" /><rect x="187" y="149" width="3" height="1" fill="#ffffff" /><rect x="184" y="145" width="6" height="1" fill="#ffffff" /><text x="182.5" y="148.8" font-size="10.5" font-weight="400" fill="#e8eef6" text-anchor="end" >70</text><rect x="187" y="140" width="3" height="1" fill="#ffffff" /><rect x="187" y="136" width="3" height="1" fill="#ffffff" /><rect x="187" y="131" width="3" height="1" fill="#ffffff" /><rect x="187" y="126" width="3" height="1" fill="#ffffff" /><rect x="187" y="122" width="3" height="1" fill="#ffffff" /><rect x="187" y="117" width="3" height="1" fill="#ffffff" /><rect x="187" y="113" width="3" height="1" fill="#ffffff" /><rect x="187" y="108" width="3" height="1" fill="#ffffff" /><rect x="187" y="104" width="3" height="1" fill="#ffffff" /><rect x="184" y="99" width="6" height="1" fill="#ffffff" /><text x="182.5" y="102.8" font-size="10.5" font-weight="400" fill="#e8eef6" text-anchor="end" >80</text><rect x="980" y="373" width="6" height="1" fill="#ffffff" /><text x="986" y="377" font-size="11" font-weight="400" fill="#e8eef6" text-anchor="start" >0</text><rect x="980" y="368" width="3" height="1" fill="#ffffff" /><rect x="980" y="362" width="3" height="1" fill="#ffffff" /><rect x="980" y="357" width="3" height="1" fill="#ffffff" /><rect x="980" y="351" width="3" height="1" fill="#ffffff" /><rect x="980" y="346" width="3" height="1" fill="#ffffff" /><rect x="980" y="340" width="3" height="1" fill="#ffffff" /><rect x="980" y="335" width="3" height="1" fill="#ffffff" /><rect x="980" y="329" width="3" height="1" fill="#ffffff" /><rect x="980" y="324" width="3" height="1" fill="#ffffff" /><rect x="980" y="318" width="6" height="1" fill="#ffffff" /><text x="986" y="322" font-size="11" font-weight="400" fill="#e8eef6" text-anchor="start" >0.1</text><rect x="980" y="313" width="3" height="1" fill="#ffffff" /><rect x="980" y="307" width="3" height="1" fill="#ffffff" /><rect x="980" y="302" width="3" height="1" fill="#ffffff" /><rect x="980" y="296" width="3" height="1" fill="#ffffff" /><rect x="980" y="291" width="3" height="1" fill="#ffffff" /><rect x="980" y="285" width="3" height="1" fill="#ffffff" /><rect x="980" y="280" width="3" height="1" fill="#ffffff" /><rect x="980" y="274" width="3" height="1" fill="#ffffff" /><rect x="980" y="269" width="3" height="1" fill="#ffffff" /><rect x="980" y="263" width="6" height="1" fill="#ffffff" /><text x="986" y="267" font-size="11" font-weight="400" fill="#e8eef6" text-anchor="start" >0.2</text><rect x="980" y="258" width="3" height="1" fill="#ffffff" /><rect x="980" y="252" width="3" height="1" fill="#ffffff" /><rect x="980" y="247" width="3" height="1" fill="#ffffff" /><rect x="980" y="241" width="3" height="1" fill="#ffffff" /><rect x="980" y="236" width="3" height="1" fill="#ffffff" /><rect x="980" y="231" width="3" height="1" fill="#ffffff" /><rect x="980" y="225" width="3" height="1" fill="#ffffff" /><rect x="980" y="220" width="3" height="1" fill="#ffffff" /><rect x="980" y="214" width="3" height="1" fill="#ffffff" /><rect x="980" y="209" width="6" height="1" fill="#ffffff" /><text x="986" y="213" font-size="11" font-weight="400" fill="#e8eef6" text-anchor="start" >0.3</text><rect x="980" y="203" width="3" height="1" fill="#ffffff" /><rect x="980" y="198" width="3" height="1" fill="#ffffff" /><rect x="980" y="192" width="3" height="1" fill="#ffffff" /><rect x="980" y="187" width="3" height="1" fill="#ffffff" /><rect x="980" y="181" width="3" height="1" fill="#ffffff" /><rect x="980" y="176" width="3" height="1" fill="#ffffff" /><rect x="980" y="170" width="3" height="1" fill="#ffffff" /><rect x="980" y="165" width="3" height="1" fill="#ffffff" /><rect x="980" y="159" width="3" height="1" fill="#ffffff" /><rect x="980" y="154" width="6" height="1" fill="#ffffff" /><text x="986" y="158" font-size="11" font-weight="400" fill="#e8eef6" text-anchor="start" >0.4</text><rect x="980" y="148" width="3" height="1" fill="#ffffff" /><rect x="980" y="143" width="3" height="1" fill="#ffffff" /><rect x="980" y="137" width="3" height="1" fill="#ffffff" /><rect x="980" y="132" width="3" height="1" fill="#ffffff" /><rect x="980" y="126" width="3" height="1" fill="#ffffff" /><rect x="980" y="121" width="3" height="1" fill="#ffffff" /><rect x="980" y="115" width="3" height="1" fill="#ffffff" /><rect x="980" y="110" width="3" height="1" fill="#ffffff" /><rect x="980" y="104" width="3" height="1" fill="#ffffff" /><rect x="980" y="99" width="6" height="1" fill="#ffffff" /><text x="986" y="103" font-size="11" font-weight="400" fill="#e8eef6" text-anchor="start" >0.5</text><rect x="190" y="375" width="1" height="2.5" fill="#ffffff" /><rect x="216" y="375" width="1" height="2.5" fill="#ffffff" /><rect x="242" y="375" width="1" height="5" fill="#ffffff" /><rect x="268" y="375" width="1" height="2.5" fill="#ffffff" /><rect x="294" y="375" width="1" height="2.5" fill="#ffffff" /><rect x="320" y="375" width="1" height="5" fill="#ffffff" /><rect x="346" y="375" width="1" height="2.5" fill="#ffffff" /><rect x="372" y="375" width="1" height="2.5" fill="#ffffff" /><rect x="398" y="375" width="1" height="5" fill="#ffffff" /><rect x="424" y="375" width="1" height="2.5" fill="#ffffff" /><rect x="449" y="375" width="1" height="2.5" fill="#ffffff" /><rect x="475" y="375" width="1" height="5" fill="#ffffff" /><rect x="501" y="375" width="1" height="2.5" fill="#ffffff" /><rect x="527" y="375" width="1" height="2.5" fill="#ffffff" /><rect x="553" y="375" width="1" height="5" fill="#ffffff" /><rect x="579" y="375" width="1" height="2.5" fill="#ffffff" /><rect x="605" y="375" width="1" height="2.5" fill="#ffffff" /><rect x="631" y="375" width="1" height="5" fill="#ffffff" /><rect x="657" y="375" width="1" height="2.5" fill="#ffffff" /><rect x="683" y="375" width="1" height="2.5" fill="#ffffff" /><rect x="709" y="375" width="1" height="5" fill="#ffffff" /><rect x="735" y="375" width="1" height="2.5" fill="#ffffff" /><rect x="761" y="375" width="1" height="2.5" fill="#ffffff" /><rect x="787" y="375" width="1" height="5" fill="#ffffff" /><rect x="813" y="375" width="1" height="2.5" fill="#ffffff" /><rect x="838" y="375" width="1" height="2.5" fill="#ffffff" /><rect x="864" y="375" width="1" height="5" fill="#ffffff" /><rect x="890" y="375" width="1" height="2.5" fill="#ffffff" /><rect x="916" y="375" width="1" height="2.5" fill="#ffffff" /><rect x="942" y="375" width="1" height="5" fill="#ffffff" /><rect x="968" y="375" width="1" height="2.5" fill="#ffffff" /><text x="242.5" y="391" font-size="11" font-weight="400" fill="#e8eef6" text-anchor="middle" >31.5</text><text x="320.3" y="391" font-size="11" font-weight="400" fill="#e8eef6" text-anchor="middle" >63</text><text x="398.1" y="391" font-size="11" font-weight="400" fill="#e8eef6" text-anchor="middle" >125</text><text x="475.9" y="391" font-size="11" font-weight="400" fill="#e8eef6" text-anchor="middle" >250</text><text x="553.7" y="391" font-size="11" font-weight="400" fill="#e8eef6" text-anchor="middle" >500</text><text x="631.5" y="391" font-size="11" font-weight="400" fill="#e8eef6" text-anchor="middle" >1k</text><text x="709.3" y="391" font-size="11" font-weight="400" fill="#e8eef6" text-anchor="middle" >2k</text><text x="787.1" y="391" font-size="11" font-weight="400" fill="#e8eef6" text-anchor="middle" >4k</text><text x="864.9" y="391" font-size="11" font-weight="400" fill="#e8eef6" text-anchor="middle" >8k</text><text x="903.8" y="391" font-size="11" font-weight="400" fill="#e8eef6" text-anchor="middle" >Hz</text><text x="942.6999999999999" y="391" font-size="11" font-weight="400" fill="#e8eef6" text-anchor="middle" >16k</text><text x="147" y="391" font-size="10.5" font-weight="400" fill="#2e6fd4" text-anchor="start" >dB-SPL</text><text x="986" y="391" font-size="11" font-weight="400" fill="#e02020" text-anchor="start" >s</text><g clip-path="url(#cpWF)"><line x1="387.6" y1="447.5" x2="542.6" y2="412.4" stroke="#ffffff" stroke-width="2"/><line x1="542.6" y1="412.4" x2="736.0" y2="430.4" stroke="#ffffff" stroke-width="2"/><line x1="542.6" y1="412.4" x2="543.7" y2="462.7" stroke="#ffffff" stroke-width="2"/><line x1="736.0" y1="430.4" x2="721.4" y2="557.5" stroke="#ffffff" stroke-width="2"/><path d="M543.3,446.3 L541.9,447.9 L540.4,449.5 L538.9,451.0 L537.4,452.6 L535.8,454.1 L534.3,455.6 L532.7,457.0 L531.2,458.4 L529.6,459.9 L528.0,461.3 L526.4,462.6 L524.8,464.0 L523.2,465.3 L521.5,466.7 L519.9,468.0 L518.2,469.3 L516.5,470.6 L514.8,471.9 L513.1,473.1 L511.3,474.4 L509.6,475.6 L507.8,476.9 L506.0,478.1 L504.2,479.3 L502.4,480.5 L500.5,481.7 L498.7,482.9 L496.8,484.1 L494.9,485.3 L493.0,486.5 L491.0,487.7 L489.1,488.8 L487.1,490.0 L485.1,491.2 L483.1,492.3 L481.1,493.5 L479.0,494.7 L476.9,495.8 L474.8,497.0 L472.7,498.2 L470.6,499.3 L468.4,500.5 L466.2,501.7 L464.0,502.8 L461.8,504.0 L459.5,505.2 L457.2,506.4 L454.9,507.6 L452.6,508.7 L450.2,509.9 L447.8,511.1 L445.4,512.3 L443.0,513.5 L440.5,514.8 L438.0,516.0 L435.5,517.2 L432.9,518.4 L430.3,519.7 L427.7,520.9 L425.1,522.2 L422.4,523.5 L419.7,524.7 L416.9,526.0 L423.9,586.0 L544.9,519.6Z" fill="url(#wwall)"/><path d="M543.3,446.3 L544.5,446.1 L545.7,446.0 L546.9,446.7 L548.1,445.5 L549.3,445.6 L550.6,445.3 L551.8,443.7 L553.0,442.8 L554.2,445.2 L555.4,439.5 L556.6,439.6 L557.9,439.8 L559.2,442.7 L560.5,449.2 L561.7,449.7 L563.0,446.8 L564.2,448.0 L565.4,440.7 L566.7,440.9 L568.0,441.0 L569.3,441.2 L570.5,441.3 L571.8,441.8 L573.1,450.2 L574.4,441.8 L575.7,455.6 L577.0,455.4 L578.3,442.3 L579.5,463.7 L580.8,467.3 L582.1,459.2 L583.4,464.8 L584.8,455.3 L586.1,460.9 L587.5,451.7 L588.9,443.6 L590.2,443.7 L591.5,447.9 L592.9,447.5 L594.1,455.3 L595.4,458.1 L596.7,460.7 L598.1,459.6 L599.5,457.2 L600.7,463.0 L602.2,457.5 L603.6,457.4 L604.9,457.7 L606.5,449.9 L607.8,453.0 L609.4,446.9 L610.8,446.3 L611.6,467.8 L613.1,464.8 L614.5,461.8 L616.1,456.6 L617.1,469.2 L619.1,453.3 L620.4,454.6 L621.5,465.0 L623.4,451.2 L624.3,465.9 L625.9,462.2 L627.8,449.8 L628.7,465.0 L630.0,468.4 L631.6,464.4 L632.8,471.2 L634.2,472.3 L635.5,476.2 L637.8,457.5 L638.7,469.7 L640.1,471.2 L641.7,468.2 L643.0,472.7 L645.0,462.7 L645.8,476.9 L647.2,477.3 L649.7,459.6 L651.1,462.3 L652.5,464.0 L654.7,452.9 L655.2,470.2 L656.9,467.4 L657.9,476.5 L658.8,486.4 L660.5,483.0 L662.2,481.4 L664.3,473.2 L666.2,467.5 L668.3,460.4 L668.8,474.9 L669.6,486.9 L671.3,485.2 L673.1,480.9 L675.4,471.6 L676.4,480.0 L678.1,478.2 L680.5,468.6 L681.2,480.4 L683.3,473.9 L683.7,489.3 L685.2,490.0 L688.2,473.5 L689.0,483.6 L690.5,484.8 L692.2,484.2 L695.2,469.3 L694.6,494.9 L698.5,470.2 L700.1,470.8 L700.3,486.5 L701.6,490.7 L704.3,479.3 L705.4,485.5 L706.8,488.6 L708.1,492.9 L710.0,490.6 L711.8,490.2 L712.7,497.9 L715.2,490.0 L717.5,484.9 L719.4,482.9 L721.0,484.8 L721.4,496.7 L721.3,513.8 L724.1,503.8 L726.2,500.8 L727.7,503.3 L721.4,557.5 L544.9,519.6Z" fill="url(#w0)"/><path d="M541.9,447.9 L543.1,447.8 L544.3,447.9 L545.5,447.4 L546.6,446.4 L547.9,448.4 L549.1,447.4 L550.3,445.5 L551.5,445.5 L552.8,447.6 L553.9,439.9 L555.2,440.1 L556.4,440.3 L557.7,444.9 L559.0,450.7 L560.3,450.0 L561.5,441.5 L562.8,456.4 L564.0,441.2 L565.3,441.3 L566.5,441.5 L567.8,441.7 L569.1,445.1 L570.4,447.1 L571.7,453.5 L573.0,442.3 L574.3,453.4 L575.6,449.5 L576.9,442.8 L578.2,458.0 L579.5,457.6 L580.7,469.7 L582.0,471.6 L583.4,456.4 L584.7,459.7 L586.1,452.0 L587.5,444.1 L588.9,444.2 L590.1,456.5 L591.3,460.3 L592.8,453.4 L594.2,448.2 L595.3,464.0 L596.7,464.8 L598.1,462.0 L599.4,462.0 L601.0,453.3 L602.2,460.3 L603.8,449.2 L605.2,451.0 L606.5,455.4 L608.0,449.4 L609.1,462.4 L610.4,463.7 L611.7,467.4 L613.3,462.2 L614.6,466.1 L615.9,469.2 L617.5,463.7 L619.1,457.2 L620.6,456.2 L622.1,454.7 L623.1,465.5 L624.6,465.3 L626.3,459.1 L627.4,467.3 L628.8,467.3 L630.6,460.3 L632.0,460.6 L633.1,470.4 L634.5,472.4 L635.8,476.1 L637.5,470.1 L638.8,474.2 L640.3,473.4 L641.4,480.9 L643.7,466.1 L644.2,485.2 L646.7,466.0 L648.0,469.9 L649.2,475.2 L651.5,462.5 L652.6,469.1 L654.4,465.2 L655.1,478.7 L656.9,475.6 L657.9,483.8 L659.4,485.0 L661.0,483.9 L663.0,477.1 L664.9,470.9 L667.0,464.4 L667.1,485.3 L668.2,491.4 L670.4,482.6 L671.9,484.9 L673.8,479.8 L675.5,479.2 L677.1,479.0 L677.8,490.2 L680.0,482.6 L681.5,484.1 L682.9,487.1 L684.1,492.9 L686.2,486.1 L688.7,476.5 L689.8,482.3 L690.5,493.5 L692.6,488.9 L694.1,489.9 L696.7,479.4 L699.9,462.6 L698.7,494.1 L701.1,486.9 L701.9,495.8 L704.7,484.4 L706.2,486.9 L707.4,491.9 L710.0,482.7 L709.5,504.4 L711.8,499.0 L713.4,500.5 L716.4,487.8 L717.9,489.7 L719.1,495.4 L719.7,505.6 L720.1,517.8 L724.3,495.9 L724.2,512.1 L726.4,508.3 L720.6,558.7 L543.4,520.4Z" fill="url(#w1)"/><path d="M540.4,449.5 L541.6,449.5 L542.8,449.7 L544.0,449.6 L545.2,449.3 L546.4,447.8 L547.6,447.9 L548.8,448.3 L550.0,446.6 L551.3,447.8 L552.4,440.6 L553.7,440.6 L554.9,440.7 L556.3,446.3 L557.5,447.3 L558.8,450.4 L560.1,450.0 L561.4,455.3 L562.5,441.9 L563.8,441.8 L565.1,445.5 L566.4,442.1 L567.7,444.2 L569.0,452.0 L570.3,459.9 L571.6,443.7 L572.9,467.3 L574.2,458.7 L575.5,447.4 L576.8,462.5 L578.0,465.0 L579.4,463.9 L580.6,467.5 L582.0,465.2 L583.3,458.7 L584.7,454.8 L586.1,445.3 L587.5,444.8 L588.7,457.5 L590.1,454.7 L591.4,454.8 L592.7,459.5 L594.1,456.4 L595.4,459.9 L596.7,466.3 L598.1,461.5 L599.4,464.3 L601.0,455.7 L602.4,454.1 L603.8,453.8 L605.2,455.3 L606.8,447.5 L607.8,463.6 L608.9,473.7 L610.4,470.0 L612.0,461.4 L613.1,474.2 L614.6,471.1 L616.0,469.9 L617.5,469.5 L619.2,461.3 L620.9,452.3 L622.0,463.6 L623.4,464.5 L624.9,463.5 L626.1,469.5 L627.6,467.9 L629.2,464.5 L630.3,474.1 L631.8,472.7 L633.4,470.0 L634.7,474.5 L636.2,473.2 L637.5,478.4 L639.1,474.2 L640.3,482.1 L642.9,458.8 L643.4,478.9 L645.4,469.5 L647.1,467.0 L648.5,469.4 L649.8,473.3 L651.5,469.3 L652.6,476.7 L654.1,478.8 L655.6,478.6 L656.3,492.5 L658.4,482.7 L660.1,481.0 L662.2,473.4 L664.2,466.7 L665.8,465.6 L666.4,480.8 L668.2,477.5 L668.9,490.3 L671.0,482.6 L672.4,486.2 L674.8,474.7 L675.7,484.2 L676.9,489.8 L678.6,488.5 L680.3,487.6 L681.3,495.4 L682.7,498.4 L684.8,492.6 L686.5,491.7 L688.4,488.4 L689.3,497.0 L691.7,488.8 L693.0,492.4 L695.2,486.8 L698.0,474.4 L698.2,490.6 L700.0,488.9 L701.3,493.5 L702.4,499.8 L704.3,497.3 L705.8,499.9 L707.8,496.3 L709.4,498.2 L710.1,507.9 L712.8,498.5 L714.4,499.7 L715.3,507.1 L718.0,498.5 L719.1,504.4 L719.0,521.6 L722.8,503.0 L723.7,510.7 L726.1,504.8 L719.8,559.8 L542.0,521.2Z" fill="url(#w2)"/><path d="M538.9,451.0 L540.1,451.1 L541.3,451.5 L542.5,450.5 L543.7,449.6 L544.9,450.8 L546.1,450.2 L547.3,448.9 L548.6,452.2 L549.8,448.8 L550.9,441.6 L552.2,441.1 L553.4,441.2 L554.7,442.8 L556.1,455.9 L557.4,456.0 L558.6,452.1 L559.9,455.1 L561.1,444.9 L562.4,448.4 L563.7,448.9 L564.9,442.6 L566.2,442.8 L567.6,454.5 L568.9,457.0 L570.1,446.7 L571.4,465.0 L572.7,463.3 L574.1,446.3 L575.3,463.5 L576.6,470.0 L577.9,471.9 L579.3,464.6 L580.6,469.7 L581.9,465.1 L583.3,455.7 L584.7,446.5 L586.1,447.2 L587.3,458.3 L588.6,464.4 L590.0,457.5 L591.4,458.2 L592.7,462.8 L594.0,463.6 L595.3,467.6 L596.7,464.8 L598.0,469.4 L599.6,458.3 L601.0,458.3 L602.6,449.9 L603.8,456.9 L605.3,454.5 L606.4,465.2 L607.7,472.0 L609.2,466.8 L610.7,463.2 L611.9,469.4 L613.4,468.2 L614.8,468.1 L616.4,463.6 L617.8,463.7 L619.5,457.1 L620.5,469.9 L622.0,467.4 L623.7,463.1 L625.1,464.9 L626.2,474.3 L627.6,473.6 L629.1,474.6 L630.3,479.3 L631.8,478.7 L633.4,476.2 L634.9,477.5 L636.3,479.1 L638.0,473.1 L639.2,479.3 L641.2,470.3 L642.4,476.5 L643.7,480.6 L645.6,473.2 L646.9,477.2 L648.8,471.2 L650.4,470.1 L651.4,479.0 L653.0,477.5 L654.3,482.1 L655.6,486.7 L657.0,488.5 L659.3,476.5 L661.1,473.6 L662.9,469.3 L664.6,468.8 L665.0,486.6 L666.4,488.5 L668.0,488.9 L670.2,480.3 L671.4,486.0 L673.1,483.9 L675.0,480.5 L675.9,489.7 L677.7,487.5 L679.6,483.8 L681.3,482.9 L682.0,495.5 L683.9,491.8 L686.1,485.1 L687.6,487.5 L688.8,492.0 L690.8,488.7 L690.8,507.2 L694.3,486.3 L696.9,477.0 L696.7,497.1 L698.1,500.9 L700.8,489.5 L702.4,490.9 L703.6,495.7 L704.9,500.1 L706.4,502.0 L708.6,498.1 L709.3,507.5 L711.3,504.8 L713.9,496.6 L715.2,501.4 L716.1,508.6 L717.8,509.3 L719.1,513.8 L720.7,514.8 L722.4,515.1 L724.0,516.5 L719.0,560.9 L540.6,521.9Z" fill="url(#w3)"/><path d="M537.4,452.6 L538.6,452.7 L539.8,452.7 L541.0,452.0 L542.2,452.4 L543.4,450.7 L544.7,452.2 L545.9,450.7 L547.1,451.1 L548.3,451.7 L549.4,441.9 L550.7,441.5 L551.9,441.7 L553.3,447.3 L554.6,452.2 L555.9,452.3 L557.1,452.7 L558.5,459.4 L559.6,447.9 L560.9,447.8 L562.2,451.4 L563.5,446.2 L564.8,444.9 L566.1,454.6 L567.4,450.5 L568.7,446.2 L570.0,467.8 L571.3,461.7 L572.6,458.5 L573.9,465.7 L575.2,470.0 L576.5,473.9 L577.8,476.6 L579.2,469.5 L580.5,466.9 L581.9,462.4 L583.3,452.3 L584.7,445.8 L585.9,457.5 L587.2,467.9 L588.7,455.7 L589.9,466.2 L591.2,470.0 L592.6,468.2 L594.0,463.0 L595.4,465.4 L596.7,468.0 L598.2,460.6 L599.6,460.7 L601.1,455.2 L602.5,458.1 L603.9,454.9 L605.0,469.2 L606.3,476.3 L607.8,470.6 L609.4,463.3 L610.6,470.5 L612.1,470.6 L613.6,465.6 L614.8,473.6 L616.5,466.4 L618.0,463.8 L619.4,466.1 L620.7,471.5 L622.4,464.0 L623.6,469.8 L624.9,474.6 L626.4,475.1 L627.8,475.7 L629.4,473.8 L630.4,483.4 L631.9,485.1 L633.8,474.0 L635.3,474.8 L636.8,473.7 L638.3,474.4 L640.0,470.5 L640.9,483.5 L642.3,485.8 L644.2,478.2 L645.6,481.3 L647.6,472.4 L648.9,476.2 L650.0,483.5 L651.9,478.3 L653.1,484.0 L654.1,492.7 L655.7,493.3 L657.9,481.4 L659.8,477.2 L661.8,470.1 L663.7,465.9 L664.2,482.8 L665.6,485.8 L667.0,488.2 L668.8,485.1 L670.4,486.1 L672.4,480.7 L673.2,491.3 L674.8,490.9 L676.4,491.5 L678.0,492.7 L679.7,492.0 L681.6,488.5 L683.1,489.3 L684.6,491.6 L686.2,492.1 L687.8,492.8 L688.9,500.2 L690.5,500.7 L693.8,481.8 L696.6,469.4 L696.1,494.2 L697.4,498.6 L698.7,502.6 L700.6,501.3 L702.2,502.1 L703.8,502.7 L705.4,504.0 L705.9,516.4 L708.0,512.4 L710.8,501.8 L712.4,503.3 L713.7,507.9 L715.7,505.3 L716.8,512.0 L717.4,522.2 L720.2,512.9 L721.6,515.6 L722.8,520.9 L718.2,562.1 L539.1,522.7Z" fill="url(#w4)"/><path d="M535.8,454.1 L537.0,454.3 L538.3,454.6 L539.5,454.5 L540.7,455.3 L541.9,454.7 L543.1,453.7 L544.3,451.2 L545.6,452.7 L546.8,453.2 L548.0,445.6 L549.1,442.0 L550.4,442.2 L551.8,447.3 L553.1,453.1 L554.4,453.5 L555.6,453.7 L557.0,461.4 L558.2,451.1 L559.5,456.8 L560.8,453.7 L562.0,444.1 L563.3,450.1 L564.6,455.4 L565.9,458.6 L567.2,457.2 L568.6,466.6 L569.9,464.4 L571.2,452.8 L572.5,465.9 L573.8,466.9 L575.1,473.8 L576.4,474.6 L577.8,468.8 L579.1,470.7 L580.4,464.8 L581.9,448.7 L583.2,449.6 L584.5,463.7 L585.8,464.0 L587.2,463.3 L588.6,462.5 L589.8,473.0 L591.2,470.5 L592.6,470.4 L594.0,464.9 L595.3,469.1 L596.9,461.5 L598.3,458.9 L599.7,457.5 L601.1,461.1 L602.6,456.6 L603.7,468.9 L605.1,468.6 L606.6,468.3 L608.0,469.2 L609.3,472.2 L610.8,470.1 L612.2,469.0 L613.7,470.2 L615.0,471.6 L616.8,462.9 L617.9,472.7 L619.3,474.3 L621.0,468.8 L622.3,471.6 L623.7,474.4 L625.0,478.5 L626.6,476.2 L627.9,480.8 L629.3,482.9 L630.8,480.8 L632.4,478.7 L633.8,481.7 L635.8,470.7 L637.1,475.9 L638.7,472.8 L639.8,482.4 L641.3,481.9 L643.2,475.0 L644.2,485.9 L646.2,477.4 L647.8,475.3 L649.1,481.0 L650.4,484.3 L652.2,480.1 L652.8,496.6 L654.9,487.7 L656.6,486.4 L658.6,478.1 L660.4,475.3 L662.3,470.8 L662.8,488.2 L664.3,489.7 L665.6,494.0 L667.6,487.2 L669.1,489.2 L670.7,490.1 L672.3,489.3 L673.7,493.0 L675.6,489.4 L676.8,494.7 L678.6,493.0 L680.3,491.7 L681.6,496.8 L684.0,487.1 L685.1,494.6 L686.2,500.6 L687.7,503.1 L688.7,510.4 L692.4,487.6 L694.6,482.3 L694.5,501.8 L696.6,497.5 L698.6,494.7 L699.8,500.4 L700.5,511.0 L701.7,515.7 L704.5,504.9 L705.8,509.5 L707.2,512.3 L710.5,496.8 L711.4,505.1 L712.9,508.3 L715.4,500.7 L715.8,513.4 L716.1,527.7 L718.3,523.3 L720.7,517.7 L721.2,528.7 L717.4,563.3 L537.7,523.5Z" fill="url(#w5)"/><path d="M534.3,455.6 L535.5,455.9 L536.7,456.1 L537.9,455.8 L539.2,455.9 L540.4,454.4 L541.6,454.7 L542.9,455.9 L544.1,455.0 L545.3,454.5 L546.5,450.6 L547.6,442.5 L548.9,445.1 L550.3,452.8 L551.6,453.5 L552.9,459.5 L554.2,455.9 L555.5,461.5 L556.7,455.4 L557.9,450.3 L559.2,453.4 L560.5,452.6 L561.8,450.4 L563.1,453.4 L564.5,462.4 L565.8,456.8 L567.1,470.1 L568.4,465.0 L569.7,452.0 L571.0,464.6 L572.4,466.7 L573.7,476.9 L575.0,474.4 L576.3,471.2 L577.6,476.7 L579.0,461.6 L580.4,454.3 L581.7,460.2 L583.0,468.7 L584.4,464.5 L585.8,461.2 L587.2,461.8 L588.4,472.8 L589.8,467.8 L591.1,474.5 L592.6,468.8 L593.9,473.1 L595.4,469.4 L596.7,470.2 L598.3,458.5 L599.7,459.2 L601.2,458.3 L602.4,469.2 L603.7,471.1 L605.1,475.7 L606.6,470.1 L608.0,472.2 L609.4,471.5 L610.8,475.9 L612.4,468.2 L613.8,470.1 L615.4,466.8 L616.6,472.5 L618.0,474.6 L619.5,475.2 L621.0,474.3 L622.3,478.2 L623.7,479.5 L625.4,474.1 L626.6,482.3 L628.1,480.5 L629.5,482.9 L631.2,479.4 L632.5,483.8 L634.4,474.3 L635.7,480.2 L637.4,475.0 L638.4,487.3 L640.2,481.5 L641.8,480.7 L643.2,482.9 L645.0,477.7 L646.6,476.0 L647.7,485.2 L649.4,482.0 L650.9,484.0 L651.8,494.9 L653.6,490.8 L655.2,490.3 L657.3,481.5 L659.3,475.2 L660.8,477.2 L661.8,486.5 L662.8,496.3 L665.1,485.6 L666.0,495.3 L668.2,487.0 L670.1,483.3 L670.9,494.8 L672.7,492.1 L674.2,494.7 L675.6,498.1 L677.8,490.8 L679.2,493.3 L680.9,492.8 L682.9,489.3 L684.0,496.7 L685.2,502.2 L687.5,494.5 L688.1,507.6 L691.2,490.7 L694.0,478.9 L693.9,499.3 L695.3,501.8 L697.5,497.4 L698.8,501.9 L699.7,510.1 L700.0,525.5 L702.8,514.1 L704.1,518.2 L706.9,506.9 L708.4,509.9 L710.7,504.7 L712.0,508.9 L713.8,508.7 L714.0,523.2 L716.6,515.6 L718.3,516.5 L719.4,522.3 L720.4,529.6 L716.5,564.5 L536.2,524.4Z" fill="url(#w6)"/><path d="M532.7,457.0 L534.0,457.4 L535.2,457.5 L536.4,457.9 L537.6,456.2 L538.8,455.8 L540.1,456.7 L541.2,453.5 L542.6,459.3 L543.8,454.6 L544.9,449.4 L546.1,443.0 L547.4,446.6 L548.7,451.9 L550.0,453.6 L551.3,452.5 L552.6,457.6 L554.0,463.6 L555.2,457.9 L556.4,452.9 L557.8,458.1 L559.0,455.4 L560.4,457.8 L561.7,460.9 L563.0,461.9 L564.3,465.7 L565.7,472.2 L567.0,468.6 L568.2,462.4 L569.6,463.2 L570.9,464.8 L572.2,479.3 L573.5,475.0 L574.9,481.6 L576.2,466.5 L577.5,472.2 L578.9,462.0 L580.3,457.8 L581.6,465.2 L583.0,468.4 L584.4,460.8 L585.7,470.9 L587.0,472.2 L588.4,474.2 L589.8,471.9 L591.2,468.7 L592.5,476.6 L593.9,471.6 L595.4,469.7 L597.0,459.4 L598.3,463.0 L599.9,455.6 L601.0,469.4 L602.4,471.7 L603.8,472.7 L605.3,469.4 L606.7,471.8 L608.3,465.0 L609.5,473.7 L611.0,473.3 L612.3,475.6 L613.9,471.2 L615.4,471.4 L616.9,471.5 L618.2,474.6 L619.7,475.0 L621.0,480.6 L622.3,483.7 L624.0,479.7 L625.3,483.3 L626.4,492.4 L628.1,489.5 L629.9,481.7 L631.3,482.8 L633.4,469.4 L634.6,477.2 L636.2,476.7 L637.1,488.6 L638.8,486.4 L640.6,481.2 L642.1,481.0 L643.7,479.8 L645.3,479.6 L646.6,484.2 L648.2,483.9 L649.6,486.4 L650.8,493.8 L652.1,497.2 L653.9,493.3 L656.0,484.7 L658.1,476.6 L659.3,484.4 L660.8,486.0 L662.1,490.0 L663.6,491.4 L665.4,488.7 L667.3,484.8 L668.9,485.8 L670.2,490.6 L671.7,491.8 L672.8,500.4 L674.6,498.1 L676.1,500.0 L678.0,496.2 L679.3,501.7 L681.3,496.7 L682.6,501.8 L684.0,504.4 L685.7,504.5 L687.7,500.6 L689.4,501.1 L691.8,492.9 L692.8,500.7 L694.1,506.1 L696.3,500.1 L697.5,506.3 L698.8,510.3 L700.3,513.1 L701.0,523.4 L702.7,524.2 L706.5,503.4 L706.9,516.6 L709.6,507.2 L709.9,521.7 L712.0,518.2 L713.2,523.4 L715.2,521.6 L716.5,525.5 L717.1,536.7 L719.0,535.9 L715.7,565.7 L534.7,525.2Z" fill="url(#w7)"/><path d="M531.2,458.4 L532.4,458.9 L533.6,459.0 L534.8,458.5 L536.1,460.2 L537.3,459.1 L538.6,459.8 L539.8,458.0 L541.0,458.4 L542.4,462.2 L543.4,451.0 L544.5,443.5 L545.9,448.8 L547.2,453.4 L548.5,453.1 L549.8,456.9 L551.2,461.7 L552.5,464.4 L553.7,456.6 L555.0,457.6 L556.3,465.8 L557.6,460.9 L558.8,455.8 L560.1,456.1 L561.5,459.3 L562.8,466.6 L564.2,470.4 L565.5,468.2 L566.8,466.2 L568.1,463.8 L569.4,463.6 L570.8,479.5 L572.1,478.8 L573.4,475.0 L574.8,474.6 L576.1,469.2 L577.5,460.4 L578.8,462.3 L580.2,466.3 L581.5,468.1 L583.0,458.7 L584.3,464.6 L585.6,476.5 L586.9,477.2 L588.4,472.7 L589.8,473.2 L591.1,478.0 L592.5,474.6 L594.0,470.1 L595.7,454.6 L597.0,460.7 L598.5,454.7 L599.7,468.7 L601.1,467.0 L602.5,470.9 L603.8,476.8 L605.3,473.4 L606.9,469.0 L608.2,471.5 L609.6,474.1 L610.9,480.3 L612.6,471.0 L613.9,478.1 L615.5,474.3 L616.9,477.1 L618.3,479.1 L619.6,483.0 L620.7,493.7 L622.6,482.5 L623.9,487.0 L625.5,484.4 L626.8,488.7 L628.4,487.8 L630.2,480.4 L631.9,476.3 L633.3,479.8 L634.7,482.0 L636.0,487.1 L637.8,482.3 L639.1,486.9 L640.8,484.5 L642.4,482.5 L644.3,476.0 L645.4,485.1 L646.7,489.6 L648.5,486.4 L649.5,495.6 L651.1,495.0 L652.5,498.6 L654.7,488.2 L657.2,473.3 L658.4,480.6 L658.9,498.0 L660.9,491.5 L662.7,488.6 L664.4,488.2 L665.4,497.9 L667.3,493.7 L669.1,491.5 L670.2,499.3 L671.8,499.5 L673.3,501.2 L675.5,494.5 L676.4,503.7 L679.0,492.5 L680.3,497.5 L681.4,504.7 L683.4,501.1 L685.2,499.3 L686.3,506.4 L688.4,501.6 L691.3,488.2 L691.4,506.6 L693.5,502.2 L695.6,497.7 L695.8,514.5 L696.9,521.4 L699.4,512.9 L700.2,523.0 L702.3,519.7 L704.7,513.0 L706.1,516.5 L708.3,512.3 L708.8,524.1 L710.6,523.6 L712.2,525.3 L713.7,527.9 L715.4,529.1 L717.2,529.3 L719.1,528.0 L714.8,566.9 L533.2,526.0Z" fill="url(#w8)"/><path d="M529.6,459.9 L530.8,460.4 L532.1,460.6 L533.3,461.4 L534.5,460.1 L535.7,459.6 L537.0,458.8 L538.2,460.9 L539.5,460.2 L540.7,459.3 L541.9,457.3 L542.9,445.6 L544.4,454.6 L545.6,451.3 L546.9,454.9 L548.2,454.6 L549.6,462.5 L551.0,469.0 L552.2,462.6 L553.5,462.5 L554.8,461.0 L556.0,461.0 L557.3,453.2 L558.6,458.3 L559.9,457.4 L561.4,469.9 L562.7,476.0 L564.0,471.0 L565.3,461.5 L566.6,458.7 L567.9,464.3 L569.3,479.7 L570.6,480.7 L572.0,476.9 L573.3,475.8 L574.6,473.4 L576.0,472.4 L577.4,462.6 L578.7,466.2 L580.1,469.8 L581.5,466.1 L582.9,466.0 L584.2,475.5 L585.5,479.8 L586.9,478.7 L588.3,479.4 L589.7,474.4 L591.1,472.9 L592.6,471.6 L594.2,455.8 L595.5,464.7 L597.0,460.0 L598.2,471.9 L599.7,471.1 L601.1,472.9 L602.5,475.4 L603.9,475.3 L605.6,464.1 L606.8,475.5 L608.1,480.1 L609.8,474.0 L611.2,475.5 L612.6,477.1 L614.0,478.2 L615.6,475.3 L616.8,484.6 L618.3,485.4 L619.4,496.6 L621.4,480.9 L622.6,487.7 L624.2,486.2 L625.8,483.8 L627.4,482.2 L628.8,484.1 L630.5,481.2 L632.4,470.8 L633.3,485.2 L634.9,485.5 L636.4,485.1 L637.9,486.9 L639.6,484.6 L640.8,490.8 L642.6,486.6 L644.0,489.0 L645.8,484.6 L646.6,498.7 L648.6,492.1 L649.9,497.7 L651.8,490.8 L654.2,477.8 L655.9,477.0 L657.1,483.9 L658.3,490.1 L659.7,494.1 L661.6,489.3 L662.9,493.9 L664.5,495.2 L666.5,490.0 L667.7,495.6 L669.0,500.8 L671.0,496.4 L672.0,504.8 L674.0,500.4 L676.0,496.7 L677.2,502.6 L678.4,508.9 L680.6,501.6 L681.7,510.0 L683.4,509.8 L685.3,506.7 L687.4,502.4 L689.5,498.2 L690.5,506.2 L691.7,512.0 L693.6,509.7 L695.2,511.4 L696.8,513.5 L698.2,516.5 L700.2,513.8 L701.3,520.6 L704.1,509.7 L705.4,514.7 L706.5,521.1 L708.4,520.5 L710.0,522.4 L711.6,524.1 L712.7,530.0 L714.7,528.7 L715.4,538.3 L717.5,535.8 L713.9,568.1 L531.7,526.8Z" fill="url(#w9)"/><path d="M528.0,461.3 L529.3,461.9 L530.5,462.3 L531.7,462.5 L532.9,462.0 L534.1,460.7 L535.4,461.3 L536.7,462.7 L538.0,466.5 L539.2,462.0 L540.3,455.1 L541.4,448.5 L542.7,449.7 L544.1,455.5 L545.5,461.2 L546.7,458.3 L548.1,464.4 L549.4,465.0 L550.7,467.0 L552.0,468.1 L553.3,470.8 L554.5,460.6 L555.7,454.6 L557.1,460.3 L558.5,465.3 L559.8,470.1 L561.2,476.3 L562.5,474.5 L563.8,464.6 L565.1,462.7 L566.4,454.9 L567.8,476.1 L569.1,479.8 L570.5,479.3 L571.8,473.6 L573.2,471.2 L574.5,474.2 L575.9,467.4 L577.3,467.8 L578.6,466.8 L580.0,467.0 L581.4,472.6 L582.7,479.1 L584.1,478.7 L585.5,480.8 L586.9,475.1 L588.2,483.6 L589.7,475.2 L591.2,471.1 L592.7,461.4 L594.1,466.0 L595.6,460.2 L596.8,473.4 L598.3,470.8 L599.6,479.7 L601.0,480.7 L602.5,478.3 L604.0,474.7 L605.3,481.5 L606.9,474.9 L608.2,480.7 L609.8,478.4 L611.2,479.0 L612.5,486.6 L614.2,480.0 L615.4,488.0 L617.1,482.5 L618.0,498.4 L619.8,488.5 L621.4,487.6 L622.8,490.5 L624.2,491.9 L626.0,485.3 L627.6,483.4 L629.7,468.7 L630.8,480.0 L632.2,483.1 L633.6,487.0 L635.2,485.0 L636.4,492.1 L638.4,483.6 L639.9,484.4 L641.2,490.2 L643.1,484.6 L644.5,487.2 L645.8,492.2 L647.3,494.2 L648.6,499.2 L650.5,494.5 L652.7,483.9 L654.4,483.2 L655.3,494.6 L656.5,501.4 L658.8,491.2 L660.3,493.3 L661.7,495.6 L663.1,499.1 L665.5,488.0 L666.8,493.6 L667.8,503.2 L670.0,495.6 L671.4,500.0 L672.9,501.2 L674.3,505.0 L676.4,499.3 L677.7,504.9 L679.3,506.3 L680.9,506.6 L682.6,507.0 L683.9,511.8 L686.0,507.1 L688.8,495.4 L690.0,500.5 L691.8,500.3 L692.7,509.4 L693.6,519.3 L695.5,517.9 L696.9,521.3 L698.3,524.8 L700.5,520.3 L702.5,518.1 L704.2,517.9 L704.7,531.1 L708.0,515.5 L708.7,527.0 L710.0,531.9 L711.8,531.6 L713.4,533.2 L714.5,539.8 L717.1,532.0 L713.1,569.3 L530.1,527.7Z" fill="url(#w10)"/><path d="M526.4,462.6 L527.7,463.4 L528.9,463.8 L530.1,464.0 L531.4,463.7 L532.6,464.1 L533.8,461.8 L535.1,465.0 L536.4,464.4 L537.5,460.6 L538.8,460.6 L539.8,449.4 L541.3,461.9 L542.4,453.7 L544.0,466.3 L545.2,463.0 L546.4,461.4 L547.8,466.3 L549.1,465.9 L550.4,467.9 L551.8,470.4 L553.0,465.9 L554.1,452.9 L555.5,453.6 L556.9,465.9 L558.3,473.5 L559.7,482.0 L561.0,472.9 L562.3,468.8 L563.6,463.6 L564.9,460.5 L566.3,479.4 L567.7,487.5 L569.0,480.5 L570.3,475.3 L571.7,481.2 L573.0,476.2 L574.4,475.3 L575.8,473.4 L577.2,464.6 L578.6,463.8 L579.9,474.9 L581.2,484.6 L582.7,477.9 L584.0,481.2 L585.4,479.1 L586.9,475.0 L588.2,478.3 L589.7,478.0 L591.3,464.6 L592.6,469.2 L594.1,463.3 L595.4,477.7 L596.9,469.7 L598.2,478.5 L599.8,472.0 L601.2,474.9 L602.7,470.7 L604.1,474.1 L605.4,480.0 L607.0,476.3 L608.5,476.2 L610.0,476.0 L611.4,478.1 L612.8,480.6 L614.1,486.0 L615.6,487.9 L616.7,499.2 L618.8,480.5 L619.9,493.2 L621.5,490.5 L623.0,491.2 L624.5,492.1 L626.1,489.3 L628.3,472.2 L629.6,479.8 L630.9,485.5 L632.2,491.0 L633.9,485.9 L635.6,484.0 L636.9,490.2 L638.5,489.2 L640.1,487.6 L641.6,490.2 L643.2,490.4 L644.8,489.0 L646.0,497.1 L647.4,500.9 L649.2,497.1 L651.4,486.9 L653.1,484.4 L654.1,495.9 L655.3,503.0 L657.0,502.2 L659.9,482.0 L660.6,496.3 L662.5,492.5 L664.4,489.2 L665.7,494.9 L666.6,505.9 L668.4,502.6 L670.1,502.6 L671.4,507.7 L673.5,501.7 L675.9,493.6 L676.8,503.6 L678.2,507.3 L679.1,517.2 L682.3,498.5 L683.2,508.5 L684.5,514.4 L686.8,507.0 L688.3,510.3 L689.9,511.6 L691.7,511.0 L692.7,519.6 L694.3,520.4 L695.5,526.8 L697.0,529.2 L698.6,531.1 L701.8,515.4 L703.3,519.2 L704.4,526.1 L705.1,536.2 L707.6,529.5 L708.1,542.2 L710.1,540.3 L712.8,531.3 L714.7,530.6 L715.4,540.7 L712.2,570.6 L528.6,528.5Z" fill="url(#w11)"/><path d="M524.8,464.0 L526.0,464.8 L527.3,465.7 L528.5,466.0 L529.8,465.3 L531.0,463.9 L532.3,466.3 L533.6,467.2 L534.8,466.0 L535.9,462.9 L537.2,461.6 L538.2,452.2 L539.6,456.3 L540.8,455.1 L542.4,468.2 L543.5,459.4 L544.8,460.2 L546.4,474.6 L547.5,465.8 L548.9,470.5 L550.3,475.7 L551.5,467.9 L552.7,466.3 L553.9,454.3 L555.3,461.4 L556.7,468.5 L558.2,484.3 L559.4,475.8 L560.7,465.4 L561.9,455.0 L563.3,457.3 L564.8,477.7 L566.2,484.2 L567.5,477.6 L568.8,473.8 L570.2,486.0 L571.5,481.0 L572.9,475.9 L574.3,472.9 L575.7,468.2 L577.1,467.4 L578.4,474.5 L579.8,482.4 L581.2,479.9 L582.5,485.0 L584.0,479.8 L585.4,479.6 L586.9,471.1 L588.2,479.8 L589.8,466.6 L591.2,465.8 L592.7,464.6 L594.0,473.9 L595.5,470.7 L596.8,481.0 L598.2,479.0 L599.7,477.2 L601.3,473.4 L602.6,479.5 L604.1,477.5 L605.5,480.7 L607.1,477.5 L608.5,479.5 L609.8,487.3 L611.3,488.4 L612.7,491.5 L614.2,488.9 L615.5,496.7 L617.2,490.1 L618.6,492.8 L620.1,493.5 L621.6,494.6 L623.4,487.4 L624.7,492.0 L626.6,481.8 L628.4,475.8 L629.3,492.2 L630.8,494.8 L632.4,492.2 L634.0,490.9 L635.6,490.4 L636.9,496.5 L638.6,494.2 L640.2,494.6 L641.9,492.6 L643.3,495.5 L644.7,499.3 L645.9,506.0 L648.0,496.8 L650.1,489.4 L652.0,484.7 L652.9,496.2 L654.0,504.8 L656.1,497.5 L657.9,496.0 L659.4,497.7 L661.0,498.5 L662.5,500.9 L664.3,498.2 L665.8,501.6 L667.3,504.2 L669.3,499.6 L670.4,507.1 L672.8,498.1 L674.3,500.4 L675.0,513.7 L676.8,512.0 L678.2,515.7 L680.5,508.4 L682.4,507.0 L684.3,504.9 L686.2,502.2 L687.3,510.3 L688.9,511.8 L689.9,519.9 L692.1,515.3 L692.5,530.7 L694.3,529.4 L696.0,530.5 L698.2,526.2 L700.0,526.0 L701.3,530.7 L702.9,532.0 L705.3,526.4 L705.7,540.0 L707.4,541.1 L709.8,535.4 L711.9,531.8 L714.0,529.9 L714.4,542.6 L711.3,571.9 L527.0,529.4Z" fill="url(#w12)"/><path d="M523.2,465.3 L524.4,466.2 L525.7,466.9 L526.9,466.9 L528.1,466.4 L529.4,467.5 L530.6,464.4 L531.8,464.3 L533.2,469.8 L534.4,467.3 L535.6,462.8 L536.7,455.8 L538.1,461.8 L539.3,459.6 L540.8,468.2 L541.9,462.2 L543.3,466.1 L544.7,469.7 L546.0,472.8 L547.4,474.8 L548.7,478.1 L549.9,472.1 L551.2,466.9 L552.4,465.0 L553.7,458.1 L555.3,482.2 L556.6,476.0 L557.8,468.4 L559.2,471.3 L560.4,460.2 L561.7,457.0 L563.3,482.7 L564.7,487.3 L566.0,479.7 L567.3,484.6 L568.7,478.1 L570.0,480.4 L571.4,476.1 L572.8,470.9 L574.2,474.7 L575.5,471.4 L576.9,474.9 L578.3,485.5 L579.7,486.1 L581.1,484.7 L582.5,481.3 L583.9,484.1 L585.3,484.6 L586.7,482.0 L588.3,468.8 L589.8,465.4 L591.2,468.6 L592.6,472.7 L594.2,463.3 L595.4,480.0 L596.8,483.2 L598.3,479.6 L600.0,469.4 L601.2,478.7 L602.8,476.4 L604.1,481.2 L605.7,479.3 L607.2,478.7 L608.7,479.1 L610.0,485.5 L611.5,486.3 L612.7,495.5 L614.0,501.7 L615.7,494.5 L617.7,480.2 L618.8,492.6 L620.2,497.2 L621.9,492.6 L623.5,489.8 L625.6,474.8 L626.9,482.5 L628.2,488.6 L629.6,493.0 L631.4,487.0 L632.9,488.4 L634.2,495.4 L635.6,497.5 L637.4,493.7 L639.1,491.3 L640.7,492.3 L642.0,498.0 L643.2,504.5 L645.0,500.8 L646.6,500.9 L648.6,493.9 L651.1,479.4 L651.6,498.3 L653.0,502.4 L655.2,493.2 L657.4,484.4 L657.9,503.9 L659.9,498.8 L661.9,493.3 L663.2,499.3 L664.8,499.9 L666.3,502.9 L667.5,509.0 L669.7,502.7 L670.9,508.7 L673.2,501.4 L673.8,515.5 L675.8,512.6 L677.6,511.1 L678.9,516.7 L680.7,515.3 L683.0,508.8 L684.7,509.0 L686.0,513.8 L688.8,501.3 L689.0,519.7 L689.6,532.5 L691.3,533.0 L693.2,531.5 L694.2,540.2 L696.3,536.6 L699.4,522.2 L700.8,526.9 L702.3,529.3 L703.7,533.3 L705.9,529.7 L708.8,518.7 L709.1,533.4 L710.8,535.1 L711.4,546.8 L713.5,544.0 L710.4,573.1 L525.5,530.2Z" fill="url(#w13)"/><path d="M521.5,466.7 L522.8,467.6 L524.1,468.7 L525.3,468.3 L526.5,467.0 L527.7,467.4 L528.9,464.1 L530.3,470.4 L531.6,469.7 L532.8,469.3 L533.9,463.1 L535.1,460.1 L536.5,464.1 L537.6,457.1 L539.1,467.6 L540.2,458.9 L541.6,463.3 L543.1,470.3 L544.5,475.7 L545.8,475.8 L547.1,478.1 L548.3,470.6 L549.5,462.1 L550.8,460.4 L552.2,467.3 L553.7,478.0 L555.0,481.0 L556.3,477.6 L557.6,474.2 L558.8,455.6 L560.1,455.2 L561.7,483.8 L563.1,488.5 L564.4,483.1 L565.8,486.2 L567.2,486.5 L568.5,482.0 L569.9,475.6 L571.3,478.8 L572.6,472.6 L574.0,469.2 L575.4,478.6 L576.8,492.9 L578.2,484.5 L579.6,486.8 L581.0,480.6 L582.4,480.3 L583.8,483.5 L585.2,484.6 L586.8,473.1 L588.3,469.5 L589.7,468.6 L591.0,480.7 L592.5,476.2 L593.9,483.4 L595.3,484.0 L596.9,479.3 L598.5,471.1 L599.9,473.7 L601.3,480.0 L602.8,479.4 L604.2,484.1 L605.7,481.3 L607.1,486.8 L608.5,489.3 L610.0,489.3 L611.3,497.2 L612.7,501.6 L614.4,494.7 L615.9,493.6 L617.4,495.8 L619.1,489.8 L620.5,493.8 L622.2,489.3 L624.1,481.6 L625.9,475.3 L626.6,495.5 L628.4,491.5 L630.0,489.1 L631.1,499.8 L632.9,495.3 L634.4,496.6 L636.0,497.0 L637.7,495.6 L639.2,496.9 L640.8,497.8 L642.2,501.2 L643.8,501.4 L645.3,503.3 L647.8,488.0 L649.5,487.1 L650.4,500.6 L651.8,503.8 L653.8,497.5 L655.5,496.5 L657.0,499.4 L658.5,502.3 L660.3,500.6 L662.3,496.3 L663.0,510.9 L664.7,510.1 L666.3,511.4 L668.5,504.6 L669.7,511.6 L671.9,504.4 L673.2,510.0 L674.6,513.8 L676.6,510.2 L677.7,518.9 L679.3,519.7 L681.0,520.8 L683.2,514.7 L685.5,508.7 L687.2,508.6 L688.1,519.8 L689.5,523.2 L689.8,539.9 L692.6,528.0 L693.9,533.8 L694.7,543.9 L698.3,524.0 L699.7,528.6 L702.1,522.1 L702.8,534.0 L704.9,531.1 L706.7,530.9 L707.8,537.8 L708.7,546.8 L709.9,552.8 L712.2,548.6 L709.4,574.4 L523.9,531.1Z" fill="url(#w14)"/><path d="M519.9,468.0 L521.1,469.0 L522.4,470.2 L523.6,469.9 L524.9,470.9 L526.1,470.3 L527.3,467.9 L528.6,469.8 L530.0,474.1 L531.2,472.3 L532.3,464.9 L533.4,458.0 L534.9,466.3 L536.0,460.5 L537.4,465.3 L538.6,461.1 L540.1,470.5 L541.5,473.4 L542.9,477.6 L544.2,476.2 L545.4,473.1 L546.8,478.8 L547.9,467.0 L549.1,456.0 L550.5,461.5 L552.1,481.7 L553.5,487.2 L554.7,476.6 L556.0,474.0 L557.2,459.0 L558.6,465.0 L560.2,481.8 L561.6,495.6 L562.9,485.5 L564.2,477.6 L565.6,482.4 L567.0,479.6 L568.3,481.1 L569.7,476.6 L571.1,473.8 L572.5,463.1 L573.9,480.3 L575.3,494.4 L576.7,490.1 L578.1,484.1 L579.5,485.1 L580.9,483.1 L582.3,488.2 L583.8,485.1 L585.3,476.6 L586.8,472.8 L588.3,468.1 L589.6,479.2 L591.2,466.0 L592.5,481.4 L593.8,487.1 L595.3,485.0 L596.9,479.0 L598.4,481.4 L599.7,488.6 L601.3,484.0 L602.6,489.7 L604.4,477.7 L605.6,490.7 L607.2,488.0 L608.6,492.2 L610.2,488.6 L611.1,509.4 L613.1,491.5 L614.7,488.9 L616.1,495.4 L617.6,496.5 L619.1,495.8 L620.9,490.0 L622.8,478.6 L624.7,472.0 L625.1,501.4 L627.0,493.2 L628.7,490.7 L629.9,499.0 L631.6,497.2 L633.0,500.5 L634.8,496.4 L636.5,494.6 L637.9,498.9 L639.3,502.4 L641.1,499.2 L642.3,506.7 L644.4,497.3 L646.0,497.8 L648.3,485.7 L649.0,503.3 L650.3,509.5 L652.7,496.3 L654.3,498.6 L656.1,495.8 L657.6,499.4 L659.2,499.8 L660.8,501.6 L662.0,509.4 L663.2,515.5 L665.0,514.1 L666.9,511.6 L668.6,511.0 L671.3,498.4 L671.7,515.5 L673.2,519.0 L675.3,514.0 L676.9,515.2 L678.3,519.8 L680.2,518.2 L682.1,516.1 L684.0,514.9 L685.0,523.9 L686.3,529.4 L688.8,520.0 L689.4,534.2 L690.6,540.5 L692.8,535.7 L695.7,523.2 L698.1,516.9 L698.9,527.8 L700.2,532.5 L702.6,526.9 L704.1,530.1 L704.9,540.8 L706.2,546.0 L708.4,542.5 L710.1,543.4 L711.3,549.8 L708.5,575.7 L522.3,532.0Z" fill="url(#w15)"/><path d="M518.2,469.3 L519.5,470.4 L520.7,471.7 L522.0,471.9 L523.2,471.4 L524.5,472.9 L525.8,472.1 L526.9,469.8 L528.4,476.3 L529.5,471.3 L530.7,469.8 L531.9,466.6 L533.2,466.5 L534.3,457.8 L535.8,467.8 L537.1,465.8 L538.3,464.0 L540.0,478.1 L541.3,480.1 L542.5,476.5 L543.8,474.6 L545.1,475.7 L546.3,465.1 L547.5,458.2 L549.0,470.6 L550.5,482.2 L551.9,486.4 L553.2,480.5 L554.5,481.9 L555.6,458.5 L557.1,466.4 L558.6,482.6 L560.0,493.5 L561.4,487.8 L562.7,483.5 L564.1,492.2 L565.4,484.7 L566.8,484.3 L568.2,484.2 L569.5,471.1 L571.0,475.7 L572.4,478.5 L573.8,493.0 L575.2,491.7 L576.6,484.9 L578.0,484.2 L579.4,486.4 L580.9,482.5 L582.3,486.4 L583.8,468.8 L585.3,473.0 L586.8,467.3 L588.0,484.8 L589.7,471.9 L590.9,487.9 L592.4,485.6 L594.0,480.7 L595.5,480.1 L596.9,483.5 L598.3,485.8 L599.8,486.7 L601.2,489.0 L602.9,482.5 L604.3,488.6 L605.5,497.6 L607.1,496.1 L608.3,506.8 L609.8,506.8 L611.7,493.3 L613.1,498.6 L614.5,501.6 L616.1,500.5 L617.7,499.7 L619.6,489.2 L621.6,475.8 L622.8,487.1 L624.0,496.3 L625.6,496.1 L627.4,489.0 L628.6,500.2 L629.9,506.7 L631.7,500.6 L633.4,498.6 L635.3,492.9 L636.8,495.6 L638.2,499.7 L639.4,508.8 L641.1,506.4 L642.8,504.9 L644.7,499.8 L646.8,491.0 L647.4,511.7 L649.3,506.8 L651.0,505.2 L653.3,495.6 L654.5,502.5 L655.8,509.2 L657.9,503.0 L659.6,501.5 L660.9,508.3 L662.2,514.6 L664.3,509.0 L664.8,525.6 L667.4,513.3 L669.7,505.0 L670.6,516.5 L671.5,527.2 L673.8,520.4 L675.7,517.6 L677.2,520.4 L678.3,529.0 L681.1,516.3 L683.5,508.4 L685.2,509.6 L686.5,515.6 L687.2,528.2 L688.8,529.9 L689.9,537.9 L691.3,542.0 L692.9,543.9 L696.3,526.0 L698.0,527.7 L699.1,535.3 L699.3,551.9 L702.2,540.6 L702.9,552.4 L705.5,544.4 L706.6,551.9 L709.5,540.8 L710.0,554.0 L707.6,577.1 L520.7,532.9Z" fill="url(#w16)"/><path d="M516.5,470.6 L517.8,471.8 L519.1,472.9 L520.3,473.3 L521.6,474.4 L522.8,473.8 L524.1,473.4 L525.3,473.1 L526.7,476.2 L528.0,477.7 L528.9,465.6 L530.0,460.9 L531.7,471.8 L532.6,458.9 L534.2,471.3 L535.5,469.6 L536.9,475.0 L538.5,487.3 L539.6,478.3 L540.8,475.2 L542.2,477.6 L543.5,476.5 L544.6,464.0 L546.0,470.2 L547.3,467.6 L548.8,476.8 L550.3,487.5 L551.5,477.6 L552.9,479.4 L554.1,465.7 L555.5,470.1 L557.0,483.4 L558.4,490.9 L559.7,485.7 L561.1,485.8 L562.5,486.9 L563.9,488.4 L565.3,490.3 L566.6,480.1 L568.0,473.9 L569.4,463.8 L570.8,483.2 L572.2,492.4 L573.6,497.6 L575.0,496.6 L576.5,490.4 L577.9,482.0 L579.3,486.3 L580.8,486.0 L582.3,477.6 L583.8,471.6 L585.3,467.4 L586.6,481.8 L588.1,475.9 L589.5,485.9 L590.9,485.3 L592.5,482.3 L594.0,476.2 L595.4,485.4 L596.7,493.3 L598.4,486.1 L599.8,489.2 L601.4,486.7 L602.7,494.3 L604.1,497.6 L605.8,490.9 L607.1,501.4 L608.4,507.4 L610.2,498.3 L611.6,501.6 L613.3,496.6 L614.5,508.6 L616.3,499.5 L617.9,499.2 L620.0,482.8 L621.5,486.2 L622.7,496.7 L624.3,495.4 L626.1,490.8 L627.2,503.2 L628.6,507.6 L630.7,495.3 L631.9,505.3 L633.5,505.0 L635.4,498.1 L636.7,503.9 L638.0,510.8 L639.9,506.0 L641.3,510.4 L643.7,495.8 L645.7,489.7 L646.4,507.8 L648.2,504.7 L650.0,502.2 L651.4,506.5 L653.4,501.9 L654.7,508.2 L657.0,497.3 L658.2,506.8 L659.7,509.3 L661.0,515.0 L662.9,512.6 L664.7,511.2 L666.0,517.6 L668.1,511.3 L669.5,517.1 L671.2,516.5 L672.8,519.3 L674.3,522.1 L676.3,519.3 L677.9,521.6 L679.5,523.2 L682.2,511.7 L684.0,510.9 L685.2,519.2 L685.3,538.4 L687.9,528.5 L688.3,545.0 L690.3,542.7 L692.3,540.5 L696.1,518.5 L696.9,529.8 L697.9,538.0 L699.5,540.2 L700.4,549.5 L701.8,554.2 L704.5,545.5 L706.5,544.1 L707.5,552.2 L710.2,544.5 L706.6,578.4 L519.0,533.8Z" fill="url(#w17)"/><path d="M514.8,471.9 L516.1,473.1 L517.4,474.1 L518.6,474.5 L519.9,476.2 L521.1,473.2 L522.3,472.4 L523.6,473.8 L525.0,477.3 L526.2,475.1 L527.2,466.1 L528.5,466.0 L529.9,470.0 L531.0,464.0 L532.4,467.5 L533.6,464.1 L535.1,471.2 L536.6,479.4 L538.1,484.0 L539.3,482.9 L540.6,479.3 L541.9,478.2 L543.1,471.9 L544.4,470.8 L545.8,474.7 L547.5,494.1 L548.7,488.8 L550.1,493.8 L551.4,486.7 L552.5,469.9 L553.7,462.9 L555.5,491.2 L556.9,492.9 L558.1,483.1 L559.5,486.1 L560.9,489.2 L562.3,493.8 L563.7,488.0 L565.1,489.1 L566.4,476.0 L567.8,473.8 L569.2,478.9 L570.7,494.5 L572.1,492.9 L573.5,495.6 L574.9,487.0 L576.4,484.8 L577.8,487.1 L579.2,485.4 L580.7,477.8 L582.2,472.8 L583.7,471.8 L585.0,487.8 L586.6,477.6 L588.0,485.9 L589.4,487.1 L590.9,487.1 L592.5,483.3 L593.9,484.8 L595.3,492.0 L596.9,489.2 L598.4,488.9 L600.0,484.6 L601.2,496.2 L602.7,496.5 L604.3,493.5 L605.7,500.9 L607.2,501.0 L608.9,494.7 L610.3,498.6 L611.7,504.4 L613.3,501.7 L614.9,500.3 L616.3,504.7 L618.4,488.5 L620.1,485.7 L621.2,499.7 L622.5,508.7 L624.5,495.8 L625.9,502.3 L627.7,496.0 L629.0,503.2 L630.8,499.5 L632.3,502.6 L634.0,500.2 L635.4,505.5 L636.9,509.2 L638.6,507.0 L640.6,500.3 L642.2,501.5 L644.3,491.5 L645.4,502.6 L646.5,513.6 L648.6,506.1 L650.5,502.1 L652.1,503.3 L653.6,506.6 L655.6,501.5 L656.9,507.9 L658.2,514.7 L659.9,514.9 L661.8,511.7 L663.3,515.5 L665.3,510.7 L667.7,501.4 L668.1,520.7 L670.4,513.8 L671.9,516.4 L673.0,525.0 L673.9,536.4 L676.1,530.4 L679.0,516.6 L679.6,531.4 L682.8,513.5 L683.0,532.3 L685.0,530.4 L685.8,541.4 L687.4,543.8 L689.3,543.3 L690.6,548.8 L693.8,533.0 L694.8,542.0 L697.1,536.6 L697.5,552.1 L700.9,536.1 L702.3,539.9 L702.2,560.2 L704.0,560.2 L706.0,559.0 L708.2,555.5 L705.7,579.7 L517.4,534.7Z" fill="url(#w18)"/><path d="M513.1,473.1 L514.4,474.5 L515.6,475.4 L516.9,476.3 L518.2,477.2 L519.5,477.4 L520.7,476.2 L522.0,477.7 L523.1,473.5 L524.5,476.2 L525.5,468.4 L526.7,464.0 L528.4,476.9 L529.5,471.2 L530.9,475.2 L532.1,470.5 L533.5,474.9 L534.9,477.3 L536.4,483.8 L537.7,482.9 L538.9,481.1 L540.1,474.9 L541.4,471.7 L542.5,462.7 L544.1,475.2 L545.6,482.5 L547.1,487.9 L548.2,478.5 L549.7,483.2 L550.8,468.1 L552.2,471.3 L553.9,492.0 L555.2,492.5 L556.6,488.3 L558.0,492.4 L559.3,488.0 L560.7,490.7 L562.1,487.5 L563.4,477.8 L564.8,476.0 L566.2,472.5 L567.6,478.5 L569.1,493.5 L570.5,495.5 L571.9,487.7 L573.4,482.5 L574.8,494.4 L576.2,492.1 L577.7,491.4 L579.2,482.0 L580.7,470.5 L582.1,473.5 L583.5,484.8 L585.1,476.8 L586.5,487.1 L587.9,488.6 L589.4,486.3 L590.9,487.0 L592.4,487.4 L593.8,493.5 L595.4,489.4 L596.9,487.3 L598.4,488.0 L599.8,494.7 L601.4,490.8 L603.0,490.4 L604.3,497.3 L605.6,507.5 L607.5,493.2 L608.9,499.8 L610.3,504.8 L611.9,503.4 L613.4,504.3 L615.0,502.9 L617.0,491.9 L618.6,491.4 L619.8,501.4 L621.0,512.6 L623.2,495.3 L624.6,500.7 L626.2,501.9 L627.6,505.8 L629.2,506.4 L630.9,504.3 L632.7,501.1 L634.2,504.6 L635.6,509.5 L636.9,516.5 L638.8,511.2 L640.6,507.0 L642.9,494.3 L643.8,510.2 L645.3,512.5 L647.2,509.7 L648.9,509.2 L650.5,509.5 L652.3,508.8 L653.9,510.0 L655.4,513.7 L656.6,522.4 L658.4,520.2 L660.3,517.7 L661.3,528.1 L663.6,519.1 L665.4,518.9 L667.7,511.1 L668.4,525.8 L670.3,523.1 L671.2,535.7 L673.9,522.3 L675.3,527.2 L677.2,525.7 L679.7,516.7 L680.9,524.6 L682.0,532.7 L684.3,526.2 L684.8,542.6 L686.8,540.0 L687.7,549.5 L689.5,550.3 L693.6,525.0 L694.1,539.2 L696.1,537.4 L697.5,542.5 L698.6,550.6 L700.5,549.9 L701.5,557.9 L703.4,557.8 L705.5,555.5 L705.5,573.6 L704.7,581.1 L515.7,535.6Z" fill="url(#w19)"/><path d="M511.3,474.4 L512.6,475.8 L513.9,477.0 L515.2,478.3 L516.4,476.5 L517.7,477.1 L519.0,478.1 L520.2,476.4 L521.8,484.0 L522.9,479.1 L523.9,471.7 L524.9,462.8 L526.6,476.7 L527.6,466.6 L529.2,475.3 L530.3,468.0 L531.8,477.1 L533.5,487.3 L534.7,485.5 L535.9,481.1 L537.2,481.1 L538.7,485.6 L539.7,472.9 L541.1,476.6 L542.4,475.1 L544.1,491.4 L545.5,492.4 L546.8,490.7 L548.0,480.4 L549.1,466.7 L550.7,479.3 L552.2,491.3 L553.6,494.9 L555.0,495.0 L556.3,491.5 L557.7,493.1 L559.1,489.4 L560.5,492.5 L561.8,484.0 L563.2,482.0 L564.6,479.0 L566.1,488.2 L567.5,496.9 L569.0,496.7 L570.4,486.0 L571.8,487.0 L573.2,490.1 L574.7,490.9 L576.1,493.7 L577.6,478.0 L579.1,482.1 L580.6,477.1 L582.0,481.5 L583.5,481.9 L584.9,495.5 L586.5,480.8 L587.8,494.1 L589.4,487.3 L590.8,495.7 L592.3,492.2 L593.9,488.1 L595.5,484.9 L597.0,487.3 L598.4,494.1 L599.8,497.3 L601.4,494.6 L602.8,500.2 L604.3,501.5 L605.8,505.4 L607.5,500.4 L608.8,508.7 L610.4,508.1 L611.9,510.4 L613.5,507.4 L615.8,485.1 L617.2,489.8 L618.2,509.2 L620.1,500.9 L621.4,507.3 L623.1,504.8 L624.5,509.3 L626.3,504.7 L628.1,500.4 L629.5,506.7 L631.1,506.8 L632.5,513.6 L634.4,507.3 L636.0,508.8 L637.9,502.0 L639.5,503.7 L641.5,498.5 L642.2,516.7 L643.8,518.6 L646.0,508.3 L647.9,504.6 L649.6,504.4 L650.9,511.3 L652.8,509.3 L654.3,512.4 L656.0,512.1 L657.6,515.1 L659.2,516.0 L660.4,524.5 L662.4,521.4 L664.2,519.3 L666.6,511.0 L667.3,525.5 L669.1,525.0 L670.6,528.5 L672.1,532.2 L674.4,525.0 L676.0,527.9 L677.9,525.7 L680.0,522.9 L681.1,531.7 L682.4,537.7 L684.2,537.0 L685.4,544.3 L686.5,552.9 L687.8,558.3 L690.9,544.5 L692.8,543.2 L695.1,538.0 L695.4,554.8 L697.5,552.6 L698.4,562.3 L701.2,552.1 L703.8,545.4 L703.5,566.3 L705.8,562.2 L703.7,582.5 L514.1,536.5Z" fill="url(#w20)"/><path d="M509.6,475.6 L510.9,477.1 L512.2,478.6 L513.5,479.0 L514.7,478.8 L516.0,479.8 L517.2,478.6 L518.4,476.9 L519.9,482.6 L520.8,472.3 L522.3,476.5 L523.2,466.8 L524.8,474.5 L526.0,471.4 L527.6,479.5 L528.9,479.8 L530.2,481.7 L531.5,480.2 L533.1,489.9 L534.2,482.1 L535.6,485.6 L536.8,481.5 L538.2,481.1 L539.2,468.7 L540.8,478.6 L542.2,482.0 L543.8,493.4 L545.1,491.7 L546.4,489.8 L547.5,471.5 L548.9,476.0 L550.5,488.0 L552.0,497.8 L553.4,498.0 L554.6,487.4 L556.1,489.4 L557.5,494.9 L558.8,488.1 L560.3,495.5 L561.6,480.3 L563.0,482.5 L564.5,486.1 L565.9,498.4 L567.4,498.3 L568.8,497.2 L570.2,493.6 L571.6,493.5 L573.1,492.3 L574.5,489.4 L576.0,483.7 L577.5,482.2 L579.0,476.4 L580.4,485.7 L582.0,474.1 L583.3,498.7 L584.8,491.4 L586.3,496.9 L587.9,487.5 L589.3,495.4 L590.8,494.1 L592.3,496.1 L593.9,493.2 L595.4,489.8 L596.9,495.1 L598.4,495.4 L599.9,499.2 L601.2,511.3 L602.8,505.8 L604.5,500.7 L605.9,506.4 L607.3,511.3 L608.7,515.9 L610.5,508.5 L612.4,499.0 L614.0,497.9 L615.8,490.2 L616.7,511.0 L618.5,504.9 L620.3,500.8 L621.6,509.2 L623.2,508.0 L624.7,511.4 L626.7,503.8 L627.9,513.6 L629.7,508.3 L631.1,516.0 L633.1,506.4 L634.4,515.2 L636.3,509.8 L638.1,507.1 L640.2,497.3 L641.2,511.2 L642.3,523.3 L644.8,507.5 L646.5,507.7 L648.2,508.3 L648.9,526.1 L651.9,502.6 L653.1,512.3 L654.4,518.4 L655.8,523.8 L658.0,517.0 L658.5,536.5 L660.8,526.7 L662.8,523.7 L664.4,525.8 L666.7,518.3 L667.5,532.1 L669.4,530.3 L670.7,537.0 L673.2,526.2 L674.8,528.8 L677.1,523.3 L679.2,519.1 L678.7,548.3 L680.3,549.8 L682.3,547.7 L684.2,546.5 L685.5,552.3 L688.1,543.4 L690.2,540.9 L690.7,555.8 L693.1,549.3 L694.0,559.7 L695.4,564.3 L697.7,559.3 L699.3,562.0 L701.9,555.2 L702.0,573.2 L703.5,576.5 L702.7,583.9 L512.4,537.4Z" fill="url(#w21)"/><path d="M507.8,476.9 L509.1,478.4 L510.4,479.8 L511.7,480.6 L513.0,482.0 L514.3,482.9 L515.5,479.6 L516.8,480.3 L518.1,482.1 L519.1,473.2 L520.3,471.8 L521.6,472.5 L523.2,479.3 L524.2,470.9 L525.8,480.3 L527.1,478.8 L528.5,482.4 L529.7,479.6 L531.2,483.5 L532.5,482.1 L533.9,487.5 L535.1,482.9 L536.6,487.4 L537.6,473.1 L539.0,476.1 L540.7,491.1 L542.2,497.1 L543.5,495.6 L544.7,485.5 L545.9,479.9 L547.2,474.8 L549.0,495.7 L550.4,501.1 L551.5,484.3 L553.1,497.2 L554.4,491.6 L555.8,490.7 L557.2,493.1 L558.6,489.5 L560.0,483.2 L561.3,476.6 L562.8,488.1 L564.3,496.1 L565.7,494.0 L567.2,501.0 L568.6,496.9 L570.0,493.5 L571.5,494.7 L573.0,489.9 L574.4,482.8 L575.9,481.0 L577.4,473.2 L578.9,483.9 L580.4,471.6 L581.8,490.7 L583.3,492.8 L584.9,484.0 L586.3,491.3 L587.8,491.4 L589.2,497.5 L590.7,498.9 L592.4,490.6 L593.8,496.9 L595.3,500.9 L596.8,501.5 L598.4,497.9 L599.9,500.6 L601.4,501.9 L602.8,511.7 L604.4,509.1 L606.0,506.0 L607.5,510.8 L609.1,509.0 L611.0,498.2 L612.7,494.7 L614.1,499.4 L615.5,507.3 L616.9,512.9 L618.9,502.0 L620.6,499.6 L622.0,505.4 L623.6,504.5 L625.1,508.8 L626.5,513.8 L628.3,510.8 L629.7,515.6 L631.6,510.3 L633.3,509.5 L634.8,514.4 L636.6,511.4 L638.5,505.6 L639.8,514.4 L641.0,523.0 L642.9,519.7 L645.2,508.1 L646.6,515.0 L648.4,512.1 L650.2,510.5 L651.5,518.9 L652.9,523.7 L655.0,518.1 L656.2,526.7 L657.8,529.0 L659.8,524.8 L662.2,515.6 L662.7,534.7 L665.1,525.1 L667.3,518.2 L669.2,517.9 L670.4,525.3 L672.1,527.2 L673.1,536.8 L675.6,527.7 L676.9,534.9 L678.4,539.0 L680.5,535.9 L681.2,549.1 L682.9,550.6 L686.0,535.3 L687.1,543.8 L688.1,553.3 L689.9,553.9 L691.3,558.8 L693.7,553.3 L694.4,564.8 L696.7,560.4 L698.5,561.2 L700.7,558.5 L702.0,563.8 L703.8,565.2 L701.7,585.3 L510.7,538.4Z" fill="url(#w22)"/><path d="M506.0,478.1 L507.3,479.7 L508.6,480.9 L509.9,481.7 L511.2,482.6 L512.6,484.5 L513.7,481.2 L514.9,479.8 L516.3,481.8 L517.5,478.5 L518.8,478.9 L520.0,477.3 L521.6,485.4 L522.5,474.5 L524.1,481.4 L525.4,480.8 L526.7,481.9 L528.2,485.8 L529.5,485.7 L530.9,490.0 L532.2,487.9 L533.8,495.6 L534.7,480.6 L536.1,482.2 L537.3,479.5 L539.2,498.2 L540.3,488.8 L541.7,490.9 L543.0,490.1 L544.3,484.3 L545.6,481.9 L547.3,496.0 L548.6,493.9 L550.0,493.8 L551.3,491.9 L552.8,497.1 L554.2,497.2 L555.7,501.0 L557.1,499.9 L558.3,486.3 L559.8,488.3 L561.2,489.2 L562.7,500.3 L564.2,504.0 L565.6,499.7 L567.0,501.9 L568.4,497.4 L569.9,495.4 L571.3,496.3 L572.8,488.4 L574.3,492.0 L575.8,475.4 L577.3,481.5 L578.8,481.8 L580.2,497.6 L581.7,493.0 L583.2,493.8 L584.7,498.5 L586.2,498.9 L587.7,495.0 L589.2,503.1 L590.8,498.2 L592.2,501.7 L593.8,501.4 L595.3,503.6 L596.8,503.0 L598.3,504.3 L600.2,491.9 L601.4,506.4 L602.8,512.2 L604.6,504.1 L606.0,511.2 L607.5,515.3 L609.2,509.0 L611.1,498.3 L612.8,496.6 L614.0,508.8 L615.5,512.5 L617.6,498.1 L618.9,507.8 L620.4,511.9 L622.3,504.4 L623.9,504.5 L625.4,507.5 L627.3,503.4 L628.5,513.9 L630.1,515.5 L632.0,509.1 L633.4,516.5 L635.3,511.0 L636.9,512.3 L638.1,522.2 L639.5,527.6 L641.6,520.6 L644.0,507.7 L645.3,514.4 L646.4,526.4 L648.6,517.4 L650.4,516.6 L651.7,523.4 L653.1,528.8 L654.6,532.7 L657.3,518.5 L658.2,531.2 L660.5,522.8 L662.0,528.0 L663.3,533.6 L665.9,522.1 L666.8,534.4 L668.6,534.5 L670.3,536.4 L671.8,540.2 L674.0,534.9 L675.4,540.9 L677.2,540.3 L679.0,541.0 L681.1,537.2 L681.1,559.0 L684.7,538.6 L686.5,539.6 L687.5,549.5 L689.2,550.8 L691.4,546.7 L691.7,564.3 L695.0,549.1 L694.7,571.8 L697.7,560.1 L699.2,563.9 L700.2,573.3 L701.9,574.6 L700.7,586.7 L509.0,539.3Z" fill="url(#w23)"/><path d="M504.2,479.3 L505.5,481.0 L506.9,482.6 L508.2,483.4 L509.4,482.7 L510.7,484.2 L512.0,482.7 L513.2,482.5 L514.5,482.3 L515.3,471.4 L516.9,478.7 L518.1,474.9 L519.9,489.0 L521.1,484.8 L522.4,486.4 L523.7,483.5 L525.1,486.0 L526.2,480.9 L527.9,490.7 L528.9,482.9 L530.5,489.5 L531.8,489.2 L533.0,483.7 L534.1,475.3 L535.8,489.1 L537.2,490.0 L538.8,498.1 L539.9,489.8 L541.5,497.9 L542.7,489.0 L543.9,484.1 L545.5,491.6 L547.0,497.1 L548.3,493.1 L549.7,495.2 L551.1,493.1 L552.5,497.9 L553.9,497.7 L555.3,494.4 L556.7,488.7 L558.1,489.6 L559.6,492.0 L561.1,507.5 L562.6,510.6 L564.0,503.9 L565.4,497.4 L566.8,502.4 L568.2,490.2 L569.7,501.4 L571.2,490.3 L572.7,482.5 L574.2,482.4 L575.7,480.7 L577.2,485.3 L578.6,503.9 L580.1,492.7 L581.6,495.2 L583.2,489.6 L584.6,496.4 L586.1,502.0 L587.7,495.3 L589.1,508.3 L590.7,502.2 L592.1,509.7 L593.8,498.9 L595.3,505.0 L597.1,491.9 L598.7,490.0 L599.9,506.6 L601.4,508.8 L603.0,508.2 L604.4,515.3 L606.1,513.3 L607.7,510.8 L609.2,513.1 L610.8,513.5 L612.4,514.1 L614.0,515.3 L615.7,512.7 L617.8,499.0 L619.2,504.6 L620.7,508.7 L622.3,510.8 L623.8,513.0 L625.3,517.0 L626.7,525.6 L628.7,517.2 L630.5,513.2 L632.2,511.8 L633.6,518.7 L635.4,515.9 L636.9,520.5 L638.1,530.6 L640.0,527.4 L642.4,512.8 L644.0,514.9 L645.4,521.9 L647.5,514.5 L649.2,516.3 L651.2,511.0 L651.9,528.6 L653.4,532.8 L655.8,523.2 L657.0,532.2 L659.0,528.2 L661.2,521.9 L661.9,537.7 L664.4,527.9 L665.7,534.4 L667.6,532.6 L669.5,531.9 L671.2,533.4 L673.0,533.3 L674.1,542.4 L675.7,545.7 L678.1,538.7 L679.1,548.5 L680.5,553.8 L682.3,554.2 L684.4,551.6 L685.8,556.8 L688.8,544.6 L691.2,538.4 L691.5,555.4 L692.3,567.0 L695.2,556.6 L695.2,576.3 L698.5,562.0 L699.6,570.0 L702.1,564.0 L699.7,588.2 L507.2,540.3Z" fill="url(#w24)"/><path d="M502.4,480.5 L503.7,482.3 L505.0,483.6 L506.4,484.6 L507.6,483.3 L509.0,486.4 L510.2,484.4 L511.3,481.2 L512.7,484.6 L513.6,474.5 L515.2,482.1 L516.4,480.1 L517.9,484.2 L519.1,481.2 L520.7,489.4 L521.9,486.5 L523.1,482.4 L524.4,481.8 L525.9,485.4 L527.1,481.8 L528.8,491.9 L529.8,483.6 L531.4,490.5 L532.5,481.7 L534.0,487.9 L535.5,490.3 L537.0,495.9 L538.3,494.0 L539.7,495.2 L541.0,491.1 L542.2,485.8 L543.8,495.4 L545.2,494.4 L546.6,495.2 L548.0,494.4 L549.5,504.4 L550.8,498.0 L552.2,496.4 L553.6,492.7 L555.0,492.4 L556.5,494.9 L557.9,497.5 L559.4,504.6 L560.9,512.1 L562.3,502.2 L563.7,492.3 L565.2,502.9 L566.6,501.9 L568.1,501.3 L569.6,498.1 L571.0,483.1 L572.5,484.2 L574.0,478.5 L575.5,487.4 L577.0,507.6 L578.5,498.6 L580.0,503.1 L581.5,509.4 L583.0,506.5 L584.6,496.5 L586.1,501.8 L587.5,514.9 L589.2,500.1 L590.7,499.2 L592.2,501.5 L593.9,495.1 L595.3,506.2 L597.1,490.3 L598.5,503.2 L599.7,521.0 L601.5,510.4 L603.0,514.7 L604.5,517.1 L606.4,506.8 L608.0,505.6 L609.4,513.5 L610.9,516.8 L612.4,522.2 L614.6,503.3 L615.8,514.4 L617.8,504.8 L619.0,516.6 L621.0,507.8 L622.4,513.5 L624.0,516.1 L625.6,518.5 L627.2,519.0 L629.4,507.5 L631.0,508.5 L632.7,509.5 L633.7,525.4 L635.5,521.8 L637.2,522.2 L638.8,525.3 L641.3,508.5 L642.8,514.4 L644.4,516.9 L645.8,522.0 L647.4,524.4 L648.7,532.6 L650.8,526.8 L652.5,528.3 L654.6,522.2 L655.5,535.8 L657.9,527.0 L659.1,535.1 L661.8,521.4 L663.1,528.9 L664.7,532.0 L667.0,525.3 L667.6,542.2 L669.9,535.6 L671.4,539.9 L673.4,538.2 L674.9,542.0 L676.8,541.7 L677.2,559.8 L679.6,553.1 L681.3,554.2 L683.3,553.0 L684.4,561.7 L687.0,553.5 L688.6,556.5 L691.0,551.0 L690.5,576.5 L692.6,574.7 L694.9,570.3 L696.7,570.7 L697.2,585.4 L699.3,582.6 L698.6,589.6 L505.5,541.2Z" fill="url(#w25)"/><path d="M500.5,481.7 L501.9,483.5 L503.2,485.1 L504.5,485.9 L505.7,484.5 L507.1,486.0 L508.3,484.7 L509.6,485.5 L510.8,482.8 L511.7,474.2 L513.1,476.0 L514.7,483.7 L516.4,492.6 L517.4,485.9 L518.8,486.5 L520.2,489.6 L521.6,491.1 L522.8,487.1 L524.0,483.3 L525.4,486.3 L526.8,486.5 L528.2,490.4 L529.6,490.4 L530.8,486.1 L532.3,489.3 L533.7,490.7 L535.2,496.4 L536.6,497.2 L538.0,497.7 L539.2,492.8 L540.4,484.4 L542.0,494.1 L543.5,496.6 L544.9,498.2 L546.2,493.5 L547.6,491.6 L549.1,497.5 L550.6,502.7 L552.1,507.4 L553.4,497.0 L554.7,492.7 L556.2,491.3 L557.7,503.3 L559.2,510.7 L560.6,499.0 L562.0,497.9 L563.5,503.3 L565.0,504.9 L566.4,497.5 L567.9,497.9 L569.4,487.5 L570.9,479.7 L572.4,480.6 L573.9,486.9 L575.4,502.2 L576.9,502.9 L578.4,501.2 L579.9,508.8 L581.4,507.6 L583.0,500.5 L584.5,504.8 L586.0,505.1 L587.5,507.3 L589.2,493.0 L590.6,510.0 L592.2,507.5 L593.8,500.9 L595.5,494.0 L596.9,506.2 L598.4,509.6 L599.9,517.1 L601.6,509.1 L603.0,519.8 L604.7,514.6 L606.3,515.7 L607.8,518.3 L609.3,522.2 L610.9,522.3 L612.8,514.8 L614.8,503.1 L616.4,502.5 L617.8,510.1 L619.3,516.8 L620.8,519.2 L622.7,514.0 L624.2,517.7 L625.7,523.6 L627.8,512.1 L629.4,514.4 L630.8,520.7 L632.4,524.0 L634.2,522.5 L635.2,535.7 L637.7,519.4 L639.7,514.8 L641.1,520.7 L643.0,518.3 L645.1,512.1 L646.7,514.1 L647.9,525.0 L648.9,538.6 L650.7,537.3 L653.4,522.5 L654.0,541.3 L656.0,537.2 L657.9,536.1 L659.4,539.6 L661.6,534.8 L663.4,533.5 L664.7,541.5 L667.6,526.0 L668.0,546.3 L670.6,536.1 L672.0,541.2 L674.2,536.9 L675.3,546.7 L675.7,564.4 L677.7,563.1 L680.8,548.0 L681.6,560.8 L684.6,547.0 L684.4,571.6 L687.6,556.5 L688.5,567.2 L690.7,563.4 L692.7,562.3 L692.5,585.3 L695.2,576.6 L697.7,570.9 L699.1,575.3 L697.6,591.1 L503.7,542.2Z" fill="url(#w26)"/><path d="M498.7,482.9 L500.0,484.8 L501.4,486.5 L502.7,487.5 L504.0,487.0 L505.2,487.1 L506.5,486.3 L508.0,490.1 L509.2,488.3 L509.8,472.8 L511.4,479.9 L512.9,483.6 L514.7,496.4 L516.0,496.8 L516.9,484.7 L518.4,489.5 L519.6,487.8 L520.8,484.4 L522.3,488.5 L523.3,479.6 L525.2,493.5 L526.5,494.1 L528.0,497.6 L529.0,486.7 L530.6,493.2 L532.3,503.8 L533.6,503.4 L534.8,497.6 L536.3,502.2 L537.5,497.0 L539.1,501.8 L540.4,499.4 L542.0,508.3 L543.2,502.8 L544.6,500.0 L545.8,489.8 L547.4,500.3 L548.9,505.3 L550.3,502.5 L551.6,492.7 L553.0,492.6 L554.5,495.4 L556.0,499.8 L557.5,507.3 L559.0,507.7 L560.3,497.9 L561.8,499.7 L563.3,507.4 L564.8,505.6 L566.2,497.5 L567.7,492.3 L569.2,478.9 L570.7,478.5 L572.2,490.3 L573.7,501.8 L575.2,499.2 L576.8,502.3 L578.3,498.7 L579.8,510.7 L581.3,508.4 L582.9,501.4 L584.4,509.9 L585.9,509.7 L587.6,498.4 L589.1,506.5 L590.5,519.2 L592.4,492.6 L594.1,487.4 L595.3,512.2 L596.8,515.8 L598.4,516.3 L599.9,519.1 L601.6,512.1 L603.0,522.0 L604.8,513.7 L606.3,517.5 L607.9,518.2 L609.5,518.6 L611.1,521.9 L613.0,513.1 L615.1,498.6 L616.2,514.7 L617.9,514.2 L619.6,514.1 L621.0,521.0 L622.3,532.1 L624.3,523.5 L626.4,513.0 L627.9,518.2 L629.0,532.4 L631.4,516.1 L632.5,529.2 L634.3,527.4 L635.3,542.9 L638.2,517.6 L639.8,520.9 L641.6,519.5 L643.1,524.6 L645.3,515.9 L646.8,521.4 L647.5,540.1 L649.3,540.3 L651.2,538.0 L652.7,543.1 L655.0,534.1 L656.3,541.1 L658.6,534.3 L660.4,534.1 L662.3,532.8 L663.3,544.7 L665.7,536.2 L667.3,539.9 L669.2,539.9 L670.1,551.7 L672.7,541.7 L674.6,541.5 L675.7,551.7 L677.1,556.4 L679.9,546.1 L680.7,559.1 L682.6,558.3 L684.7,555.9 L685.7,566.0 L687.4,568.1 L689.2,569.6 L691.1,569.3 L693.4,565.1 L695.2,566.5 L695.3,585.8 L698.0,577.5 L696.5,592.6 L501.9,543.2Z" fill="url(#w27)"/><path d="M496.8,484.1 L498.2,486.1 L499.5,487.5 L500.9,488.7 L502.2,489.3 L503.7,493.5 L504.6,487.5 L505.9,487.6 L507.2,486.8 L508.1,478.8 L509.7,484.8 L511.0,484.2 L513.0,499.4 L513.9,491.1 L515.5,497.5 L516.7,494.3 L518.2,498.2 L519.1,487.2 L520.3,484.3 L522.0,493.1 L523.2,489.2 L524.8,496.7 L526.2,497.7 L527.1,485.5 L528.9,498.8 L530.3,498.5 L531.8,502.9 L533.1,502.2 L534.7,508.1 L535.8,500.7 L537.0,493.5 L538.7,502.3 L540.2,506.7 L541.4,498.1 L542.8,500.7 L544.2,498.6 L545.6,499.9 L547.2,505.8 L548.5,498.3 L549.8,494.4 L551.3,497.7 L552.7,495.7 L554.3,501.0 L555.7,502.6 L557.3,508.4 L558.8,511.5 L560.1,502.2 L561.6,507.5 L563.1,504.9 L564.6,502.8 L566.0,491.1 L567.5,483.2 L569.0,484.9 L570.5,491.3 L572.1,511.4 L573.6,502.2 L575.1,508.3 L576.6,510.2 L578.1,516.2 L579.7,498.1 L581.2,511.8 L582.8,507.2 L584.4,498.5 L585.9,504.7 L587.5,500.6 L589.0,509.9 L590.7,500.4 L592.6,478.6 L593.6,515.9 L595.2,516.4 L596.8,519.4 L598.5,513.5 L600.1,513.2 L601.6,516.4 L603.2,517.7 L604.9,514.1 L606.2,527.9 L608.1,518.5 L609.8,515.3 L611.5,513.8 L613.4,505.3 L614.7,517.4 L616.5,513.7 L618.0,518.9 L619.4,525.1 L621.0,529.1 L622.7,527.0 L624.7,520.3 L626.7,513.6 L628.1,520.2 L629.8,521.4 L631.1,529.6 L632.9,527.8 L634.6,529.1 L636.7,521.2 L638.7,515.5 L639.6,532.5 L642.0,520.8 L644.1,514.7 L645.4,522.9 L646.8,530.6 L648.4,533.4 L649.9,538.3 L650.9,550.8 L653.3,541.8 L655.3,537.6 L657.4,534.3 L659.5,529.7 L660.3,545.2 L662.7,536.6 L663.7,548.1 L665.7,545.7 L667.3,549.3 L669.6,543.7 L670.7,554.0 L672.5,554.0 L674.4,553.9 L675.6,562.5 L679.1,542.3 L679.5,560.3 L681.4,560.7 L683.5,557.5 L684.8,564.9 L686.2,569.9 L688.8,563.2 L690.3,567.6 L691.3,576.9 L694.5,564.1 L694.7,582.0 L698.0,568.3 L695.4,594.1 L500.1,544.2Z" fill="url(#w28)"/><path d="M494.9,485.3 L496.3,487.3 L497.7,489.2 L498.9,489.4 L500.4,492.3 L501.8,494.3 L502.7,487.6 L504.2,491.4 L505.2,486.2 L505.9,472.9 L508.0,488.8 L508.9,480.1 L511.3,503.8 L512.1,492.8 L513.4,493.7 L515.1,501.4 L515.7,483.6 L517.5,495.2 L518.9,497.4 L519.7,483.3 L521.6,497.3 L523.0,497.3 L524.4,499.9 L525.5,493.0 L527.1,499.1 L528.6,503.0 L529.9,502.2 L531.3,501.5 L532.8,506.4 L534.0,498.6 L535.4,498.1 L536.8,501.1 L538.3,502.6 L539.8,508.9 L540.9,493.3 L542.5,503.4 L543.8,498.0 L545.3,502.1 L546.8,504.3 L548.2,499.5 L549.6,500.0 L550.9,491.7 L552.6,508.4 L554.1,511.0 L555.5,508.8 L556.9,502.6 L558.4,506.8 L560.0,510.1 L561.4,501.8 L562.8,498.3 L564.3,492.2 L565.8,488.5 L567.3,484.2 L568.9,494.3 L570.4,506.4 L571.9,504.1 L573.4,511.7 L575.0,515.2 L576.5,511.1 L578.1,504.3 L579.6,505.9 L581.1,514.8 L582.7,504.3 L584.3,507.6 L585.8,511.6 L587.4,507.4 L589.1,503.4 L590.9,483.5 L592.1,515.3 L593.7,514.8 L595.2,518.2 L596.9,512.5 L598.4,519.2 L599.9,526.3 L601.8,512.4 L603.4,515.2 L604.8,524.9 L606.4,523.2 L608.1,524.3 L609.8,520.1 L611.8,509.6 L612.9,527.3 L614.8,521.4 L616.4,522.2 L618.1,523.3 L619.8,521.9 L621.5,521.3 L623.5,514.9 L624.8,524.6 L626.6,521.6 L627.6,540.2 L629.3,539.1 L630.9,543.6 L633.1,531.0 L634.8,533.8 L637.2,520.0 L638.9,521.4 L640.4,525.2 L641.6,536.2 L643.7,530.7 L645.0,539.4 L646.9,537.1 L648.4,542.3 L649.7,550.7 L652.4,535.2 L654.0,539.5 L655.8,539.2 L658.0,533.8 L659.8,534.6 L661.5,535.8 L663.7,532.0 L663.8,556.9 L666.1,549.6 L667.1,561.9 L669.5,554.2 L672.7,536.2 L673.1,556.1 L674.8,558.9 L676.7,557.8 L678.2,562.9 L680.4,559.6 L682.1,561.7 L683.6,566.3 L686.6,553.8 L685.7,585.7 L689.2,568.5 L689.1,590.4 L692.9,569.8 L693.9,580.0 L694.9,590.1 L694.4,595.7 L498.3,545.2Z" fill="url(#w29)"/><path d="M493.0,486.5 L494.4,488.6 L495.8,490.4 L497.1,492.4 L498.3,490.8 L499.7,492.8 L501.0,492.0 L502.2,491.4 L503.3,486.2 L503.9,471.5 L505.9,486.3 L507.1,484.4 L509.6,508.2 L510.4,498.5 L511.6,494.5 L513.0,496.9 L514.3,495.4 L515.4,490.5 L516.6,487.8 L517.8,482.4 L519.9,501.7 L521.1,498.7 L522.6,502.9 L523.5,488.8 L525.2,498.4 L526.7,502.2 L528.1,502.1 L529.6,506.8 L531.1,510.9 L532.5,511.9 L533.5,497.4 L535.2,508.2 L536.4,502.3 L537.8,501.8 L539.3,504.0 L540.6,497.3 L542.3,510.0 L543.5,500.2 L545.0,504.1 L546.3,496.0 L547.6,489.4 L549.2,494.9 L550.8,507.0 L552.4,512.8 L553.8,507.3 L555.1,500.0 L556.7,507.4 L558.2,503.6 L559.6,500.1 L561.2,508.3 L562.6,492.9 L564.0,486.6 L565.5,478.3 L567.1,493.5 L568.7,504.7 L570.2,501.4 L571.8,512.7 L573.3,519.8 L574.8,513.5 L576.4,501.5 L577.9,507.7 L579.5,505.6 L581.0,513.6 L582.6,506.5 L584.2,506.0 L585.9,502.3 L587.5,498.7 L589.4,477.8 L590.6,506.1 L591.9,529.1 L593.6,523.1 L595.3,518.1 L596.8,520.2 L598.5,518.5 L600.1,519.4 L601.5,528.8 L603.1,530.5 L604.8,529.7 L606.2,539.5 L608.2,523.2 L610.3,508.5 L611.5,525.1 L613.0,530.8 L614.8,526.5 L616.4,530.1 L617.9,534.3 L620.1,521.2 L622.0,515.2 L623.0,534.0 L625.0,526.7 L626.8,525.4 L628.6,524.6 L629.9,534.2 L631.4,540.2 L634.1,518.3 L635.9,517.9 L637.0,530.8 L639.2,523.3 L640.6,531.5 L642.4,530.5 L643.2,548.4 L645.4,540.8 L648.0,527.1 L648.2,554.6 L650.5,545.7 L652.5,542.6 L655.0,532.8 L656.0,546.1 L657.8,546.5 L659.5,547.7 L661.4,546.8 L662.4,559.5 L665.1,547.1 L666.9,548.9 L669.0,545.5 L670.2,555.2 L671.1,567.0 L672.7,570.8 L675.5,558.9 L676.2,574.3 L678.4,570.9 L680.7,566.2 L682.1,571.6 L683.7,575.7 L685.1,580.8 L688.4,566.3 L689.2,578.6 L691.4,575.2 L695.3,555.1 L694.0,589.3 L693.3,597.2 L496.5,546.2Z" fill="url(#w30)"/><path d="M491.0,487.7 L492.4,489.8 L493.8,491.9 L495.2,492.5 L496.5,493.5 L497.9,496.2 L498.9,490.5 L500.4,493.8 L501.8,496.0 L501.9,473.0 L504.0,487.6 L505.5,490.8 L507.4,503.9 L508.3,494.1 L509.8,498.1 L511.0,495.6 L511.9,486.5 L513.5,491.2 L514.9,493.0 L516.1,487.4 L517.7,494.1 L519.5,504.6 L520.5,496.1 L521.9,497.1 L523.3,498.0 L525.1,510.6 L526.3,505.1 L527.7,504.5 L529.2,509.8 L530.6,509.4 L531.5,493.9 L533.2,502.3 L534.7,504.8 L536.0,502.2 L537.5,505.9 L538.8,499.3 L540.4,509.1 L541.8,505.9 L543.2,504.8 L544.6,501.0 L546.1,503.6 L547.3,490.9 L549.1,509.4 L550.6,511.4 L552.1,511.3 L553.5,506.9 L554.9,506.2 L556.5,515.6 L558.0,510.3 L559.4,503.9 L560.9,505.4 L562.3,491.1 L563.8,483.5 L565.4,492.0 L567.0,507.4 L568.5,500.3 L570.1,512.3 L571.6,529.2 L573.1,514.6 L574.7,506.9 L576.3,513.2 L577.8,513.1 L579.3,519.3 L581.0,503.9 L582.6,509.8 L584.0,521.7 L585.8,501.1 L587.7,480.8 L588.9,513.9 L590.4,525.2 L592.0,519.2 L593.6,521.0 L595.2,522.9 L596.8,523.6 L598.4,525.5 L600.0,528.8 L601.6,530.2 L603.3,525.3 L605.0,523.8 L606.9,515.3 L608.6,515.5 L610.0,524.4 L611.8,521.8 L613.5,521.2 L614.7,535.6 L616.6,530.2 L618.5,525.1 L620.6,513.0 L622.2,517.0 L622.8,546.0 L624.9,535.8 L626.6,537.7 L628.6,530.6 L629.9,542.3 L632.6,520.5 L634.2,523.3 L635.7,530.9 L637.5,530.4 L639.6,523.7 L640.7,537.2 L642.3,541.5 L644.2,538.1 L645.8,542.7 L646.6,560.8 L648.8,553.7 L651.0,547.4 L654.1,526.2 L654.9,543.4 L657.0,539.5 L658.8,539.6 L660.1,548.0 L661.9,549.4 L663.1,559.4 L665.4,552.6 L667.2,553.6 L668.1,567.2 L670.5,560.3 L671.9,567.3 L675.1,550.0 L676.6,555.5 L677.5,567.9 L678.5,579.0 L680.3,580.1 L683.4,566.1 L685.0,570.9 L686.6,574.9 L687.9,581.9 L689.4,586.9 L692.0,579.1 L694.0,579.0 L692.1,598.8 L494.6,547.2Z" fill="url(#w31)"/><path d="M489.1,488.8 L490.5,491.0 L491.9,493.0 L493.1,492.3 L494.7,496.7 L496.0,497.2 L497.0,492.0 L498.4,494.1 L499.6,492.0 L500.2,477.4 L501.8,483.8 L503.4,489.4 L505.0,494.5 L506.6,500.1 L508.0,501.1 L509.4,502.1 L510.4,495.3 L511.9,499.8 L513.1,495.5 L514.1,486.6 L515.9,497.0 L517.6,506.5 L518.9,503.9 L519.9,494.8 L521.7,504.8 L523.0,505.2 L524.1,496.9 L525.9,507.5 L527.4,509.7 L528.8,511.8 L529.8,497.5 L531.5,509.9 L532.8,503.0 L534.0,498.5 L535.7,508.5 L537.0,501.5 L538.5,505.6 L540.1,511.5 L541.6,512.7 L542.6,493.0 L544.1,496.8 L545.7,500.8 L547.1,498.5 L548.9,519.4 L550.3,512.1 L551.7,510.1 L553.2,508.1 L554.7,507.5 L556.2,511.3 L557.7,509.1 L559.1,504.3 L560.6,494.4 L562.1,488.3 L563.6,490.6 L565.3,514.4 L566.8,505.6 L568.3,507.5 L569.9,517.2 L571.4,514.9 L573.0,505.0 L574.6,515.9 L576.1,517.6 L577.7,507.6 L579.3,501.5 L580.9,507.7 L582.5,509.8 L584.2,501.5 L585.9,484.5 L587.2,515.7 L588.7,532.4 L590.3,531.6 L592.0,523.1 L593.5,528.7 L595.2,527.5 L597.0,518.6 L598.4,527.5 L600.0,531.9 L601.7,527.2 L603.4,527.6 L605.3,519.8 L607.0,517.8 L608.5,523.0 L610.1,527.0 L611.7,530.0 L613.2,538.5 L614.9,535.3 L616.7,533.4 L618.8,522.1 L620.5,524.4 L621.8,536.4 L623.7,531.4 L625.5,530.7 L626.7,542.6 L628.4,545.0 L630.8,529.8 L632.7,526.7 L634.2,531.7 L635.9,533.3 L637.7,534.6 L639.1,542.8 L640.8,543.3 L642.7,541.9 L644.7,538.3 L645.6,555.4 L647.7,549.4 L649.3,554.3 L652.0,538.8 L654.0,537.2 L655.6,541.8 L657.0,548.3 L659.7,535.6 L660.3,554.7 L661.5,564.7 L663.6,562.1 L665.8,557.6 L667.4,561.1 L670.4,546.6 L670.8,566.5 L673.8,552.3 L674.2,571.1 L675.6,578.5 L678.3,568.0 L680.2,569.1 L680.3,591.0 L683.5,575.2 L685.4,576.3 L687.9,570.2 L688.5,584.9 L689.9,591.8 L691.9,590.8 L691.0,600.4 L492.7,548.2Z" fill="url(#w32)"/><path d="M487.1,490.0 L488.5,492.3 L489.9,494.2 L491.3,495.3 L492.6,496.4 L494.1,499.6 L495.2,496.0 L496.4,493.2 L497.6,491.8 L498.1,477.5 L500.6,498.5 L501.4,488.9 L503.7,507.3 L504.4,495.4 L505.9,498.8 L506.9,491.8 L508.5,498.1 L509.7,494.1 L511.8,510.6 L512.0,483.3 L514.2,502.4 L515.8,508.1 L516.9,502.5 L517.7,489.5 L519.7,503.7 L521.0,502.0 L522.8,511.9 L523.8,503.0 L525.4,507.6 L526.7,505.1 L528.0,501.6 L529.7,509.8 L531.0,506.3 L532.4,505.5 L533.8,505.5 L535.1,500.5 L536.7,506.8 L538.2,511.0 L539.6,509.3 L541.0,505.1 L542.5,505.7 L543.8,500.2 L545.4,507.8 L547.1,518.1 L548.5,514.5 L549.8,504.7 L551.5,516.6 L552.9,507.9 L554.4,508.2 L555.9,512.3 L557.3,503.0 L558.7,486.3 L560.2,482.2 L561.9,497.5 L563.5,513.6 L565.1,519.5 L566.6,511.5 L568.2,516.0 L569.7,522.2 L571.3,521.5 L572.8,514.7 L574.4,511.7 L576.0,518.9 L577.6,504.8 L579.2,510.7 L580.7,518.6 L582.5,501.0 L584.3,482.3 L585.6,516.1 L587.0,533.0 L588.6,533.7 L590.2,533.2 L591.9,532.1 L593.7,520.9 L595.3,523.7 L596.7,534.5 L598.5,526.3 L600.0,536.7 L601.8,528.2 L603.7,518.3 L605.5,516.7 L606.8,529.0 L608.4,531.9 L610.2,529.4 L611.9,529.3 L613.3,541.0 L615.4,528.9 L617.2,525.5 L619.1,520.3 L620.1,540.9 L621.8,542.7 L623.7,538.8 L625.2,543.7 L626.8,547.4 L629.3,529.9 L630.9,535.0 L633.0,527.3 L634.4,536.1 L636.3,535.0 L637.7,542.1 L639.3,547.7 L641.5,539.7 L643.0,545.8 L644.4,552.6 L647.4,531.7 L648.9,539.2 L650.8,537.7 L651.8,552.2 L654.3,540.9 L656.0,543.8 L657.6,548.9 L658.3,566.9 L660.5,560.9 L662.0,567.0 L664.8,554.2 L666.3,560.3 L667.9,563.6 L669.0,574.2 L671.7,565.0 L673.8,561.7 L675.5,565.6 L677.5,564.8 L678.6,575.3 L680.2,579.4 L682.4,576.2 L683.0,591.1 L685.4,587.0 L686.9,591.8 L689.8,581.2 L690.0,600.8 L689.9,602.0 L490.8,549.3Z" fill="url(#w33)"/><path d="M485.1,491.2 L486.6,493.5 L488.0,495.5 L489.3,496.7 L490.6,496.7 L492.1,499.3 L493.4,499.2 L494.5,496.5 L495.5,491.3 L496.4,483.7 L498.3,493.9 L499.5,491.2 L501.5,504.4 L502.7,500.8 L504.4,507.7 L505.2,497.1 L506.1,489.1 L508.0,500.4 L509.5,502.8 L510.4,493.3 L512.1,500.9 L514.1,514.4 L514.7,496.1 L516.3,503.1 L517.4,496.4 L519.4,509.5 L520.8,510.7 L522.4,516.3 L523.6,511.2 L524.9,510.1 L526.0,500.0 L527.8,510.4 L529.1,507.1 L530.6,510.4 L532.2,514.5 L533.3,504.9 L534.8,506.1 L536.4,512.2 L537.8,510.1 L539.1,505.1 L540.7,509.0 L541.9,497.3 L543.8,516.9 L545.3,516.8 L546.6,510.5 L548.2,513.5 L549.6,508.7 L551.2,520.0 L552.6,508.4 L554.2,518.1 L555.5,497.6 L556.9,493.1 L558.5,498.5 L560.2,505.4 L561.8,521.3 L563.3,513.4 L564.9,520.8 L566.5,526.9 L568.0,520.5 L569.6,518.8 L571.1,519.0 L572.7,518.6 L574.3,505.0 L575.9,511.7 L577.4,519.9 L579.0,519.4 L580.8,500.0 L582.5,486.8 L583.9,520.9 L585.5,524.4 L587.0,535.4 L588.7,524.8 L590.4,522.6 L591.9,530.6 L593.7,521.6 L595.2,531.3 L596.8,532.9 L598.4,538.6 L600.2,531.8 L602.1,520.6 L603.9,514.4 L605.2,533.5 L606.9,530.3 L608.6,530.9 L610.3,532.3 L611.8,539.6 L613.6,535.6 L616.2,508.5 L617.5,522.2 L618.6,542.1 L620.7,531.9 L622.1,542.6 L623.8,542.5 L625.4,546.4 L627.8,533.1 L629.7,529.2 L631.1,538.5 L633.3,530.6 L635.2,527.0 L636.9,530.1 L637.1,563.2 L640.2,537.6 L641.4,549.1 L642.3,566.8 L645.0,551.1 L647.9,533.3 L649.7,533.5 L651.4,536.1 L652.3,553.3 L655.0,540.2 L657.0,538.3 L658.4,545.7 L659.9,552.7 L660.9,564.6 L662.5,569.7 L664.3,570.3 L666.5,567.2 L668.2,569.4 L670.6,563.5 L671.7,574.7 L672.5,588.5 L675.0,581.7 L676.6,586.2 L679.3,576.3 L681.6,573.0 L682.8,581.8 L684.9,580.5 L686.4,585.5 L688.0,590.3 L688.9,601.2 L688.7,603.6 L488.9,550.3Z" fill="url(#w34)"/><path d="M483.1,492.3 L484.6,494.7 L486.0,497.3 L487.3,497.3 L488.7,498.6 L490.0,499.5 L491.3,498.6 L492.6,499.3 L493.8,497.7 L494.4,483.8 L496.2,492.7 L497.6,494.2 L499.8,509.2 L500.7,502.1 L502.3,507.8 L503.5,504.2 L504.9,504.7 L506.1,501.8 L507.3,498.1 L508.5,496.4 L510.4,506.2 L511.9,510.5 L513.1,505.7 L514.5,506.6 L515.8,503.9 L517.1,502.5 L518.7,508.6 L520.1,507.2 L521.7,512.6 L522.9,505.8 L524.3,507.9 L525.9,512.0 L527.0,502.9 L528.8,514.8 L530.3,514.6 L531.6,512.3 L533.1,512.4 L534.6,515.5 L535.8,504.8 L537.5,514.5 L538.7,506.3 L540.3,511.2 L541.9,514.2 L543.4,516.1 L544.9,519.2 L546.5,521.7 L547.8,511.6 L549.2,508.7 L550.8,514.6 L552.3,515.5 L553.8,508.5 L555.1,495.7 L556.7,495.8 L558.4,510.2 L560.1,521.9 L561.5,512.8 L563.1,519.9 L564.7,525.0 L566.2,518.6 L567.8,507.6 L569.4,525.2 L571.0,516.1 L572.5,520.2 L574.1,514.9 L575.7,525.7 L577.3,518.3 L578.9,519.9 L580.7,497.6 L582.2,511.4 L583.7,532.4 L585.4,525.7 L587.0,531.9 L588.6,532.9 L590.3,526.8 L592.0,527.1 L593.5,534.7 L595.1,539.6 L596.8,538.2 L598.5,534.0 L600.3,528.4 L602.3,513.5 L603.6,533.8 L605.3,533.8 L606.9,536.2 L608.5,542.5 L610.3,537.3 L612.0,538.9 L614.2,522.9 L615.7,532.5 L617.7,525.4 L619.1,535.7 L621.1,529.3 L621.9,554.8 L624.0,546.8 L626.4,530.4 L627.9,537.0 L629.8,536.4 L631.4,539.3 L633.8,526.8 L634.9,542.7 L636.4,549.8 L638.9,535.5 L640.0,549.9 L641.1,565.2 L643.7,549.6 L645.2,556.0 L647.1,555.6 L649.5,546.1 L651.4,546.8 L652.2,564.8 L655.2,546.9 L655.4,572.3 L657.8,565.1 L660.2,556.8 L661.8,562.5 L662.6,577.3 L664.8,573.2 L666.3,579.8 L668.2,580.1 L671.1,567.0 L673.8,556.9 L673.3,588.4 L674.7,595.9 L677.2,588.9 L679.7,582.3 L681.7,582.2 L682.6,594.6 L685.9,579.8 L686.2,598.6 L688.8,591.9 L687.5,605.2 L487.0,551.4Z" fill="url(#w35)"/><path d="M481.1,493.5 L482.5,496.0 L484.0,498.1 L485.3,498.8 L486.7,499.9 L488.0,500.4 L489.3,501.0 L490.7,501.1 L492.0,502.1 L492.4,486.5 L494.7,501.9 L495.5,493.0 L497.1,497.4 L498.6,500.3 L500.3,506.8 L501.4,502.9 L502.3,494.2 L504.2,503.8 L505.2,498.5 L507.1,508.0 L508.4,508.0 L509.6,503.6 L511.4,513.2 L512.0,496.1 L513.9,507.2 L515.4,508.7 L516.9,510.8 L518.6,519.0 L519.7,510.6 L521.2,514.3 L522.3,505.6 L524.2,520.1 L525.7,521.9 L526.9,514.3 L528.4,515.5 L529.7,513.5 L531.1,512.0 L532.6,514.2 L534.4,523.7 L535.6,517.0 L537.0,514.8 L538.4,510.2 L540.1,517.2 L541.6,521.4 L543.3,529.1 L544.3,508.7 L546.0,516.8 L547.5,515.7 L548.9,509.2 L550.4,511.7 L552.0,510.9 L553.4,502.5 L554.8,489.9 L556.5,503.0 L558.2,516.1 L559.7,514.5 L561.3,511.9 L562.8,512.9 L564.5,524.8 L566.0,518.6 L567.6,522.6 L569.2,523.9 L570.8,508.1 L572.4,506.6 L574.0,526.6 L575.6,528.0 L577.3,507.2 L578.9,498.4 L580.5,517.5 L582.0,534.1 L583.7,522.3 L585.2,536.6 L587.0,527.6 L588.6,532.4 L590.3,530.7 L591.9,529.8 L593.5,538.4 L595.1,539.2 L596.8,537.5 L598.9,517.2 L600.4,529.6 L602.0,533.0 L603.8,528.3 L605.3,539.8 L606.9,544.2 L608.7,538.9 L610.2,546.5 L612.2,539.2 L614.1,533.7 L615.6,542.5 L617.5,536.8 L619.0,546.1 L620.9,541.0 L622.3,550.9 L624.5,541.8 L626.9,526.9 L628.5,532.6 L629.8,542.9 L631.8,540.0 L633.5,542.7 L635.1,547.1 L636.7,551.2 L638.5,553.2 L640.5,549.1 L642.2,551.8 L643.6,562.0 L645.7,556.0 L647.7,554.9 L650.1,545.8 L651.8,548.7 L652.8,563.5 L655.4,553.2 L656.8,560.8 L658.8,559.6 L660.5,563.3 L661.5,575.9 L663.2,579.2 L666.3,562.6 L667.5,573.4 L669.7,569.6 L671.6,570.0 L672.6,583.4 L675.2,574.6 L677.0,576.7 L679.6,569.6 L680.2,586.6 L681.9,589.6 L683.8,590.6 L684.7,603.2 L687.7,592.6 L686.4,606.9 L485.0,552.4Z" fill="url(#w36)"/><path d="M479.0,494.7 L480.5,497.2 L481.9,499.2 L483.3,500.5 L484.7,502.4 L485.8,499.4 L487.1,499.6 L488.5,500.6 L489.8,499.4 L490.3,485.4 L492.4,498.6 L493.6,496.3 L495.5,505.9 L496.5,501.2 L498.2,506.0 L499.8,512.3 L500.8,504.8 L502.3,507.8 L503.2,498.6 L504.6,499.9 L506.3,505.0 L508.4,519.7 L509.3,510.9 L510.1,499.0 L511.7,503.6 L513.5,512.7 L515.5,525.9 L516.5,516.6 L518.0,518.9 L519.1,510.5 L520.6,512.9 L522.0,512.4 L523.2,506.0 L525.1,518.5 L526.7,522.9 L527.9,518.0 L529.2,513.9 L530.5,507.4 L532.1,513.2 L533.7,515.4 L534.8,502.6 L536.6,513.6 L538.1,515.0 L539.8,523.9 L541.0,513.4 L542.6,517.8 L544.1,516.6 L545.6,513.3 L547.2,517.6 L548.6,514.6 L550.0,508.3 L551.6,510.7 L553.0,498.0 L554.7,510.8 L556.4,522.8 L557.9,518.7 L559.6,524.5 L561.1,523.6 L562.7,527.6 L564.2,517.0 L565.8,523.1 L567.4,522.7 L569.0,522.7 L570.6,516.4 L572.2,520.5 L573.8,529.4 L575.5,514.2 L577.1,505.5 L578.7,526.0 L580.3,533.5 L581.9,532.6 L583.6,535.8 L585.3,522.3 L587.0,526.2 L588.5,534.8 L590.2,537.5 L591.8,540.6 L593.6,533.0 L595.1,542.4 L597.1,524.0 L598.8,527.7 L600.3,534.9 L601.9,540.7 L603.8,532.2 L605.6,530.2 L607.2,538.6 L608.8,542.1 L610.6,539.7 L612.4,537.9 L614.1,540.0 L615.6,549.5 L617.6,541.8 L619.1,550.9 L620.7,555.6 L622.9,544.9 L625.3,528.0 L626.5,543.2 L628.2,547.9 L630.2,542.9 L631.3,558.4 L633.0,561.6 L634.8,562.6 L637.2,549.8 L639.0,552.6 L640.4,561.1 L643.0,546.3 L644.3,558.1 L647.0,543.4 L648.5,550.4 L650.1,555.6 L651.6,562.4 L652.0,586.0 L655.1,567.7 L656.6,573.5 L658.8,569.4 L660.9,566.4 L662.5,571.1 L664.0,578.4 L666.8,565.9 L667.9,577.6 L669.2,586.9 L671.7,579.2 L672.8,590.6 L674.4,594.9 L677.5,581.1 L678.4,594.8 L680.7,591.3 L681.4,606.1 L684.6,592.6 L687.9,578.4 L685.2,608.6 L483.1,553.5Z" fill="url(#w37)"/><path d="M476.9,495.8 L478.4,498.4 L479.9,501.0 L481.2,501.4 L482.7,504.3 L484.0,504.0 L485.1,501.4 L486.0,494.2 L487.6,499.0 L488.8,496.5 L490.8,507.1 L491.4,495.3 L494.2,520.0 L495.3,516.4 L496.2,508.7 L497.6,509.6 L499.2,514.0 L500.4,510.2 L501.6,508.2 L503.0,509.2 L504.2,505.4 L505.8,508.6 L506.9,502.8 L508.1,499.1 L509.7,503.9 L511.5,512.9 L512.9,513.2 L514.1,506.3 L516.0,518.7 L517.4,518.7 L518.8,518.6 L519.8,507.7 L521.4,511.0 L523.2,521.6 L524.9,529.8 L526.1,521.2 L527.5,520.1 L528.9,519.2 L530.6,525.2 L531.8,517.4 L533.1,513.5 L534.5,508.0 L536.2,515.5 L537.8,521.9 L539.0,509.1 L540.7,516.8 L542.2,514.7 L543.9,527.0 L545.4,524.5 L546.8,519.9 L548.3,516.4 L549.8,515.6 L551.2,508.0 L552.8,509.5 L554.7,528.7 L556.0,514.0 L557.7,526.1 L559.3,524.7 L560.9,527.4 L562.5,526.8 L564.0,526.1 L565.6,521.6 L567.2,524.2 L568.8,516.5 L570.4,525.6 L572.1,517.6 L573.7,510.7 L575.3,511.9 L577.0,522.5 L578.6,532.5 L580.2,533.4 L581.9,525.6 L583.5,539.9 L585.2,533.1 L586.9,532.4 L588.5,532.0 L590.1,544.2 L591.8,541.9 L593.5,537.3 L595.3,535.1 L597.2,524.4 L598.8,528.7 L600.3,539.0 L602.2,531.1 L603.7,541.6 L605.5,542.1 L607.3,538.4 L609.2,532.6 L611.0,532.7 L612.3,549.7 L614.2,544.6 L615.8,548.7 L618.1,535.7 L619.8,539.1 L621.5,540.4 L623.5,535.8 L625.3,537.2 L626.9,542.8 L628.2,554.0 L630.2,551.0 L631.9,555.0 L633.5,559.0 L635.5,557.3 L637.1,562.2 L639.0,561.1 L641.3,552.2 L643.4,548.3 L644.4,564.3 L646.2,567.0 L648.8,555.3 L650.5,558.6 L652.3,559.8 L653.3,574.3 L655.9,564.8 L657.8,564.7 L659.3,572.2 L661.0,574.6 L663.3,570.3 L663.7,591.3 L666.8,575.9 L668.5,579.8 L670.5,579.3 L672.6,578.9 L673.6,590.7 L675.0,597.5 L676.7,601.3 L680.2,584.1 L680.2,607.5 L682.5,604.2 L684.3,606.0 L683.9,610.3 L481.1,554.6Z" fill="url(#w38)"/><path d="M474.8,497.0 L476.3,499.6 L477.8,502.1 L479.2,503.5 L480.5,502.8 L481.8,502.9 L482.9,499.7 L484.3,500.9 L485.7,501.7 L486.5,494.6 L488.5,504.3 L489.4,497.0 L491.7,512.6 L492.9,511.1 L494.2,510.4 L495.3,505.2 L497.1,514.4 L498.1,507.5 L499.1,500.8 L501.4,517.3 L502.2,505.9 L503.4,503.2 L505.1,509.2 L505.9,496.5 L507.9,508.9 L509.4,510.3 L510.9,513.3 L512.8,523.6 L513.8,515.7 L515.3,516.6 L517.0,523.0 L518.1,515.2 L519.4,511.2 L520.9,513.8 L522.5,516.4 L523.9,515.0 L525.2,511.6 L527.1,525.7 L528.6,525.5 L529.8,515.8 L531.2,513.5 L532.7,513.8 L534.5,524.2 L535.9,523.2 L537.3,517.2 L538.8,519.5 L540.3,519.0 L541.9,519.6 L543.4,521.2 L544.7,508.8 L546.4,514.8 L547.9,514.0 L549.2,501.1 L551.0,513.4 L552.6,516.3 L554.3,523.9 L555.8,522.3 L557.5,529.8 L559.1,529.7 L560.6,527.5 L562.3,536.6 L563.8,531.1 L565.4,516.2 L566.9,508.5 L568.7,532.9 L570.3,532.3 L571.9,517.1 L573.5,514.4 L575.2,527.6 L576.8,544.0 L578.5,531.7 L580.1,538.9 L581.8,529.6 L583.4,533.7 L585.2,530.6 L586.8,537.0 L588.3,546.6 L590.2,536.2 L591.8,539.4 L593.7,530.9 L595.6,519.6 L597.1,532.6 L598.6,543.7 L600.2,550.2 L602.0,547.0 L603.9,541.8 L605.4,549.9 L607.5,538.0 L609.1,543.2 L610.9,542.9 L612.6,546.3 L614.3,546.8 L615.9,552.7 L617.7,553.4 L619.6,550.2 L621.6,544.6 L623.7,538.0 L625.2,547.0 L627.1,545.7 L628.4,557.6 L630.5,551.9 L632.0,561.4 L634.1,554.7 L636.1,553.2 L637.3,566.5 L640.0,550.1 L641.5,557.7 L642.9,566.8 L645.7,551.3 L646.1,577.2 L648.9,562.2 L650.2,573.1 L652.0,574.5 L654.0,572.8 L655.2,585.0 L657.6,578.2 L659.1,585.1 L661.9,572.4 L664.1,568.8 L664.7,588.3 L667.3,579.2 L667.9,597.8 L670.0,595.9 L672.5,590.1 L674.8,585.9 L675.7,599.9 L677.7,600.2 L678.9,609.8 L682.2,594.6 L683.5,603.5 L682.7,612.0 L479.1,555.7Z" fill="url(#w39)"/><path d="M472.7,498.2 L474.2,500.9 L475.7,503.2 L477.1,504.4 L478.4,504.3 L479.7,503.9 L481.0,504.6 L482.0,499.7 L483.8,506.9 L485.0,504.8 L486.6,507.9 L487.6,502.6 L489.1,505.2 L490.5,507.1 L492.3,514.8 L493.3,508.4 L494.4,504.0 L495.8,504.0 L497.9,516.1 L498.9,510.1 L500.8,519.7 L502.0,517.2 L503.0,508.6 L504.3,506.6 L505.9,510.0 L507.7,518.4 L508.7,511.2 L511.3,535.1 L512.3,527.1 L513.4,519.1 L514.7,518.1 L516.6,528.8 L517.7,520.3 L518.9,515.2 L521.1,533.6 L522.2,524.6 L523.4,518.9 L525.3,530.4 L526.3,516.6 L527.9,520.7 L529.5,522.6 L530.7,516.0 L532.3,517.7 L533.9,522.5 L535.5,526.1 L536.6,510.3 L538.5,525.3 L540.0,523.4 L541.5,524.4 L543.0,520.5 L544.5,517.7 L545.9,509.8 L547.5,513.0 L549.0,507.1 L550.9,529.7 L552.4,526.6 L553.9,522.4 L555.7,533.5 L557.3,535.7 L558.8,534.0 L560.4,531.1 L562.0,525.9 L563.6,524.3 L565.2,526.6 L566.8,533.2 L568.5,535.5 L570.1,520.4 L571.7,512.0 L573.4,531.9 L575.0,532.3 L576.7,535.5 L578.4,531.5 L580.0,536.9 L581.7,537.2 L583.4,529.9 L585.0,538.4 L586.7,537.9 L588.3,550.8 L590.1,539.2 L591.8,539.0 L593.5,544.9 L595.1,549.6 L597.0,540.4 L598.7,544.3 L600.4,543.3 L602.1,545.0 L603.9,543.3 L605.8,539.9 L607.7,535.2 L609.2,544.5 L611.0,545.6 L612.4,558.7 L614.5,547.2 L616.0,558.5 L618.2,546.4 L620.1,544.7 L622.4,532.4 L623.8,543.2 L625.5,548.8 L627.5,543.7 L628.8,556.9 L631.1,547.5 L632.7,554.9 L634.0,566.4 L635.9,566.1 L637.8,564.9 L640.2,556.2 L641.8,562.4 L643.8,559.7 L645.5,564.1 L647.1,569.8 L648.8,573.6 L650.3,580.7 L652.6,574.9 L655.1,566.6 L656.6,573.7 L658.5,574.1 L661.0,567.3 L661.5,588.2 L664.0,580.9 L665.7,584.5 L667.0,593.5 L668.1,605.4 L670.3,602.7 L672.7,598.3 L674.2,604.7 L675.9,608.5 L679.2,592.5 L680.2,604.7 L681.7,611.4 L681.5,613.8 L477.0,556.8Z" fill="url(#w40)"/><path d="M470.6,499.3 L472.1,502.1 L473.6,504.4 L474.9,504.2 L476.2,504.9 L477.4,503.7 L479.1,508.0 L480.0,502.0 L481.5,504.4 L482.3,496.3 L484.2,504.8 L485.2,500.6 L487.2,510.4 L488.6,510.1 L490.0,511.4 L491.6,516.0 L492.5,508.3 L493.9,507.8 L495.6,513.7 L497.0,514.5 L497.7,502.5 L500.3,523.9 L501.5,520.0 L502.3,509.5 L503.9,513.6 L505.1,509.3 L507.0,518.9 L509.3,537.7 L510.1,525.4 L511.7,527.6 L512.3,510.2 L514.2,521.1 L515.6,518.3 L516.9,514.7 L518.7,524.1 L520.0,519.6 L521.8,528.9 L522.9,519.8 L524.5,522.0 L525.9,522.1 L527.5,525.3 L528.8,518.8 L530.7,529.7 L532.1,529.0 L533.5,525.6 L535.0,523.3 L536.4,518.7 L538.1,525.2 L539.5,520.8 L540.9,516.2 L542.6,522.8 L544.2,522.3 L545.6,513.5 L547.1,514.3 L548.7,513.7 L550.4,517.1 L552.2,531.1 L553.7,529.2 L555.4,539.0 L557.0,540.6 L558.5,527.5 L560.0,519.7 L561.7,520.8 L563.2,507.8 L564.9,523.9 L566.6,530.2 L568.3,531.7 L569.9,525.2 L571.6,535.4 L573.2,541.9 L574.9,542.6 L576.6,531.3 L578.2,537.3 L579.9,542.8 L581.6,540.2 L583.2,543.8 L584.9,544.9 L586.6,550.0 L588.3,547.6 L590.1,538.1 L591.6,553.8 L593.7,529.1 L595.4,534.7 L597.1,536.9 L598.7,545.6 L600.4,549.3 L602.2,546.3 L604.1,543.2 L605.8,546.2 L607.6,546.6 L609.2,553.4 L611.1,547.5 L612.7,555.4 L614.9,544.1 L616.8,540.6 L618.1,557.1 L620.1,551.9 L622.1,546.8 L623.9,549.9 L625.5,555.7 L628.0,540.5 L629.6,547.0 L630.9,562.1 L632.7,562.7 L634.4,566.0 L636.4,565.6 L637.9,572.9 L640.9,551.4 L642.4,560.6 L644.6,555.4 L645.6,571.2 L648.5,554.5 L650.1,562.2 L652.0,562.8 L652.2,590.7 L656.0,562.1 L656.5,584.1 L656.9,607.7 L661.3,572.3 L662.8,580.0 L663.9,592.6 L665.6,596.3 L667.8,593.9 L669.3,599.9 L671.6,596.6 L673.1,603.7 L676.2,590.2 L680.7,560.8 L678.8,608.5 L681.4,602.3 L680.2,615.6 L475.0,558.0Z" fill="url(#w41)"/><path d="M468.4,500.5 L469.9,503.3 L471.4,505.4 L472.8,507.1 L474.1,506.4 L475.3,504.5 L476.9,508.6 L477.6,499.8 L479.4,506.5 L480.6,504.6 L482.0,504.7 L483.4,506.6 L485.1,511.7 L486.6,513.1 L487.5,506.9 L489.5,516.5 L491.2,522.0 L492.2,516.9 L493.4,513.9 L495.3,523.0 L495.9,508.4 L497.8,517.1 L498.8,511.2 L500.3,511.2 L501.7,512.6 L503.2,512.7 L504.2,505.6 L506.6,524.9 L508.3,529.5 L509.4,524.6 L510.4,515.3 L511.8,513.4 L513.7,523.9 L515.0,521.1 L516.5,521.4 L518.0,521.6 L519.4,521.5 L521.2,530.0 L522.5,524.4 L524.2,530.4 L525.2,516.0 L526.9,522.0 L528.5,525.2 L530.1,527.3 L531.5,524.1 L533.1,526.2 L534.5,523.3 L536.0,523.8 L537.7,529.8 L539.1,521.0 L540.8,528.9 L542.2,523.2 L543.6,516.1 L545.2,516.7 L547.0,527.2 L548.7,534.5 L550.1,522.3 L552.0,540.1 L553.4,527.1 L555.1,540.4 L556.7,540.5 L558.1,522.2 L559.7,518.9 L561.4,522.5 L563.1,527.0 L564.8,534.8 L566.4,532.4 L568.0,528.2 L569.7,540.8 L571.4,540.2 L573.1,542.5 L574.7,541.8 L576.4,540.7 L578.1,534.1 L579.8,544.6 L581.5,539.0 L583.2,540.6 L584.8,549.0 L586.5,555.2 L588.4,538.5 L590.1,539.5 L592.0,526.5 L593.5,546.6 L595.3,541.0 L597.2,537.8 L598.6,555.2 L600.4,553.0 L602.3,545.7 L604.1,545.7 L605.9,547.5 L607.7,547.5 L609.3,555.6 L611.1,554.9 L613.0,552.2 L615.4,535.9 L616.5,557.2 L618.3,559.3 L620.7,543.1 L622.2,553.6 L624.1,552.4 L625.4,567.1 L627.9,551.7 L629.9,549.5 L630.9,570.7 L632.3,579.8 L634.9,566.0 L637.0,560.9 L639.3,554.1 L641.0,558.4 L642.1,573.9 L644.4,568.7 L645.2,588.6 L647.9,574.5 L649.9,574.0 L652.2,568.5 L653.9,573.9 L655.7,577.4 L657.7,576.8 L659.1,586.0 L661.6,578.4 L662.8,589.5 L665.2,585.0 L665.2,612.3 L668.6,593.4 L670.7,593.0 L671.1,613.9 L674.9,591.2 L676.4,598.6 L678.8,594.1 L680.1,604.3 L678.9,617.4 L472.9,559.1Z" fill="url(#w42)"/><path d="M466.2,501.7 L467.8,504.5 L469.3,507.4 L470.8,509.7 L471.9,507.2 L473.1,506.0 L474.6,508.3 L475.6,502.9 L477.6,512.3 L478.0,499.9 L480.0,509.3 L480.7,498.9 L483.2,516.8 L484.7,519.1 L486.3,522.3 L486.9,510.1 L488.5,514.4 L489.9,513.7 L491.3,515.1 L493.1,521.2 L494.2,516.8 L495.7,519.4 L496.9,516.0 L498.3,514.8 L500.2,524.3 L501.2,516.9 L502.9,520.8 L504.3,522.2 L505.9,524.6 L507.4,526.9 L508.4,517.0 L510.7,534.7 L511.6,522.9 L512.8,518.6 L514.9,532.5 L516.4,533.4 L517.5,525.4 L519.0,525.4 L520.4,523.8 L521.9,522.9 L523.7,531.5 L525.0,525.6 L526.5,525.3 L528.3,535.4 L529.6,527.6 L530.9,521.7 L532.4,520.5 L534.1,525.1 L535.5,521.1 L537.0,517.6 L538.9,533.0 L540.3,526.9 L541.7,518.1 L543.1,513.1 L544.9,523.1 L546.6,525.3 L548.4,536.4 L550.0,541.0 L551.6,538.6 L553.1,533.3 L554.7,528.2 L556.2,520.5 L557.9,524.0 L559.5,526.3 L561.2,533.2 L563.0,544.5 L564.6,538.4 L566.2,531.2 L567.9,541.7 L569.5,541.6 L571.2,532.6 L572.9,536.2 L574.6,531.2 L576.3,538.1 L578.0,537.7 L579.6,546.8 L581.4,540.1 L583.0,555.6 L584.7,553.6 L586.5,546.5 L588.3,544.0 L590.1,536.5 L591.8,543.8 L593.5,546.1 L595.5,535.1 L597.1,544.8 L598.7,553.9 L600.5,553.8 L602.2,557.9 L604.2,546.7 L606.1,546.2 L607.8,551.0 L609.7,546.4 L611.1,563.2 L613.7,536.8 L614.9,558.1 L617.1,546.9 L618.6,556.8 L620.6,555.4 L622.3,558.6 L624.3,556.3 L626.3,554.4 L627.9,560.5 L629.2,575.1 L631.4,567.1 L633.2,570.0 L635.4,564.2 L637.7,557.0 L638.6,577.9 L641.7,555.6 L642.5,576.3 L643.9,586.6 L646.4,577.0 L647.8,587.5 L650.1,581.0 L651.9,584.7 L654.1,580.7 L656.2,579.7 L658.5,575.5 L659.9,583.6 L661.6,588.8 L664.1,581.7 L665.1,596.2 L665.8,614.6 L667.8,615.2 L670.1,611.4 L673.7,591.8 L675.3,597.7 L675.7,617.4 L679.1,601.8 L677.6,619.2 L470.8,560.2Z" fill="url(#w43)"/><path d="M464.0,502.8 L465.6,505.8 L467.1,508.1 L468.5,510.1 L469.9,511.0 L471.2,510.8 L472.4,509.2 L473.5,505.6 L475.0,508.5 L476.2,505.6 L478.2,515.1 L479.0,507.8 L480.9,515.1 L482.1,513.5 L483.6,515.6 L485.9,529.3 L486.2,512.1 L488.0,518.6 L489.8,525.7 L490.5,515.7 L491.5,509.0 L493.7,522.7 L494.5,512.2 L496.5,521.1 L497.5,514.8 L499.4,523.6 L500.4,514.8 L502.9,536.1 L504.3,535.7 L505.5,530.5 L506.8,528.5 L507.8,519.8 L509.6,525.7 L511.0,526.3 L512.7,529.8 L514.5,538.6 L515.4,524.6 L516.7,519.8 L518.1,519.1 L520.1,531.3 L521.6,531.4 L522.9,527.0 L524.0,515.2 L525.9,524.8 L527.6,531.6 L528.9,523.0 L530.8,535.8 L532.0,526.2 L533.6,525.5 L535.3,530.8 L536.3,510.6 L538.4,531.6 L539.7,521.9 L541.2,517.7 L543.1,529.6 L544.8,533.3 L546.4,538.1 L548.1,540.8 L549.5,533.3 L551.2,533.8 L552.7,530.1 L554.3,529.1 L556.0,531.0 L557.5,521.8 L559.4,546.4 L561.0,536.0 L562.6,534.9 L564.3,537.6 L566.0,532.8 L567.7,548.7 L569.4,541.2 L571.0,541.7 L572.7,546.3 L574.4,534.5 L576.1,538.2 L577.8,541.7 L579.5,557.9 L581.2,555.2 L583.0,552.4 L584.7,554.4 L586.5,548.0 L588.1,557.8 L590.0,543.3 L591.9,538.6 L593.5,546.5 L595.3,547.3 L596.8,561.3 L598.8,551.2 L600.7,550.0 L602.5,550.6 L603.9,567.5 L605.8,561.0 L607.5,567.2 L609.5,560.3 L611.9,540.4 L613.5,550.2 L615.5,546.1 L617.6,538.6 L619.6,537.7 L620.5,564.3 L622.8,553.1 L624.5,557.9 L626.5,557.7 L628.2,563.1 L629.5,575.2 L632.1,560.3 L633.1,580.3 L635.4,572.3 L637.6,567.8 L639.2,575.4 L640.8,580.8 L641.9,596.6 L644.8,580.3 L645.6,601.0 L648.2,590.2 L650.2,589.6 L652.5,584.1 L654.2,589.7 L656.8,581.0 L658.2,589.6 L660.2,590.6 L661.2,605.0 L663.3,603.2 L665.4,602.8 L667.2,607.0 L669.2,607.0 L670.8,612.6 L672.5,617.3 L675.5,606.0 L677.5,606.6 L676.3,621.0 L468.7,561.4Z" fill="url(#w44)"/><path d="M461.8,504.0 L463.3,507.0 L464.8,509.4 L466.3,511.0 L467.7,512.3 L468.7,508.0 L470.0,508.1 L470.8,501.0 L472.8,509.4 L474.3,511.1 L475.0,502.5 L476.3,501.1 L478.8,517.2 L480.0,515.7 L482.1,526.8 L482.7,515.1 L484.9,527.8 L485.6,516.4 L487.3,521.3 L488.4,517.8 L490.0,520.3 L491.5,523.0 L492.2,510.6 L494.0,516.7 L495.8,522.8 L496.7,513.7 L498.5,520.8 L500.4,530.4 L502.1,533.8 L503.4,531.9 L504.8,531.2 L506.3,533.1 L507.6,529.9 L508.7,521.4 L511.0,540.8 L511.8,525.9 L513.3,525.9 L514.9,528.9 L516.6,533.0 L517.5,520.1 L519.6,533.8 L520.9,529.0 L522.5,532.0 L523.7,522.2 L525.9,541.7 L527.1,533.6 L528.8,536.0 L530.1,529.5 L531.8,533.6 L532.9,519.8 L534.5,520.9 L536.4,532.5 L538.1,535.5 L539.2,520.2 L541.2,535.4 L542.8,537.7 L544.3,529.7 L545.8,524.3 L547.4,524.1 L549.4,545.6 L550.9,538.1 L552.4,530.1 L554.0,529.1 L555.7,533.2 L557.3,528.8 L559.0,532.7 L560.7,537.5 L562.5,546.0 L564.1,545.5 L565.8,539.6 L567.5,542.1 L569.2,547.9 L570.9,547.3 L572.6,541.9 L574.3,544.0 L576.0,549.2 L577.7,560.7 L579.4,554.8 L581.1,555.6 L582.9,544.7 L584.7,543.5 L586.6,534.1 L588.2,547.4 L590.0,547.5 L591.9,536.0 L593.4,554.7 L595.2,558.6 L597.1,548.6 L598.8,557.9 L600.7,554.2 L602.3,564.2 L604.4,550.3 L605.9,563.1 L608.1,551.3 L610.2,543.4 L611.8,552.4 L613.5,557.0 L615.5,555.2 L617.6,547.2 L619.3,554.7 L620.5,573.3 L622.7,565.4 L624.5,568.3 L626.7,559.8 L627.9,576.9 L630.1,571.5 L632.2,567.2 L633.9,572.6 L635.8,574.5 L637.6,576.8 L639.8,573.4 L641.5,577.7 L642.8,590.7 L644.8,589.6 L647.3,581.1 L648.7,590.6 L650.9,588.4 L653.6,577.1 L654.7,591.2 L657.1,586.3 L659.5,581.8 L660.4,598.3 L662.6,596.1 L664.7,595.0 L667.0,592.1 L668.0,606.8 L669.0,620.0 L671.9,609.8 L674.0,609.2 L675.6,615.5 L675.0,622.9 L466.6,562.6Z" fill="url(#w45)"/><path d="M459.5,505.2 L461.1,508.2 L462.6,510.5 L464.0,511.8 L465.4,512.3 L466.3,507.5 L467.8,509.1 L468.6,502.1 L471.0,516.3 L472.5,517.8 L473.1,507.5 L474.1,503.0 L476.8,521.1 L477.9,518.2 L479.4,519.4 L481.0,522.8 L482.3,521.4 L483.6,520.5 L485.5,529.3 L486.4,522.0 L487.9,523.0 L489.7,529.2 L490.3,516.8 L492.3,525.9 L493.1,516.1 L495.2,526.3 L495.9,514.3 L498.5,534.7 L499.9,533.8 L501.2,532.3 L502.7,533.8 L504.0,529.7 L504.9,520.1 L506.6,523.9 L508.9,541.2 L509.8,529.9 L511.3,528.9 L512.6,525.6 L514.6,537.8 L515.7,527.0 L517.4,531.4 L518.9,532.0 L520.5,533.1 L521.4,517.0 L523.6,536.6 L525.2,538.9 L526.4,529.5 L528.1,533.8 L529.6,531.3 L531.1,529.8 L532.9,538.2 L534.5,538.7 L535.8,529.9 L537.1,519.2 L539.1,532.3 L540.8,536.4 L542.2,529.8 L544.0,538.2 L545.9,552.2 L547.4,544.8 L548.9,540.3 L550.4,529.7 L551.8,518.5 L553.6,527.2 L555.6,553.1 L557.2,546.0 L558.9,547.5 L560.5,538.9 L562.2,543.5 L563.9,546.6 L565.6,543.1 L567.3,554.5 L569.0,547.1 L570.7,543.2 L572.4,549.0 L574.1,547.4 L575.8,558.5 L577.5,557.1 L579.3,552.6 L581.0,553.1 L582.8,553.5 L584.6,546.6 L586.4,542.6 L588.1,554.6 L590.0,542.8 L591.7,554.2 L593.3,562.6 L595.3,554.8 L597.0,560.6 L598.8,557.9 L600.6,563.4 L602.4,561.7 L604.2,563.4 L606.4,551.9 L608.1,556.6 L609.8,563.6 L611.5,567.3 L614.1,546.2 L615.9,549.0 L617.7,552.6 L619.3,560.1 L621.4,556.6 L622.8,570.8 L624.8,568.9 L626.7,569.3 L628.7,567.1 L630.4,574.1 L632.1,579.0 L633.1,598.9 L636.1,577.4 L637.4,591.3 L639.1,596.5 L640.9,599.1 L643.3,591.9 L645.7,584.7 L647.5,588.6 L648.7,600.6 L650.8,600.5 L653.4,590.4 L654.7,601.7 L656.9,599.2 L659.6,590.0 L661.3,596.0 L661.9,616.1 L663.6,620.6 L666.2,614.0 L669.1,602.8 L671.8,595.1 L673.5,600.4 L674.7,611.9 L673.7,624.8 L464.4,563.8Z" fill="url(#w46)"/><path d="M457.2,506.4 L458.8,509.5 L460.3,512.1 L461.9,514.9 L463.1,513.9 L463.7,504.9 L465.6,511.1 L466.5,505.9 L469.0,520.4 L470.7,525.0 L471.0,511.3 L472.1,507.9 L474.2,517.3 L475.6,517.9 L477.3,522.1 L478.6,521.7 L480.1,523.8 L481.3,521.3 L482.6,519.3 L485.1,535.6 L485.1,514.6 L487.1,524.0 L488.2,518.5 L489.4,515.6 L490.9,517.0 L492.3,516.3 L494.0,520.6 L496.4,536.7 L497.1,524.2 L498.7,527.2 L500.1,526.8 L501.9,532.2 L502.9,524.4 L504.7,529.7 L506.8,542.6 L508.4,545.1 L509.4,535.1 L510.5,528.0 L512.5,539.1 L514.5,549.2 L515.6,541.0 L517.2,543.4 L518.6,539.6 L519.9,534.2 L521.2,529.0 L523.1,539.1 L524.3,530.2 L526.1,536.8 L527.7,536.0 L528.9,525.1 L530.8,536.8 L532.3,532.8 L534.0,537.5 L535.4,531.8 L537.1,535.1 L538.8,540.3 L540.6,548.4 L542.1,543.0 L543.8,546.0 L545.4,544.8 L546.9,540.1 L548.1,514.4 L550.0,528.4 L551.7,531.4 L553.4,531.3 L555.2,542.5 L556.9,542.6 L558.4,533.6 L560.3,548.4 L561.9,545.3 L563.6,539.0 L565.3,540.5 L567.0,546.7 L568.7,536.8 L570.5,551.5 L572.2,555.5 L574.0,554.0 L575.7,566.9 L577.4,557.3 L579.2,548.5 L580.9,558.9 L582.8,537.3 L584.5,548.8 L586.4,539.7 L588.2,547.3 L589.7,565.2 L591.5,566.5 L593.6,551.2 L595.2,559.1 L597.1,556.8 L598.9,560.7 L600.9,553.4 L602.5,563.6 L604.6,555.4 L606.8,540.5 L608.3,557.8 L610.1,557.7 L612.2,552.7 L613.9,558.0 L615.4,571.9 L617.3,572.9 L619.0,577.2 L621.1,572.1 L623.1,571.8 L624.1,593.0 L626.7,577.4 L628.9,572.7 L630.1,588.6 L633.3,562.6 L634.4,582.0 L636.5,578.3 L637.4,599.6 L639.8,592.7 L642.1,586.2 L643.9,590.0 L645.4,598.5 L646.8,610.3 L650.4,584.3 L651.4,600.1 L654.3,587.7 L655.9,594.1 L657.1,606.9 L659.3,605.0 L661.2,607.9 L662.2,622.5 L665.8,601.7 L667.8,603.2 L669.5,609.0 L672.1,602.5 L672.6,622.3 L672.3,626.7 L462.2,565.0Z" fill="url(#w47)"/><path d="M454.9,507.6 L456.5,510.7 L458.0,512.9 L459.7,516.7 L460.7,513.8 L461.8,510.1 L463.2,511.6 L464.3,507.9 L466.7,521.4 L467.7,516.2 L468.8,513.0 L468.8,496.2 L472.3,523.7 L473.2,517.3 L475.2,525.6 L476.4,523.6 L477.5,519.5 L479.1,522.9 L481.0,530.4 L482.1,525.9 L483.3,523.1 L484.7,522.0 L486.0,521.4 L487.5,521.3 L488.9,521.2 L490.5,524.9 L492.2,528.6 L494.3,539.7 L495.4,534.1 L496.8,532.9 L498.0,528.4 L499.2,524.6 L501.1,531.8 L502.3,526.4 L504.7,544.4 L506.1,543.1 L507.3,536.6 L508.8,537.4 L510.4,539.2 L511.7,535.0 L513.6,544.5 L514.4,528.7 L515.8,525.7 L517.7,534.8 L519.4,538.6 L520.8,535.1 L522.4,536.7 L523.8,531.8 L525.4,532.2 L527.1,535.2 L528.5,530.6 L530.2,534.5 L531.8,536.4 L533.2,528.3 L534.8,530.2 L536.6,533.7 L538.4,541.0 L540.1,545.4 L541.5,536.3 L543.5,553.9 L544.9,541.7 L546.3,532.6 L548.0,530.9 L549.5,524.9 L551.6,546.8 L553.2,547.1 L554.8,539.1 L556.6,549.1 L558.3,551.0 L560.0,546.6 L561.6,542.2 L563.3,539.4 L565.1,547.1 L566.8,551.0 L568.5,540.1 L570.3,546.5 L572.1,565.8 L573.8,564.8 L575.6,552.6 L577.3,556.6 L579.0,564.3 L580.9,553.9 L582.8,537.6 L584.4,562.6 L586.2,553.8 L588.0,555.3 L589.8,562.2 L591.8,545.0 L593.5,559.2 L595.4,554.1 L597.0,567.6 L598.7,572.3 L600.8,559.3 L602.8,555.2 L604.6,557.9 L606.3,566.5 L608.5,553.7 L610.3,560.1 L612.0,567.5 L614.1,561.0 L615.6,574.0 L617.5,575.3 L619.9,561.4 L621.9,558.8 L623.2,578.1 L624.9,582.0 L627.1,578.5 L629.4,569.9 L630.2,595.6 L632.5,589.8 L633.8,602.1 L636.9,580.1 L638.4,590.5 L640.0,598.0 L643.1,579.1 L644.7,585.5 L645.9,601.4 L648.4,593.1 L650.5,592.5 L651.5,609.2 L654.3,596.8 L655.5,610.5 L658.1,602.5 L659.3,615.7 L661.3,617.1 L664.0,609.0 L665.0,624.0 L667.4,619.5 L670.1,612.4 L673.0,602.2 L670.9,628.7 L460.0,566.2Z" fill="url(#w48)"/><path d="M452.6,508.7 L454.2,511.9 L455.7,514.4 L457.3,517.1 L458.5,516.3 L459.4,511.2 L461.0,514.1 L461.4,501.9 L464.2,519.6 L466.0,525.0 L466.5,514.1 L468.2,519.6 L469.6,519.9 L471.5,526.4 L473.6,536.2 L474.3,527.1 L475.2,520.0 L477.4,531.9 L478.8,531.9 L480.4,534.4 L480.7,518.3 L483.1,533.5 L484.1,526.8 L486.1,536.0 L486.9,526.4 L488.5,529.3 L490.0,530.8 L491.7,534.1 L493.1,533.0 L494.4,531.3 L495.6,526.0 L497.2,528.0 L498.3,522.6 L500.4,533.9 L502.3,540.5 L503.9,544.1 L504.7,529.5 L506.7,540.5 L508.0,536.4 L509.8,542.3 L511.4,543.8 L512.3,532.0 L514.2,540.0 L515.3,529.4 L517.3,539.3 L518.6,533.9 L520.6,545.3 L522.2,547.6 L523.1,529.2 L524.8,533.6 L526.6,540.1 L528.4,543.7 L529.8,539.2 L531.0,525.7 L532.4,520.9 L534.6,538.5 L536.4,547.6 L537.9,540.6 L539.4,535.1 L541.4,552.2 L542.9,547.7 L544.2,531.5 L545.9,529.3 L547.4,522.4 L549.6,552.0 L551.2,547.1 L552.8,542.5 L554.5,544.5 L556.2,541.0 L558.1,557.7 L559.8,555.3 L561.4,547.9 L563.2,551.5 L564.9,552.7 L566.6,539.1 L568.4,555.1 L570.1,558.9 L571.9,566.8 L573.6,566.1 L575.4,555.0 L577.2,547.3 L579.0,551.7 L580.8,552.8 L582.6,553.7 L584.3,559.7 L586.1,560.8 L588.0,556.7 L589.7,567.9 L591.6,564.6 L593.5,558.3 L595.1,571.8 L597.0,572.1 L598.9,566.3 L601.0,558.5 L603.0,553.7 L604.5,569.6 L607.1,541.8 L608.3,567.7 L610.1,572.4 L612.2,567.6 L614.2,564.5 L615.8,574.4 L617.8,574.7 L619.5,579.0 L621.0,591.6 L623.4,580.6 L624.8,594.4 L627.2,583.6 L629.2,584.0 L631.6,575.7 L632.2,605.6 L634.5,597.6 L636.2,603.6 L639.2,584.8 L640.4,600.0 L642.4,600.5 L644.8,595.1 L646.8,595.8 L649.5,585.7 L650.5,603.3 L653.7,584.9 L654.8,600.1 L656.8,602.1 L658.2,611.5 L659.6,622.4 L663.5,597.7 L664.5,612.3 L668.3,590.4 L668.7,613.8 L669.8,627.4 L669.5,630.6 L457.8,567.4Z" fill="url(#w49)"/><path d="M450.2,509.9 L451.8,513.2 L453.4,516.4 L455.0,519.4 L456.1,516.7 L457.4,516.3 L458.6,513.7 L460.6,521.5 L461.7,518.4 L463.4,522.8 L464.9,524.9 L465.6,516.3 L467.6,524.0 L469.4,530.4 L470.8,530.1 L471.5,521.2 L473.3,526.9 L474.8,528.5 L476.6,534.6 L478.1,535.6 L478.4,519.7 L480.5,529.5 L481.5,523.4 L483.3,529.2 L484.7,529.1 L485.7,521.2 L487.7,530.0 L489.7,539.5 L490.7,532.1 L492.8,542.5 L493.4,528.5 L495.0,530.0 L496.5,530.3 L498.7,543.8 L500.3,545.3 L500.7,526.8 L502.5,532.4 L504.6,544.2 L505.7,536.3 L507.5,540.4 L508.7,534.9 L510.5,541.0 L512.1,542.9 L513.7,543.2 L515.2,543.5 L516.6,539.8 L518.0,535.6 L519.7,539.0 L521.6,547.3 L522.6,531.6 L524.0,528.5 L526.3,546.4 L527.7,540.9 L529.0,531.1 L531.0,544.3 L532.3,535.1 L534.2,543.3 L535.9,547.2 L537.4,543.1 L539.3,550.8 L541.0,555.3 L542.5,548.7 L543.8,530.6 L545.3,522.1 L547.4,543.5 L549.0,538.0 L550.8,546.2 L552.6,550.1 L554.2,548.1 L556.1,556.6 L557.7,548.3 L559.4,553.3 L561.2,554.6 L562.9,554.6 L564.6,545.5 L566.5,572.3 L568.2,558.6 L569.9,568.8 L571.7,554.3 L573.5,562.7 L575.2,564.7 L577.1,552.0 L578.8,557.7 L580.7,554.5 L582.5,558.2 L584.2,562.8 L586.1,556.8 L587.9,559.6 L589.9,549.1 L591.5,567.3 L593.6,554.7 L595.3,565.1 L597.2,561.2 L599.1,562.8 L600.9,568.2 L602.9,563.4 L604.6,569.5 L606.5,569.9 L608.5,569.0 L610.7,560.7 L612.4,567.1 L613.8,583.5 L616.0,576.4 L617.8,582.4 L619.8,580.3 L621.5,588.4 L623.0,599.8 L625.5,587.3 L627.5,585.6 L629.9,578.0 L630.4,609.1 L633.9,579.2 L635.6,586.2 L637.0,598.8 L638.4,609.0 L641.6,588.3 L643.2,596.3 L645.3,595.5 L646.1,617.7 L648.5,611.3 L651.2,601.3 L652.3,617.9 L655.6,599.5 L655.8,627.7 L658.9,613.5 L660.4,622.2 L664.5,594.6 L666.1,601.6 L667.8,608.4 L669.7,611.5 L668.1,632.6 L455.6,568.6Z" fill="url(#w50)"/><path d="M447.8,511.1 L449.5,514.4 L451.0,517.0 L452.5,519.1 L453.7,517.6 L455.1,518.2 L456.3,516.4 L457.2,510.7 L458.7,512.4 L460.3,515.5 L462.7,527.7 L462.9,513.2 L465.7,530.7 L466.9,528.6 L467.9,523.7 L470.2,535.4 L471.0,528.8 L472.2,526.1 L473.7,526.8 L475.4,531.0 L476.7,529.9 L478.2,530.4 L479.4,528.2 L480.2,518.0 L482.3,528.5 L484.2,534.5 L485.0,525.2 L487.1,535.3 L489.0,542.0 L489.7,530.5 L491.8,540.9 L492.6,529.2 L494.9,542.9 L496.4,543.4 L497.8,541.7 L499.6,547.4 L500.1,529.4 L501.7,531.9 L503.8,543.2 L505.1,537.9 L506.1,529.1 L508.3,541.5 L509.9,543.3 L511.4,542.9 L512.7,535.9 L514.5,543.6 L515.8,536.9 L517.9,548.7 L518.8,531.8 L520.5,534.6 L521.9,531.8 L523.8,538.1 L525.4,538.1 L526.9,534.7 L528.7,540.2 L530.6,547.9 L532.2,548.9 L533.3,531.8 L535.5,551.0 L537.2,553.4 L538.7,547.9 L540.2,541.0 L541.9,540.8 L543.6,541.7 L545.5,550.9 L547.2,554.7 L548.9,556.8 L550.6,556.8 L552.3,557.8 L553.8,543.1 L555.5,541.1 L557.5,559.9 L559.2,554.9 L560.8,543.3 L562.7,557.8 L564.5,567.5 L566.2,554.3 L568.0,573.6 L569.7,555.2 L571.5,554.2 L573.3,556.4 L575.1,546.7 L576.9,560.1 L578.8,547.2 L580.6,550.4 L582.4,559.6 L584.1,569.9 L586.2,548.7 L587.8,571.0 L589.7,566.5 L591.6,562.3 L593.3,573.2 L595.4,562.1 L597.2,568.1 L598.9,574.5 L600.9,573.1 L602.8,573.1 L604.7,572.1 L606.7,568.5 L608.8,565.9 L610.5,574.4 L612.3,578.9 L614.2,580.6 L616.2,579.2 L617.6,594.1 L619.9,587.1 L621.5,596.7 L623.5,595.2 L626.2,577.3 L627.9,586.2 L629.9,586.0 L631.5,596.7 L633.3,601.1 L635.6,595.3 L636.7,613.8 L639.7,595.1 L642.5,581.1 L643.3,605.9 L646.1,593.2 L647.5,604.0 L649.4,607.0 L651.7,605.2 L654.0,602.2 L654.3,629.7 L657.3,615.9 L658.4,630.9 L661.7,613.9 L663.0,626.3 L665.2,625.5 L666.8,632.5 L666.6,634.6 L453.3,569.9Z" fill="url(#w51)"/><path d="M445.4,512.3 L447.1,515.7 L448.7,518.8 L450.3,521.8 L451.3,518.3 L453.1,522.9 L454.1,519.0 L455.6,521.8 L457.5,527.5 L458.9,528.1 L460.2,527.8 L461.3,523.7 L463.8,538.3 L464.1,524.8 L465.9,530.2 L467.2,528.2 L468.5,528.2 L470.9,540.4 L471.8,534.3 L473.4,536.1 L474.6,533.5 L475.3,524.0 L477.0,527.9 L478.7,531.3 L480.3,533.8 L481.8,535.1 L482.8,528.3 L485.3,543.9 L486.6,541.6 L488.0,541.0 L488.7,529.3 L490.5,533.3 L492.3,539.6 L494.0,541.8 L495.4,540.9 L496.9,541.1 L498.5,542.9 L500.1,544.1 L501.7,546.8 L502.9,540.8 L504.4,540.3 L506.1,543.7 L507.2,535.5 L509.1,542.4 L510.7,542.1 L512.2,540.8 L514.1,549.3 L515.3,541.5 L516.4,530.5 L518.2,533.4 L520.1,543.2 L521.4,533.5 L523.6,548.9 L524.9,541.3 L526.6,544.6 L528.3,546.0 L530.2,554.4 L531.2,536.0 L532.8,532.2 L535.0,550.2 L536.4,541.6 L538.5,559.1 L539.5,533.3 L541.5,546.4 L543.1,541.6 L545.1,554.6 L546.9,561.9 L548.6,561.0 L550.4,563.4 L551.9,556.2 L553.8,563.9 L555.2,544.8 L557.1,550.6 L558.8,550.8 L560.6,554.1 L562.3,549.9 L564.2,557.6 L566.0,570.9 L567.7,563.4 L569.5,560.9 L571.3,550.2 L573.1,558.0 L575.0,553.1 L576.8,552.4 L578.6,568.8 L580.4,572.2 L582.3,563.0 L584.1,559.2 L585.9,565.8 L587.8,568.4 L589.7,565.8 L591.6,565.2 L593.3,573.0 L595.4,563.0 L597.4,557.9 L599.2,565.8 L601.1,568.6 L602.8,578.2 L605.0,566.4 L607.0,566.9 L608.6,580.0 L610.5,580.1 L613.2,557.5 L614.1,589.6 L616.5,577.6 L618.3,583.9 L620.4,580.7 L621.9,594.3 L623.7,600.0 L626.2,588.4 L626.7,622.2 L629.2,610.7 L631.0,616.4 L633.3,610.0 L635.7,603.4 L638.0,597.7 L639.7,604.9 L641.8,605.7 L643.5,612.3 L645.5,613.3 L648.1,605.2 L649.1,622.4 L652.4,604.6 L653.2,625.5 L655.8,617.2 L656.9,632.9 L659.3,629.1 L661.9,622.6 L664.5,616.6 L667.5,606.6 L665.2,636.7 L451.0,571.1Z" fill="url(#w52)"/><path d="M443.0,513.5 L444.6,516.9 L446.2,519.3 L447.9,522.9 L449.1,522.4 L450.2,519.4 L451.6,519.5 L452.5,514.2 L454.8,525.8 L456.0,523.4 L456.7,516.0 L458.6,521.5 L460.7,530.2 L461.9,527.9 L464.8,546.9 L465.6,539.8 L465.5,520.8 L467.9,533.0 L469.8,540.2 L471.5,543.8 L471.8,528.6 L473.5,532.1 L474.2,523.5 L477.0,541.3 L477.9,534.6 L479.4,534.5 L480.8,534.3 L482.6,539.9 L484.5,545.3 L485.8,543.6 L487.0,539.7 L488.2,535.7 L489.5,531.8 L491.9,547.1 L493.3,546.2 L494.4,538.9 L496.1,542.7 L497.1,532.4 L498.8,535.6 L500.5,539.1 L502.5,548.4 L504.2,551.3 L505.3,542.8 L507.5,556.8 L508.6,546.5 L509.8,539.8 L511.9,550.0 L513.1,541.8 L515.3,557.5 L516.2,541.0 L517.6,536.4 L519.8,549.7 L521.5,552.3 L522.2,530.7 L524.2,539.2 L526.4,554.2 L527.4,537.3 L529.2,541.3 L531.1,548.3 L532.7,548.2 L534.5,553.3 L535.7,536.4 L537.5,539.2 L539.1,536.4 L541.4,560.5 L543.0,555.2 L544.7,555.6 L546.4,555.4 L547.9,546.4 L549.9,557.1 L551.6,557.8 L553.3,556.6 L555.0,551.3 L556.8,554.9 L558.6,556.5 L560.3,554.9 L562.3,574.7 L564.0,576.2 L565.7,565.0 L567.5,554.4 L569.3,555.1 L571.1,548.2 L573.0,550.9 L574.8,559.5 L576.6,562.7 L578.5,555.7 L580.2,579.6 L582.2,562.9 L584.0,564.5 L585.8,572.4 L587.8,566.4 L589.7,563.9 L591.5,570.0 L593.6,558.6 L595.3,575.0 L597.1,577.4 L599.0,582.0 L600.9,583.4 L602.8,580.8 L605.1,568.0 L606.5,591.3 L609.0,569.4 L610.7,580.1 L612.2,595.0 L614.3,593.3 L616.1,597.6 L618.2,594.8 L619.9,602.9 L622.4,589.0 L623.6,609.7 L625.5,612.3 L627.9,603.5 L631.0,581.6 L631.8,608.5 L633.8,609.3 L636.2,602.9 L637.7,614.3 L640.4,601.8 L642.7,598.4 L644.3,608.6 L645.9,616.5 L648.0,616.8 L650.6,609.3 L651.2,633.7 L655.3,603.0 L655.6,630.9 L657.7,632.9 L661.4,610.4 L662.3,628.5 L663.8,637.5 L663.7,638.8 L448.7,572.4Z" fill="url(#w53)"/><path d="M440.5,514.8 L442.2,518.2 L443.8,521.2 L445.3,522.7 L446.8,524.8 L447.8,520.9 L449.7,527.2 L450.2,517.6 L452.7,530.4 L453.7,525.7 L454.9,523.9 L456.3,524.5 L457.8,526.2 L459.7,531.5 L460.9,530.2 L463.1,539.1 L463.5,527.3 L466.3,544.1 L467.3,539.1 L468.5,537.1 L469.8,535.6 L471.1,534.3 L473.0,540.3 L473.9,533.3 L475.1,529.8 L476.8,532.5 L476.7,511.1 L480.3,541.2 L481.4,535.7 L483.4,544.2 L485.1,546.8 L486.6,548.0 L487.6,540.9 L490.0,554.1 L490.9,544.7 L492.2,541.5 L493.2,533.6 L494.8,534.3 L496.8,543.8 L498.2,540.7 L500.5,554.4 L501.5,545.0 L502.9,541.7 L504.7,546.0 L506.3,547.4 L507.7,543.6 L509.4,546.3 L511.0,547.8 L512.6,546.9 L514.5,555.5 L515.4,539.0 L518.0,561.9 L519.3,555.0 L520.5,545.4 L522.1,543.3 L523.7,544.1 L525.2,538.2 L527.5,556.0 L528.6,540.1 L530.5,548.0 L532.2,550.1 L533.5,536.8 L535.4,544.5 L537.3,551.4 L539.1,554.5 L540.8,553.4 L542.5,555.9 L544.3,559.6 L545.9,554.0 L547.7,555.5 L549.5,562.4 L551.3,564.2 L552.9,557.3 L554.7,557.3 L556.6,566.6 L558.3,560.8 L560.1,562.5 L561.9,568.4 L563.7,566.4 L565.5,564.7 L567.3,554.5 L569.1,551.6 L570.9,555.2 L572.8,560.7 L574.6,565.7 L576.5,569.7 L578.3,559.7 L580.3,551.6 L582.1,565.9 L583.9,574.0 L585.8,574.7 L587.8,565.8 L589.7,560.6 L591.5,571.8 L593.4,572.1 L595.2,581.0 L596.9,591.1 L599.1,577.3 L601.3,569.2 L602.7,594.8 L605.1,576.6 L607.0,578.0 L608.6,590.6 L610.7,586.7 L612.8,583.6 L614.2,602.6 L616.5,593.5 L618.4,596.9 L621.3,573.2 L622.1,606.2 L624.3,602.2 L626.4,601.0 L627.8,615.6 L630.7,597.6 L631.4,626.6 L634.2,611.9 L635.9,619.4 L638.1,616.7 L640.9,602.7 L642.7,609.9 L644.2,620.5 L645.7,631.1 L647.9,628.7 L650.3,624.7 L651.9,633.3 L653.8,637.0 L656.9,622.8 L658.7,629.2 L660.8,629.9 L663.0,630.7 L662.2,640.9 L446.3,573.7Z" fill="url(#w54)"/><path d="M438.0,516.0 L439.7,519.5 L441.3,522.5 L443.0,525.7 L444.3,525.4 L445.4,522.6 L447.2,527.5 L448.2,523.6 L450.0,528.3 L451.7,532.1 L452.7,528.6 L452.9,515.1 L456.3,538.3 L457.3,534.0 L458.8,534.9 L460.4,537.5 L461.8,536.7 L462.7,531.0 L464.2,532.5 L465.1,525.5 L467.5,537.7 L468.5,532.6 L470.2,536.3 L471.2,529.6 L473.3,538.9 L473.8,525.9 L476.5,543.1 L478.3,548.1 L479.5,544.5 L480.6,539.0 L482.7,547.2 L483.8,541.7 L485.3,542.9 L487.3,549.4 L488.0,538.4 L489.2,532.8 L491.7,547.9 L492.6,538.5 L495.0,552.8 L496.2,547.2 L497.6,546.0 L498.6,535.9 L501.2,554.9 L502.3,545.6 L504.0,549.3 L505.1,540.2 L507.1,548.5 L509.1,556.0 L509.8,537.9 L511.9,549.2 L513.4,545.4 L515.1,549.3 L516.4,540.7 L518.6,554.9 L520.0,548.3 L521.4,542.6 L523.5,555.1 L524.7,543.3 L526.2,538.5 L528.4,552.6 L530.2,555.6 L531.5,545.7 L533.1,541.5 L535.5,566.9 L536.7,549.6 L538.7,557.8 L540.4,557.8 L542.4,570.8 L544.0,567.7 L545.8,571.2 L547.4,564.4 L549.2,567.1 L550.9,562.0 L552.6,561.7 L554.4,563.9 L556.0,550.4 L558.0,559.9 L560.0,580.5 L561.6,561.8 L563.4,560.6 L565.3,571.9 L567.0,551.2 L568.8,548.5 L570.7,559.3 L572.6,573.2 L574.4,579.2 L576.3,565.6 L578.2,558.5 L580.1,568.9 L581.9,579.5 L583.9,568.2 L585.9,560.1 L587.7,565.4 L589.4,583.7 L591.5,572.5 L593.4,578.1 L595.2,582.6 L597.3,575.9 L599.3,574.6 L601.1,581.4 L603.0,583.9 L605.1,582.2 L606.8,593.7 L609.4,572.5 L611.1,583.4 L612.9,589.4 L615.1,583.6 L616.8,594.1 L618.3,608.9 L619.9,619.8 L622.3,609.5 L623.5,630.1 L627.4,587.0 L629.6,584.3 L631.0,600.8 L631.6,632.6 L634.8,608.8 L636.0,627.6 L638.5,619.6 L641.0,611.6 L642.4,624.4 L644.8,620.5 L646.3,632.0 L649.5,613.8 L650.7,629.5 L652.3,639.1 L654.4,639.8 L657.0,633.3 L659.3,631.1 L661.2,635.3 L660.7,643.0 L443.9,575.0Z" fill="url(#w55)"/><path d="M435.5,517.2 L437.2,520.8 L438.9,524.5 L440.3,524.9 L441.7,526.3 L443.0,525.7 L444.6,527.5 L445.3,521.3 L447.1,525.9 L449.0,531.7 L450.4,531.9 L451.3,526.5 L453.4,534.5 L454.8,533.8 L456.7,540.3 L457.5,533.7 L459.7,542.4 L460.8,538.7 L462.1,537.2 L463.0,530.9 L464.6,533.9 L466.1,534.0 L468.3,544.0 L468.9,533.5 L470.6,536.1 L471.9,534.2 L473.4,535.1 L476.0,549.7 L477.3,547.7 L478.5,543.7 L479.7,540.8 L480.3,527.6 L483.7,555.3 L485.1,553.2 L485.0,529.2 L487.9,551.3 L488.7,539.4 L490.5,544.8 L491.9,541.4 L494.0,550.6 L495.6,552.6 L497.5,558.6 L498.8,553.5 L499.8,544.2 L501.7,549.5 L502.7,540.0 L505.1,555.3 L506.3,546.8 L508.0,549.1 L509.3,544.2 L510.8,541.8 L512.9,552.5 L514.6,553.2 L516.3,554.6 L517.9,555.0 L519.6,556.9 L521.4,559.5 L523.0,558.4 L524.5,554.0 L526.5,563.9 L527.9,556.2 L529.4,551.9 L531.1,551.5 L533.1,561.6 L535.1,571.2 L536.4,558.3 L538.3,564.9 L540.0,562.2 L541.9,570.1 L543.5,565.7 L545.3,565.1 L546.9,558.1 L548.9,569.9 L550.4,558.1 L552.3,565.8 L554.1,566.1 L555.8,561.8 L557.8,574.9 L559.5,566.8 L561.3,566.3 L563.2,574.4 L564.9,554.8 L566.8,559.5 L568.7,561.8 L570.5,572.2 L572.4,577.2 L574.3,575.5 L576.1,577.8 L578.0,576.1 L579.8,589.1 L581.9,571.9 L583.7,578.0 L585.7,574.7 L587.7,568.2 L589.5,580.9 L591.3,590.6 L593.3,583.8 L595.4,574.3 L597.3,577.7 L599.1,588.7 L601.2,584.9 L603.3,578.4 L605.3,578.3 L607.2,585.4 L608.7,602.3 L610.6,607.6 L612.9,598.0 L615.3,585.9 L616.5,611.5 L619.3,589.8 L620.6,609.5 L622.6,612.6 L625.3,596.3 L626.6,614.8 L628.8,612.8 L630.2,627.4 L632.3,626.7 L634.3,629.4 L637.7,604.2 L638.9,622.8 L642.2,601.4 L642.5,634.4 L644.6,634.1 L648.1,613.0 L649.6,623.3 L651.6,627.3 L654.2,620.5 L656.5,619.6 L657.9,631.3 L659.2,643.9 L659.1,645.2 L441.5,576.3Z" fill="url(#w56)"/><path d="M432.9,518.4 L434.6,522.0 L436.3,525.4 L437.8,527.1 L439.4,529.6 L440.7,528.6 L442.1,529.4 L443.5,529.4 L444.2,522.5 L446.4,531.6 L447.3,526.4 L449.0,529.6 L449.3,517.9 L452.1,533.5 L454.6,544.9 L455.9,544.4 L456.9,539.7 L457.8,534.3 L460.4,548.1 L461.1,539.7 L462.3,536.9 L463.3,531.4 L465.2,537.6 L466.7,537.4 L469.4,553.5 L469.6,537.5 L470.4,529.1 L473.7,552.9 L475.2,553.0 L475.8,541.5 L477.1,538.8 L478.5,537.6 L480.5,544.6 L481.9,542.7 L484.2,554.3 L485.2,547.7 L486.8,548.7 L487.5,535.4 L489.6,544.0 L491.8,554.8 L492.7,545.2 L494.4,546.6 L495.6,541.5 L497.9,552.9 L499.1,547.9 L500.7,547.3 L502.8,556.5 L504.3,555.6 L506.1,559.8 L507.1,548.3 L509.1,555.6 L510.4,549.7 L512.1,550.0 L513.9,553.8 L515.4,551.5 L517.1,553.2 L518.8,552.2 L520.6,557.7 L522.1,552.8 L523.9,555.1 L525.9,563.8 L526.9,544.2 L529.1,560.1 L530.9,562.0 L532.6,562.0 L534.6,573.0 L536.1,565.1 L538.1,576.5 L539.4,557.6 L541.3,565.3 L543.2,570.5 L544.8,566.1 L546.7,570.3 L548.4,566.5 L550.1,562.3 L551.8,559.2 L553.8,567.3 L555.8,582.6 L557.4,571.7 L559.2,568.7 L561.0,559.6 L562.9,565.9 L564.6,553.0 L566.6,562.5 L568.4,563.7 L570.3,575.5 L572.2,574.3 L574.1,566.9 L576.0,585.9 L577.9,577.2 L579.8,579.6 L581.7,581.8 L583.8,558.9 L585.6,581.2 L587.4,590.0 L589.3,589.9 L591.6,569.2 L593.2,590.1 L595.3,582.5 L597.3,585.2 L599.4,578.6 L601.4,578.6 L603.2,589.7 L605.1,592.9 L607.3,587.6 L608.8,606.6 L610.8,606.2 L613.5,587.5 L615.6,586.8 L617.0,605.3 L618.9,609.7 L620.6,620.3 L623.5,598.1 L624.9,615.6 L626.9,618.7 L629.2,613.8 L631.4,610.8 L633.2,618.9 L634.9,627.2 L636.7,633.2 L639.4,623.5 L640.6,640.7 L642.7,641.4 L645.1,637.8 L647.1,640.0 L649.3,639.9 L651.3,642.9 L653.7,639.1 L657.3,619.0 L657.8,644.8 L657.6,647.4 L439.1,577.7Z" fill="url(#w57)"/><path d="M430.3,519.7 L432.0,523.3 L433.7,526.6 L435.3,529.1 L437.0,532.1 L438.1,530.2 L439.4,529.2 L440.7,528.3 L442.8,536.1 L442.8,521.6 L444.3,523.2 L446.7,533.0 L449.4,547.8 L450.2,541.1 L450.9,533.9 L453.1,542.3 L454.7,544.8 L455.0,532.3 L457.0,538.6 L458.2,535.9 L460.1,542.0 L461.3,538.6 L463.3,545.5 L465.1,549.7 L465.5,537.3 L466.6,532.2 L467.6,526.9 L470.4,543.7 L471.9,543.9 L473.2,540.5 L475.2,547.6 L475.6,533.3 L478.1,546.5 L480.1,553.3 L481.5,551.5 L483.4,558.1 L484.6,553.0 L485.7,547.1 L487.1,544.2 L488.6,544.4 L491.0,556.9 L491.7,544.2 L494.0,556.3 L495.0,546.2 L497.1,554.8 L498.0,543.3 L500.2,553.7 L501.6,550.8 L502.5,537.8 L504.0,535.6 L506.5,551.6 L508.0,550.0 L509.5,546.7 L511.2,547.4 L512.9,549.1 L515.0,559.2 L516.3,550.2 L518.0,550.5 L519.5,547.3 L521.6,555.8 L523.5,563.9 L525.7,576.6 L526.6,555.7 L528.5,559.6 L530.1,555.9 L532.2,568.1 L533.7,562.2 L535.7,569.8 L537.3,564.2 L539.1,566.9 L540.7,561.9 L542.4,559.0 L544.5,572.6 L545.9,555.0 L548.0,571.5 L549.9,578.1 L551.5,562.3 L553.6,584.8 L555.3,575.6 L557.0,567.5 L558.9,568.0 L560.6,551.0 L562.5,561.2 L564.4,559.4 L566.4,583.5 L568.2,572.7 L570.1,579.1 L572.0,564.0 L573.9,581.3 L575.8,579.9 L577.7,583.8 L579.8,561.2 L581.5,591.1 L583.5,582.6 L585.5,583.1 L587.2,602.2 L589.3,589.1 L591.4,583.0 L593.3,591.2 L595.2,594.2 L597.3,587.4 L599.2,592.9 L601.4,583.2 L603.3,592.0 L605.4,590.2 L607.4,592.4 L609.1,601.6 L611.4,596.3 L612.7,619.0 L615.2,606.7 L617.0,614.4 L619.0,614.5 L621.1,615.1 L623.3,612.5 L624.9,624.1 L626.9,627.0 L629.4,619.9 L632.6,595.8 L633.7,619.1 L635.3,630.4 L637.0,639.0 L639.6,629.2 L642.3,619.9 L643.1,644.2 L646.0,632.0 L648.2,633.1 L649.6,646.3 L652.1,641.8 L653.9,647.7 L656.2,647.4 L656.0,649.6 L436.6,579.0Z" fill="url(#w58)"/><path d="M427.7,520.9 L429.4,524.6 L431.1,527.9 L432.8,530.9 L434.1,530.5 L435.4,530.0 L437.1,532.9 L438.7,535.4 L440.0,535.1 L440.9,530.5 L443.4,541.8 L444.2,535.9 L446.3,543.1 L447.9,544.5 L448.4,535.2 L450.6,543.6 L452.0,544.1 L453.5,545.0 L455.6,552.5 L455.1,531.3 L456.2,526.5 L458.2,533.0 L461.9,559.9 L462.3,547.6 L463.3,542.2 L464.4,537.2 L466.8,548.7 L468.3,549.0 L469.3,543.9 L471.3,550.6 L472.2,542.9 L473.7,543.0 L475.6,547.5 L476.7,542.6 L477.5,531.6 L480.1,546.5 L481.8,549.9 L482.5,536.9 L484.6,545.4 L486.6,552.2 L488.5,557.6 L489.6,550.0 L491.2,550.4 L492.6,547.3 L494.8,558.1 L496.1,553.2 L498.3,564.1 L500.0,566.8 L500.6,547.3 L502.0,543.7 L504.1,553.4 L505.6,550.2 L507.0,546.5 L508.6,544.7 L511.2,563.3 L512.5,557.2 L514.4,562.3 L515.9,558.2 L517.4,554.5 L518.8,547.3 L521.2,563.6 L523.1,568.6 L524.3,556.1 L526.2,560.2 L527.5,550.0 L529.7,562.5 L531.5,564.3 L533.7,580.4 L535.5,583.4 L536.9,569.6 L538.6,566.6 L540.3,566.0 L542.1,565.2 L544.1,576.6 L545.7,565.4 L547.6,570.8 L549.2,559.4 L551.2,572.5 L553.1,577.2 L555.0,580.2 L556.6,559.3 L558.4,550.6 L560.4,561.3 L562.4,574.9 L564.2,576.1 L566.2,584.6 L568.0,580.1 L569.9,564.2 L571.8,577.5 L573.7,589.4 L575.7,584.1 L577.6,579.7 L579.6,567.1 L581.5,579.8 L583.4,589.1 L585.4,590.8 L587.2,598.0 L589.5,578.4 L591.4,582.7 L593.4,587.2 L595.7,567.9 L597.3,591.6 L599.7,572.6 L601.6,584.1 L603.2,601.9 L605.1,606.9 L607.6,591.7 L609.0,613.9 L611.4,602.6 L612.8,625.2 L614.8,627.2 L617.3,613.5 L619.0,624.6 L620.9,629.6 L623.3,621.8 L625.3,624.3 L627.2,630.7 L629.8,619.8 L631.4,632.3 L633.3,636.7 L636.2,621.7 L638.0,630.1 L639.3,645.7 L642.0,636.5 L643.6,647.1 L647.1,624.8 L647.9,648.5 L651.2,631.3 L653.0,639.7 L654.8,645.9 L654.4,651.9 L434.2,580.4Z" fill="url(#w59)"/><path d="M425.1,522.2 L426.8,526.0 L428.5,529.3 L430.2,532.6 L431.7,533.5 L433.2,535.0 L434.1,531.0 L436.2,537.8 L437.9,540.8 L438.5,533.4 L441.2,546.1 L441.5,536.0 L442.7,533.6 L444.2,534.6 L446.1,540.2 L447.8,542.9 L448.7,537.9 L450.8,544.3 L452.6,548.5 L453.4,541.6 L453.9,531.7 L458.1,562.5 L458.2,546.9 L459.2,542.5 L460.5,540.4 L461.7,537.7 L463.2,536.8 L466.2,555.3 L466.2,537.5 L468.0,541.7 L470.6,555.6 L471.2,543.7 L473.0,547.8 L474.9,553.0 L476.0,547.5 L477.9,552.9 L479.7,556.2 L480.1,540.2 L482.1,545.8 L483.6,545.0 L486.0,557.5 L487.6,559.2 L489.1,558.4 L490.1,549.1 L492.7,564.5 L493.6,553.7 L494.7,545.2 L496.3,544.6 L497.6,540.1 L500.4,560.2 L501.6,553.4 L503.1,550.4 L505.7,568.0 L506.9,559.6 L508.4,557.7 L510.6,567.3 L512.2,566.8 L513.8,565.1 L515.6,567.5 L516.8,557.7 L518.5,556.7 L520.2,555.6 L523.0,583.9 L524.3,574.5 L525.8,569.6 L527.6,571.0 L529.4,573.7 L531.6,588.1 L533.1,578.9 L534.3,560.2 L536.5,575.2 L538.0,567.5 L539.9,570.2 L541.5,562.8 L543.6,576.1 L545.4,576.1 L547.0,562.9 L549.0,573.4 L550.8,572.7 L552.4,557.3 L554.3,557.7 L556.2,559.5 L558.3,578.0 L560.1,570.4 L562.1,582.0 L564.0,581.4 L565.8,569.5 L567.7,567.7 L569.7,576.5 L571.6,593.9 L573.6,575.0 L575.5,579.0 L577.5,582.3 L579.4,589.7 L581.3,591.9 L583.2,599.3 L585.4,583.1 L587.4,585.0 L589.2,601.4 L591.3,593.1 L593.4,589.1 L595.2,602.4 L597.7,574.8 L599.2,601.6 L600.8,622.1 L603.6,590.1 L605.3,607.1 L607.2,610.8 L609.7,596.4 L611.2,617.8 L613.2,618.7 L615.2,623.5 L617.6,615.1 L620.2,602.0 L621.5,624.0 L623.0,638.5 L624.9,643.5 L628.5,611.0 L630.8,608.7 L631.6,637.9 L634.1,631.1 L637.2,614.5 L637.9,641.8 L639.8,648.6 L641.9,649.3 L646.3,612.1 L646.3,650.8 L648.9,644.4 L651.4,640.4 L654.0,635.6 L652.8,654.2 L431.6,581.8Z" fill="url(#w60)"/><path d="M422.4,523.5 L424.1,527.3 L425.8,530.4 L427.7,535.0 L429.2,536.2 L430.6,537.1 L431.9,536.5 L433.6,539.0 L434.9,538.5 L436.1,536.7 L437.5,537.6 L438.8,536.2 L441.2,546.2 L442.1,541.2 L444.7,553.6 L444.3,534.7 L448.4,563.2 L449.3,557.8 L449.8,547.3 L450.7,542.0 L452.3,544.3 L454.0,546.4 L456.2,555.6 L457.0,547.8 L458.0,542.7 L459.4,541.4 L460.9,542.5 L463.2,552.1 L464.9,554.8 L466.3,553.4 L468.1,557.0 L468.5,543.5 L471.7,564.2 L472.2,552.1 L474.6,563.7 L475.5,555.2 L476.1,542.3 L478.9,560.0 L479.7,549.9 L481.5,553.4 L483.7,561.7 L485.6,566.7 L487.0,564.7 L486.5,533.6 L488.9,545.0 L491.2,556.5 L492.9,558.5 L494.0,548.9 L495.9,554.3 L497.7,557.0 L499.4,558.8 L500.6,550.0 L503.2,569.0 L504.1,553.9 L506.5,569.2 L507.9,564.1 L509.9,569.6 L511.7,573.5 L512.9,562.8 L514.0,549.4 L516.3,562.3 L518.1,564.4 L519.8,564.4 L521.6,566.5 L523.7,575.4 L524.8,559.2 L526.8,566.1 L529.3,588.1 L530.6,576.1 L532.2,570.7 L534.1,572.0 L535.8,571.9 L537.6,569.4 L539.4,573.0 L541.4,579.5 L543.1,573.8 L544.8,567.0 L547.0,584.0 L548.4,562.8 L550.5,576.6 L552.3,572.2 L554.0,562.2 L555.9,564.2 L557.9,570.8 L560.0,591.4 L561.8,584.2 L563.7,580.2 L565.7,586.3 L567.6,591.0 L569.5,598.6 L571.4,581.0 L573.4,574.4 L575.4,579.7 L577.3,599.0 L579.3,580.9 L581.2,604.8 L583.0,620.7 L585.1,602.6 L587.2,599.3 L589.2,594.1 L591.3,591.8 L593.2,600.7 L595.6,579.6 L597.2,603.3 L599.2,610.0 L601.4,601.9 L603.3,611.4 L605.6,601.9 L607.8,598.8 L609.9,599.6 L611.6,612.2 L613.3,624.0 L615.7,617.7 L617.3,630.7 L619.8,622.5 L622.4,611.1 L624.2,619.0 L626.1,625.3 L628.5,620.4 L630.8,618.7 L632.6,628.4 L634.3,636.9 L636.2,644.1 L638.3,645.8 L640.2,651.6 L644.4,617.6 L645.2,641.6 L647.5,642.3 L649.5,646.4 L652.1,640.7 L651.1,656.5 L429.1,583.2Z" fill="url(#w61)"/><path d="M419.7,524.7 L421.4,528.6 L423.2,532.3 L424.8,534.5 L426.3,535.8 L427.7,535.7 L428.9,534.9 L430.7,538.3 L432.7,544.4 L434.1,544.3 L435.7,546.4 L436.7,542.7 L439.5,556.2 L439.9,547.0 L441.3,546.7 L442.5,544.9 L444.3,548.4 L447.2,564.0 L448.1,558.6 L448.3,546.0 L449.2,539.9 L452.0,554.5 L454.4,565.1 L455.2,557.9 L456.8,559.8 L456.6,541.1 L459.3,554.3 L460.7,553.6 L463.0,563.2 L463.4,550.6 L464.3,543.9 L466.4,551.0 L469.7,572.4 L470.4,563.4 L471.4,556.8 L473.1,559.0 L474.2,552.1 L475.4,548.4 L477.6,556.4 L478.4,546.2 L481.5,567.9 L480.9,537.0 L483.5,551.3 L484.9,547.9 L487.4,562.3 L488.1,548.5 L490.3,558.4 L491.8,556.1 L493.6,558.9 L495.5,563.7 L496.4,550.8 L498.1,552.0 L500.4,563.5 L502.0,562.1 L504.5,577.8 L505.1,558.6 L507.0,562.4 L508.5,559.0 L509.4,542.1 L512.2,563.7 L513.9,564.4 L516.1,576.3 L517.5,567.8 L518.8,558.7 L520.5,555.9 L522.7,568.7 L525.1,585.2 L526.8,584.8 L528.2,574.0 L530.4,586.8 L532.2,588.8 L533.7,579.3 L535.2,570.3 L536.9,566.7 L539.1,580.2 L540.7,573.6 L542.7,577.7 L544.3,568.4 L546.5,584.7 L548.3,580.6 L549.9,565.9 L551.8,568.2 L553.8,573.1 L555.7,573.3 L557.9,596.9 L559.7,591.0 L561.5,585.3 L563.4,579.5 L565.4,581.0 L567.3,589.5 L569.2,574.0 L571.2,570.8 L573.2,590.9 L575.2,586.9 L577.1,606.5 L579.1,592.8 L581.2,589.8 L583.1,593.4 L585.1,597.0 L587.0,608.1 L589.3,591.3 L591.3,593.9 L593.4,588.9 L595.4,595.9 L597.5,593.9 L599.4,605.8 L601.4,608.0 L603.2,621.3 L605.8,600.9 L607.2,626.1 L609.5,618.6 L611.9,611.6 L613.5,626.8 L615.4,633.1 L617.1,646.4 L619.8,631.8 L622.8,611.4 L623.9,637.3 L626.4,628.1 L628.2,638.3 L630.0,647.4 L633.3,624.0 L634.1,652.5 L637.8,624.9 L639.6,633.0 L641.3,643.2 L643.0,653.0 L645.9,641.8 L647.6,652.2 L650.7,639.3 L649.4,658.9 L426.5,584.6Z" fill="url(#w62)"/><path d="M416.9,526.0 L418.7,529.9 L420.5,533.8 L422.2,536.3 L423.7,537.9 L424.8,535.2 L426.8,541.4 L428.1,540.6 L430.2,547.6 L430.0,532.3 L432.8,545.7 L434.2,546.4 L435.2,542.0 L437.6,551.4 L439.7,559.0 L441.6,563.4 L440.7,540.7 L442.1,540.6 L445.6,561.4 L445.6,546.6 L447.7,553.4 L448.8,549.6 L449.9,545.7 L451.7,549.4 L454.3,562.7 L453.9,541.9 L456.1,549.9 L458.3,557.6 L459.5,554.3 L462.1,566.9 L460.8,534.7 L464.5,560.3 L465.5,554.1 L467.9,564.7 L468.2,549.8 L470.0,553.7 L471.0,546.4 L471.6,533.0 L473.9,543.2 L477.6,571.4 L478.4,561.6 L479.1,549.4 L480.7,550.2 L482.4,551.6 L484.3,554.5 L486.3,561.1 L487.4,552.6 L489.2,555.6 L491.1,561.0 L493.0,564.6 L494.1,556.5 L496.3,566.1 L497.6,560.0 L499.6,564.9 L501.2,564.1 L502.9,564.8 L504.3,559.7 L506.4,566.9 L507.6,557.8 L508.5,539.9 L511.5,566.9 L513.6,574.8 L514.7,561.2 L516.8,568.6 L518.9,577.3 L520.6,576.4 L522.4,578.6 L524.4,586.1 L525.9,578.1 L527.6,575.6 L529.7,585.3 L531.1,574.5 L533.0,575.9 L534.7,573.8 L536.7,579.0 L538.9,593.5 L540.3,575.0 L542.2,579.8 L544.1,581.0 L546.1,587.1 L547.6,571.0 L549.3,559.7 L551.5,573.3 L553.4,576.1 L555.7,600.2 L557.4,588.3 L559.2,578.5 L561.1,571.7 L563.2,590.8 L565.2,595.0 L567.1,591.3 L569.0,575.3 L571.0,577.6 L573.0,605.8 L575.0,611.8 L577.0,599.8 L578.9,607.9 L581.0,599.5 L583.0,598.7 L585.2,586.0 L587.2,589.9 L589.1,604.8 L591.1,607.8 L593.0,615.5 L595.3,603.7 L597.3,608.9 L599.5,604.8 L601.3,616.6 L603.6,611.9 L605.4,623.9 L607.3,630.1 L609.4,631.2 L612.3,605.4 L614.0,620.0 L616.1,623.4 L617.3,649.7 L620.4,625.5 L622.4,628.8 L625.4,612.0 L627.4,617.3 L629.3,623.8 L630.7,642.8 L632.3,654.8 L635.1,643.4 L638.4,624.6 L639.0,654.0 L641.5,651.3 L644.7,634.6 L645.9,653.1 L647.8,660.0 L647.7,661.3 L423.9,586.0Z" fill="url(#w63)"/><line x1="407.0" y1="595.3" x2="636.5" y2="677.1" stroke="#ffffff" stroke-width="2"/><line x1="636.5" y1="677.1" x2="721.4" y2="557.5" stroke="#ffffff" stroke-width="2"/><text x="374.8" y="450.0" font-size="10.5" font-weight="700" fill="#ffffff" text-anchor="start" >90</text><text x="378.03333333333336" y="474.3333333333333" font-size="10.5" font-weight="700" fill="#ffffff" text-anchor="start" >80</text><text x="381.26666666666665" y="498.6666666666667" font-size="10.5" font-weight="700" fill="#ffffff" text-anchor="start" >70</text><text x="384.5" y="523.0" font-size="10.5" font-weight="700" fill="#ffffff" text-anchor="start" >60</text><text x="387.73333333333335" y="547.3333333333334" font-size="10.5" font-weight="700" fill="#ffffff" text-anchor="start" >50</text><text x="390.96666666666664" y="571.6666666666666" font-size="10.5" font-weight="700" fill="#ffffff" text-anchor="start" >40</text><text x="394.2" y="596.0" font-size="10.5" font-weight="700" fill="#ffffff" text-anchor="start" >30</text><text x="377.5" y="463" font-size="10.5" font-weight="700" fill="#ffffff" text-anchor="start" >dB</text><polygon points="382.3,447.5 388.3,447.5 404.5,570.1 399.5,570.1" fill="url(#gCS)"/><line x1="387.6" y1="447.5" x2="407.0" y2="595.3" stroke="#ffffff" stroke-width="2"/><text x="424.58930461305226" y="609.3880270949411" font-size="10.5" font-weight="700" fill="#ffffff" text-anchor="middle" >31.5</text><text x="442.91496629500494" y="615.9247582772978" font-size="10.5" font-weight="700" fill="#ffffff" text-anchor="middle" >63</text><text x="461.9271897720465" y="622.7063848403758" font-size="10.5" font-weight="700" fill="#ffffff" text-anchor="middle" >12</text><text x="482.137463544483" y="629.9153538296023" font-size="10.5" font-weight="700" fill="#ffffff" text-anchor="middle" >250</text><text x="503.4073128789824" y="637.502271551966" font-size="10.5" font-weight="700" fill="#ffffff" text-anchor="middle" >500</text><text x="525.8223073371051" y="645.4976605190698" font-size="10.5" font-weight="700" fill="#ffffff" text-anchor="middle" >1k</text><text x="549.4774853170347" y="653.9354207598301" font-size="10.5" font-weight="700" fill="#ffffff" text-anchor="middle" >2k</text><text x="574.4787010537588" y="662.8533102930638" font-size="10.5" font-weight="700" fill="#ffffff" text-anchor="middle" >4k</text><text x="587.1350501228344" y="667.3678076711362" font-size="10.5" font-weight="700" fill="#ffffff" text-anchor="middle" >Hz</text><text x="600.944208295851" y="672.2935100222032" font-size="10.5" font-weight="700" fill="#ffffff" text-anchor="middle" >8k</text><text x="723.4452272838248" y="565.533402969075" font-size="10.5" font-weight="700" fill="#ffffff" text-anchor="start" >0</text><text x="711.5805428581652" y="582.2299074179043" font-size="10.5" font-weight="700" fill="#ffffff" text-anchor="start" >40</text><text x="697.7791339192281" y="601.6518555694047" font-size="10.5" font-weight="700" fill="#ffffff" text-anchor="start" >80</text><text x="681.5246470889452" y="624.525882550545" font-size="10.5" font-weight="700" fill="#ffffff" text-anchor="start" >120</text><text x="662.0992708339688" y="651.862124242735" font-size="10.5" font-weight="700" fill="#ffffff" text-anchor="start" >160</text><text x="647.9091490550635" y="671.8310861561702" font-size="10.5" font-weight="700" fill="#ffffff" text-anchor="start" >ms</text><text x="644.4748664732457" y="689.107422504246" font-size="10.5" font-weight="700" fill="#ffffff" text-anchor="middle" >200</text></g><rect x="1029.5" y="95.5" width="75" height="160" rx="2" fill="none" stroke="#d5dfe5"/><rect x="1030.5" y="96.5" width="73" height="158" rx="2" fill="none" stroke="#ffffff"/><rect x="1035.5" y="94" width="46" height="4" fill="#f0f0f0" /><text x="1037.5" y="99" font-size="11" font-weight="400" fill="#000" text-anchor="start" letter-spacing="-0.3">Measure</text><rect x="1038.5" y="109.5" width="56" height="21" rx="3" fill="url(#gBtn)" stroke="#707070"/><rect x="1039.5" y="110.5" width="54" height="19" rx="2" fill="none" stroke="#ffffff" stroke-opacity="0.55"/><text x="1066.5" y="123.8" font-size="11" font-weight="400" fill="#000" text-anchor="middle" letter-spacing="-0.3">Measure</text><rect x="1037" y="146" width="4" height="1" fill="#b0b0b0" /><rect x="1064" y="146" width="5" height="1" fill="#b0b0b0" /><rect x="1037" y="160" width="4" height="1" fill="#b0b0b0" /><rect x="1064" y="160" width="5" height="1" fill="#b0b0b0" /><rect x="1037" y="172" width="4" height="1" fill="#b0b0b0" /><rect x="1064" y="172" width="5" height="1" fill="#b0b0b0" /><rect x="1037" y="185" width="4" height="1" fill="#b0b0b0" /><rect x="1064" y="185" width="5" height="1" fill="#b0b0b0" /><rect x="1037" y="197" width="4" height="1" fill="#b0b0b0" /><rect x="1064" y="197" width="5" height="1" fill="#b0b0b0" /><rect x="1037" y="210" width="4" height="1" fill="#b0b0b0" /><rect x="1064" y="210" width="5" height="1" fill="#b0b0b0" /><rect x="1037" y="222" width="4" height="1" fill="#b0b0b0" /><rect x="1064" y="222" width="5" height="1" fill="#b0b0b0" /><rect x="1051" y="151" width="2" height="77" fill="#b8b8b8" /><rect x="1052" y="151" width="1" height="77" fill="#ffffff" /><rect x="1042.5" y="142.5" width="20" height="9" rx="2" fill="url(#gBtn)" stroke="#707070"/><rect x="1085" y="139" width="12" height="89" fill="#000" /><text x="1079.8" y="142.8" font-size="11.5" font-weight="700" fill="#d81818" text-anchor="middle" stroke="#a00" stroke-width="0.3">H</text><text x="1079.8" y="188" font-size="11.5" font-weight="700" fill="#2ad42a" text-anchor="middle" stroke="#1a1" stroke-width="0.3">G</text><text x="1079.8" y="232.8" font-size="11.5" font-weight="700" fill="#1a1aa8" text-anchor="middle" stroke="#006" stroke-width="0.3">L</text><text x="1035.5" y="249" font-size="11" font-weight="400" fill="#000" text-anchor="start" letter-spacing="-0.3">Output Level</text><rect x="1029.5" y="263.5" width="75" height="211" rx="2" fill="none" stroke="#d5dfe5"/><rect x="1030.5" y="264.5" width="73" height="209" rx="2" fill="none" stroke="#ffffff"/><rect x="1035.5" y="262" width="32" height="4" fill="#f0f0f0" /><text x="1037.5" y="267" font-size="11" font-weight="400" fill="#000" text-anchor="start" letter-spacing="-0.3">Show</text><text x="1036" y="282.6" font-size="11" font-weight="400" fill="#000" text-anchor="start" letter-spacing="-0.3">Scale range:</text><rect x="1035.5" y="290.5" width="62" height="20" rx="3" fill="url(#gBtn)" stroke="#707070"/><rect x="1036.5" y="291.5" width="60" height="18" rx="2" fill="none" stroke="#ffffff" stroke-opacity="0.55"/><text x="1042.5" y="304.5" font-size="11" font-weight="400" fill="#000" text-anchor="start" letter-spacing="-0.3">60 dB</text><polygon points="1082.5,298.5 1090.5,298.5 1086.5,303.0" fill="#000"/><rect x="1038.5" y="318.5" width="57" height="17" rx="3" fill="url(#gBlue)" stroke="#2c628b"/><rect x="1039.5" y="319.5" width="55" height="15" rx="2" fill="none" stroke="#ffffff" stroke-opacity="0.55"/><text x="1067.0" y="330.3" font-size="11" font-weight="400" fill="#000" text-anchor="middle" letter-spacing="-0.3">Anechoic</text><rect x="1038.5" y="340.5" width="57" height="17" rx="3" fill="url(#gBtn)" stroke="#707070"/><rect x="1039.5" y="341.5" width="55" height="15" rx="2" fill="none" stroke="#ffffff" stroke-opacity="0.55"/><text x="1067.0" y="353" font-size="11" font-weight="400" fill="#000" text-anchor="middle" letter-spacing="-0.3">Ambient</text><rect x="1038.5" y="361.5" width="57" height="17" rx="3" fill="url(#gBtn)" stroke="#707070"/><rect x="1039.5" y="362.5" width="55" height="15" rx="2" fill="none" stroke="#ffffff" stroke-opacity="0.55"/><text x="1067.0" y="374.2" font-size="11" font-weight="400" fill="#000" text-anchor="middle" letter-spacing="-0.3">Raw</text><rect x="1038.5" y="395.5" width="57" height="17" rx="3" fill="url(#gBlue)" stroke="#2c628b"/><rect x="1039.5" y="396.5" width="55" height="15" rx="2" fill="none" stroke="#ffffff" stroke-opacity="0.55"/><text x="1067.0" y="408" font-size="11" font-weight="400" fill="#000" text-anchor="middle" letter-spacing="-0.3">RT60</text><text x="1035.5" y="436.8" font-size="11" font-weight="400" fill="#000" text-anchor="start" letter-spacing="-0.3">Waterfall:</text><rect x="1035.5" y="444.5" width="62" height="20" rx="3" fill="url(#gBtn)" stroke="#707070"/><rect x="1036.5" y="445.5" width="60" height="18" rx="2" fill="none" stroke="#ffffff" stroke-opacity="0.55"/><text x="1042.5" y="459.2" font-size="11" font-weight="400" fill="#000" text-anchor="start" letter-spacing="-0.3">3D [R]</text><polygon points="1082.5,452.5 1090.5,452.5 1086.5,457.0" fill="#000"/><rect x="1029.5" y="475.5" width="75" height="106" rx="2" fill="none" stroke="#d5dfe5"/><rect x="1030.5" y="476.5" width="73" height="104" rx="2" fill="none" stroke="#ffffff"/><rect x="1035.5" y="474" width="42" height="4" fill="#f0f0f0" /><text x="1037.5" y="479.7" font-size="11" font-weight="400" fill="#000" text-anchor="start" letter-spacing="-0.3">Overlay</text><rect x="1035.5" y="489.5" width="17" height="17" rx="3" fill="url(#gCyan)" stroke="#4aa8c8"/><rect x="1036.5" y="490.5" width="15" height="15" rx="2" fill="none" stroke="#7cc8e0" stroke-opacity="0.9"/><text x="1044.0" y="502.2" font-size="11" font-weight="400" fill="#000" text-anchor="middle" letter-spacing="-0.3">1</text><rect x="1057.5" y="489.5" width="42" height="17" rx="3" fill="url(#gBtn)" stroke="#707070"/><rect x="1058.5" y="490.5" width="40" height="15" rx="2" fill="none" stroke="#ffffff" stroke-opacity="0.55"/><text x="1078.5" y="502.2" font-size="11" font-weight="400" fill="#000" text-anchor="middle" letter-spacing="-0.3">Show 1</text><rect x="1035.5" y="512.5" width="17" height="17" rx="3" fill="url(#gBtn)" stroke="#707070"/><rect x="1036.5" y="513.5" width="15" height="15" rx="2" fill="none" stroke="#ffffff" stroke-opacity="0.55"/><text x="1044.0" y="525.2" font-size="11" font-weight="400" fill="#000" text-anchor="middle" letter-spacing="-0.3">2</text><rect x="1057.5" y="512.5" width="42" height="17" rx="3" fill="url(#gBlue)" stroke="#2c628b"/><rect x="1058.5" y="513.5" width="40" height="15" rx="2" fill="none" stroke="#ffffff" stroke-opacity="0.55"/><text x="1078.5" y="525.2" font-size="11" font-weight="400" fill="#000" text-anchor="middle" letter-spacing="-0.3">Show 2</text><rect x="1035.5" y="535.5" width="17" height="17" rx="3" fill="url(#gBtn)" stroke="#707070"/><rect x="1036.5" y="536.5" width="15" height="15" rx="2" fill="none" stroke="#ffffff" stroke-opacity="0.55"/><text x="1044.0" y="548.2" font-size="11" font-weight="400" fill="#000" text-anchor="middle" letter-spacing="-0.3">3</text><rect x="1057.5" y="535.5" width="42" height="17" rx="3" fill="url(#gBtn)" stroke="#707070"/><rect x="1058.5" y="536.5" width="40" height="15" rx="2" fill="none" stroke="#ffffff" stroke-opacity="0.55"/><text x="1078.5" y="548.2" font-size="11" font-weight="400" fill="#000" text-anchor="middle" letter-spacing="-0.3">Show 3</text><rect x="1035.5" y="556.5" width="17" height="17" rx="3" fill="url(#gBtn)" stroke="#707070"/><rect x="1036.5" y="557.5" width="15" height="15" rx="2" fill="none" stroke="#ffffff" stroke-opacity="0.55"/><text x="1044.0" y="569.2" font-size="11" font-weight="400" fill="#000" text-anchor="middle" letter-spacing="-0.3">4</text><rect x="1057.5" y="556.5" width="42" height="17" rx="3" fill="url(#gBtn)" stroke="#707070"/><rect x="1058.5" y="557.5" width="40" height="15" rx="2" fill="none" stroke="#ffffff" stroke-opacity="0.55"/><text x="1078.5" y="569.2" font-size="11" font-weight="400" fill="#000" text-anchor="middle" letter-spacing="-0.3">Show 4</text><rect x="1029.5" y="587.5" width="75" height="64" rx="2" fill="none" stroke="#d5dfe5"/><rect x="1030.5" y="588.5" width="73" height="62" rx="2" fill="none" stroke="#ffffff"/><rect x="1035" y="586" width="50" height="4" fill="#f0f0f0" /><text x="1037" y="591.8" font-size="11" font-weight="400" fill="#000" text-anchor="start" letter-spacing="-0.3">Alignment</text><rect x="1035.5" y="603.5" width="62" height="17" rx="3" fill="url(#gBtn)" stroke="#707070"/><rect x="1036.5" y="604.5" width="60" height="15" rx="2" fill="none" stroke="#ffffff" stroke-opacity="0.55"/><text x="1066.5" y="616" font-size="11" font-weight="400" fill="#000" text-anchor="middle" letter-spacing="-0.3">Align Delay</text><rect x="1035.5" y="628.5" width="62" height="16" rx="3" fill="#f4f4f4" stroke="#adb2b5"/><rect x="1036.5" y="629.5" width="60" height="14" rx="2" fill="none" stroke="#ffffff" stroke-opacity="0.55"/><text x="1066.5" y="640.5" font-size="11" font-weight="400" fill="#8d8d8d" text-anchor="middle" letter-spacing="-0.3">Auto Align</text><rect x="127.5" y="717.5" width="82" height="18" fill="url(#gTab)" stroke="#8a8a8a"/><rect x="209.5" y="717.5" width="69" height="18" fill="url(#gTab)" stroke="#8a8a8a"/><rect x="278" y="715" width="67" height="22" fill="#8a8a8a" /><rect x="279" y="715" width="65" height="22" fill="#ffffff" /><rect x="279" y="715" width="65" height="1" fill="#d8d8d8" /><text x="168.5" y="730" font-size="11" font-weight="400" fill="#000" text-anchor="middle" letter-spacing="-0.3">Room Analyzer</text><text x="245" y="730" font-size="11" font-weight="400" fill="#000" text-anchor="middle" letter-spacing="-0.3">RTA</text><text x="311.5" y="731.5" font-size="11" font-weight="400" fill="#000" text-anchor="middle" letter-spacing="-0.3">Full Range</text><rect x="14.5" y="656.5" width="94" height="20" rx="3" fill="url(#gBtn)" stroke="#707070"/><rect x="15.5" y="657.5" width="92" height="18" rx="2" fill="none" stroke="#ffffff" stroke-opacity="0.55"/><text x="21.5" y="671" font-size="11" font-weight="400" fill="#000" text-anchor="start" letter-spacing="-0.3">Slow (1s)</text><polygon points="93.5,664.5 101.5,664.5 97.5,669.0" fill="#000"/><rect x="14.5" y="681.5" width="94" height="20" rx="3" fill="url(#gBtn)" stroke="#707070"/><rect x="15.5" y="682.5" width="92" height="18" rx="2" fill="none" stroke="#ffffff" stroke-opacity="0.55"/><text x="21.5" y="696" font-size="11" font-weight="400" fill="#000" text-anchor="start" letter-spacing="-0.3">C - Weighting</text><polygon points="93.5,689.5 101.5,689.5 97.5,694.0" fill="#000"/><rect x="15.5" y="706.5" width="92" height="18" fill="#f0f0f0" stroke="#e2e2e2"/><text x="61.5" y="719.7" font-size="11" font-weight="400" fill="#000" text-anchor="middle" letter-spacing="-0.3">04m41s</text><rect x="15.5" y="731.5" width="44" height="20" rx="3" fill="url(#gBtn)" stroke="#707070"/><rect x="16.5" y="732.5" width="42" height="18" rx="2" fill="none" stroke="#ffffff" stroke-opacity="0.55"/><text x="37.5" y="746" font-size="11" font-weight="400" fill="#000" text-anchor="middle" letter-spacing="-0.3">Reset</text><rect x="63.5" y="731.5" width="44" height="20" rx="3" fill="url(#gBtn)" stroke="#707070"/><rect x="64.5" y="732.5" width="42" height="18" rx="2" fill="none" stroke="#ffffff" stroke-opacity="0.55"/><text x="85.5" y="746" font-size="11" font-weight="400" fill="#000" text-anchor="middle" letter-spacing="-0.3">Pause</text></svg></body></html>
